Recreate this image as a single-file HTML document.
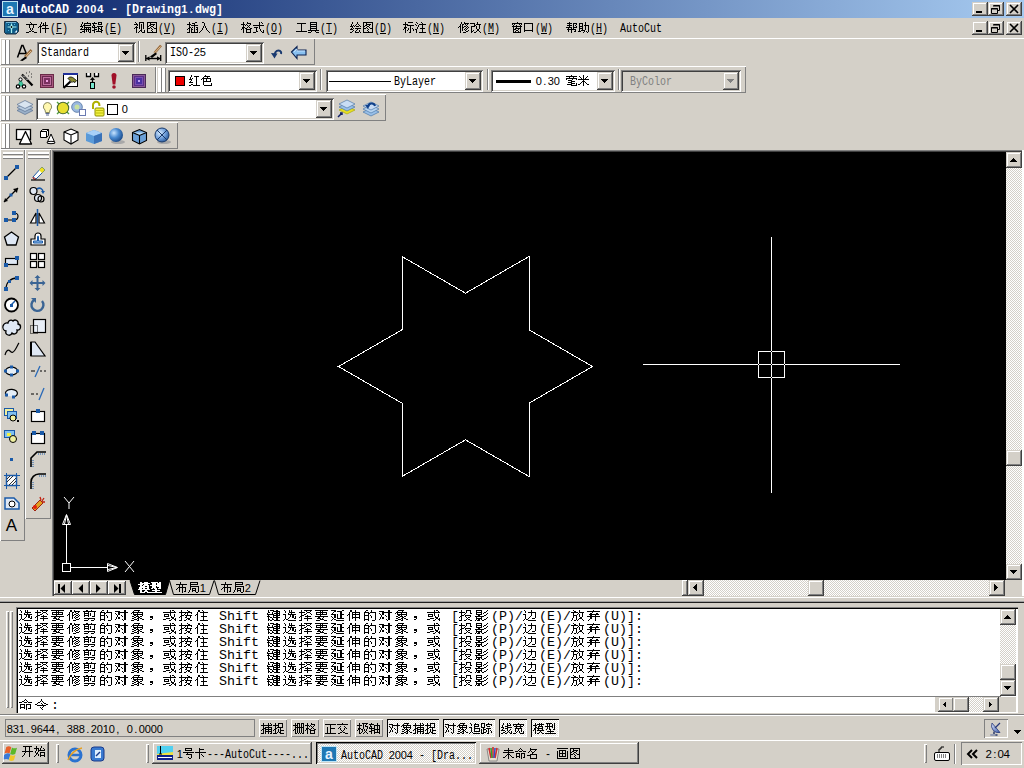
<!DOCTYPE html><html><head><meta charset="utf-8"><style>
*{margin:0;padding:0;box-sizing:border-box}
html,body{width:1024px;height:768px;overflow:hidden;background:#d4d0c8;font-family:"Liberation Sans",sans-serif}
body{position:relative}
div{position:absolute}
svg{position:absolute;overflow:visible}
svg.t{position:absolute;overflow:visible}
text{white-space:pre}
</style></head><body>
<div style="left:0px;top:0px;width:1024px;height:18px;background:linear-gradient(to right,#0a246a,#a6caf0);"></div>
<svg style="left:2px;top:1px" width="16" height="16" viewBox="0 0 16 16"><rect x="0.5" y="0.5" width="15" height="15" fill="#1e78b4" stroke="#bfe4f5"/><text x="8" y="13" text-anchor="middle" font-family="Liberation Sans" font-weight="bold" font-size="14" fill="#e8f4ff">a</text></svg>
<svg class="t" style="left:20px;top:1px;" width="207" height="18"><text x="0" y="12" font-family="Liberation Mono" font-size="12.00" font-weight="bold" fill="#fff" textLength="56" lengthAdjust="spacingAndGlyphs">AutoCAD&#160;</text><text x="56.16 63.16 70.16 77.16" y="12" font-family="Liberation Sans" font-size="11.04" font-weight="bold" fill="#fff">2004</text><text x="84" y="12" font-family="Liberation Mono" font-size="12.00" font-weight="bold" fill="#fff" textLength="77" lengthAdjust="spacingAndGlyphs">&#160;-&#160;[Drawing</text><text x="161.16 169.83" y="12" font-family="Liberation Sans" font-size="11.04" font-weight="bold" fill="#fff">1.</text><text x="175" y="12" font-family="Liberation Mono" font-size="12.00" font-weight="bold" fill="#fff" textLength="28" lengthAdjust="spacingAndGlyphs">dwg]</text></svg>
<div style="left:972px;top:2px;width:16px;height:14px;box-shadow:inset -1px -1px #404040,inset 1px 1px #d4d0c8,inset -2px -2px #808080,inset 2px 2px #fff;background:#d4d0c8;"><svg width="16" height="14" style="position:absolute;left:0;top:0"><rect x="4" y="9" width="6" height="2" fill="#000"/></svg></div>
<div style="left:988px;top:2px;width:16px;height:14px;box-shadow:inset -1px -1px #404040,inset 1px 1px #d4d0c8,inset -2px -2px #808080,inset 2px 2px #fff;background:#d4d0c8;"><svg width="16" height="14" style="position:absolute;left:0;top:0"><path d="M5.5 3.5h6v5h-2M3.5 6.5h6v5h-6z" fill="none" stroke="#000"/><path d="M5 4h7M3 7h7" stroke="#000"/></svg></div>
<div style="left:1006px;top:2px;width:16px;height:14px;box-shadow:inset -1px -1px #404040,inset 1px 1px #d4d0c8,inset -2px -2px #808080,inset 2px 2px #fff;background:#d4d0c8;"><svg width="16" height="14" style="position:absolute;left:0;top:0"><path d="M4 3l8 8M12 3l-8 8" stroke="#000" stroke-width="1.6"/></svg></div>
<svg style="left:3px;top:20px" width="17" height="15" viewBox="0 0 17 15"><path d="M1.5 1.5h12l2 2v8l-2.5 2.5H3L1.5 12.5z" fill="#0e5a86" stroke="#203040"/><path d="M3 2.5h10" stroke="#7ab8d8"/><path d="M3 3v9" stroke="#2a7aa8"/><path d="M8.5 3.5v9.5M4.5 7h9" stroke="#a8f0f0" stroke-width="1.2"/><circle cx="8.5" cy="7" r="1.8" fill="#a8f0f0"/><circle cx="8.5" cy="7" r=".9" fill="#000"/><path d="M5 4.5h1M11 4.5h1M5 10.5h1" stroke="#50b8e0"/><path d="M11.5 12.5l2.5-2.5v2.5z" fill="#e8f4ff"/></svg>
<svg class="t" style="left:26px;top:21px;" width="46" height="16"><path fill="#000" d="M4 1h1v1h-1zM5 2h1v1h-1zM0 3h11v1h-11zM3 4h1v1h-1zM7 4h1v1h-1zM3 5h1v1h-1zM7 5h1v1h-1zM3 6h1v1h-1zM7 6h1v1h-1zM4 7h1v1h-1zM6 7h1v1h-1zM4 8h1v1h-1zM6 8h1v1h-1zM5 9h1v1h-1zM3 10h2v1h-2zM6 10h2v1h-2zM0 11h3v1h-3zM8 11h3v1h-3zM15 1h1v1h-1zM19 1h1v1h-1zM15 2h1v1h-1zM17 2h1v1h-1zM19 2h1v1h-1zM14 3h1v1h-1zM17 3h1v1h-1zM19 3h1v1h-1zM14 4h1v1h-1zM16 4h6v1h-6zM13 5h3v1h-3zM19 5h1v1h-1zM12 6h1v1h-1zM14 6h1v1h-1zM19 6h1v1h-1zM14 7h1v1h-1zM16 7h7v1h-7zM14 8h1v1h-1zM19 8h1v1h-1zM14 9h1v1h-1zM19 9h1v1h-1zM14 10h1v1h-1zM19 10h1v1h-1zM14 11h1v1h-1zM19 11h1v1h-1z"/><text x="24" y="11" font-family="Liberation Mono" font-size="12.00" font-weight="normal" fill="#000" textLength="18" lengthAdjust="spacingAndGlyphs">(F)</text></svg>
<div style="left:56px;top:33px;width:6px;height:1px;background:#000;"></div>
<svg class="t" style="left:80px;top:21px;" width="46" height="16"><path fill="#000" d="M2 1h1v1h-1zM7 1h1v1h-1zM2 2h1v1h-1zM4 2h7v1h-7zM1 3h1v1h-1zM4 3h1v1h-1zM10 3h1v1h-1zM1 4h1v1h-1zM3 4h8v1h-8zM0 5h3v1h-3zM4 5h1v1h-1zM2 6h1v1h-1zM4 6h7v1h-7zM1 7h1v1h-1zM4 7h1v1h-1zM6 7h1v1h-1zM8 7h1v1h-1zM10 7h1v1h-1zM0 8h11v1h-11zM4 9h1v1h-1zM6 9h1v1h-1zM8 9h1v1h-1zM10 9h1v1h-1zM2 10h3v1h-3zM6 10h1v1h-1zM8 10h1v1h-1zM10 10h1v1h-1zM0 11h2v1h-2zM4 11h1v1h-1zM9 11h2v1h-2zM14 1h1v1h-1zM18 1h4v1h-4zM12 2h5v1h-5zM18 2h1v1h-1zM21 2h1v1h-1zM13 3h1v1h-1zM18 3h4v1h-4zM13 4h2v1h-2zM12 5h1v1h-1zM14 5h1v1h-1zM17 5h6v1h-6zM12 6h5v1h-5zM18 6h1v1h-1zM21 6h1v1h-1zM14 7h1v1h-1zM18 7h2v1h-2zM21 7h1v1h-1zM14 8h3v1h-3zM18 8h1v1h-1zM20 8h2v1h-2zM12 9h3v1h-3zM18 9h1v1h-1zM21 9h2v1h-2zM14 10h1v1h-1zM16 10h6v1h-6zM14 11h1v1h-1zM21 11h1v1h-1z"/><text x="24" y="11" font-family="Liberation Mono" font-size="12.00" font-weight="normal" fill="#000" textLength="18" lengthAdjust="spacingAndGlyphs">(E)</text></svg>
<div style="left:110px;top:33px;width:6px;height:1px;background:#000;"></div>
<svg class="t" style="left:134px;top:21px;" width="46" height="16"><path fill="#000" d="M1 1h1v1h-1zM5 1h5v1h-5zM2 2h1v1h-1zM5 2h1v1h-1zM9 2h1v1h-1zM0 3h4v1h-4zM5 3h1v1h-1zM7 3h1v1h-1zM9 3h1v1h-1zM3 4h1v1h-1zM5 4h1v1h-1zM7 4h1v1h-1zM9 4h1v1h-1zM2 5h1v1h-1zM5 5h1v1h-1zM7 5h1v1h-1zM9 5h1v1h-1zM1 6h3v1h-3zM5 6h1v1h-1zM7 6h1v1h-1zM9 6h1v1h-1zM0 7h1v1h-1zM2 7h1v1h-1zM5 7h1v1h-1zM7 7h1v1h-1zM9 7h1v1h-1zM2 8h1v1h-1zM7 8h1v1h-1zM2 9h1v1h-1zM6 9h2v1h-2zM10 9h1v1h-1zM2 10h1v1h-1zM5 10h1v1h-1zM7 10h1v1h-1zM10 10h1v1h-1zM2 11h1v1h-1zM4 11h1v1h-1zM8 11h3v1h-3zM13 1h10v1h-10zM13 2h1v1h-1zM16 2h1v1h-1zM22 2h1v1h-1zM13 3h1v1h-1zM16 3h5v1h-5zM22 3h1v1h-1zM13 4h1v1h-1zM15 4h2v1h-2zM19 4h1v1h-1zM22 4h1v1h-1zM13 5h2v1h-2zM17 5h2v1h-2zM22 5h1v1h-1zM13 6h1v1h-1zM16 6h1v1h-1zM19 6h1v1h-1zM22 6h1v1h-1zM13 7h3v1h-3zM17 7h1v1h-1zM20 7h3v1h-3zM13 8h1v1h-1zM18 8h1v1h-1zM22 8h1v1h-1zM13 9h1v1h-1zM17 9h1v1h-1zM22 9h1v1h-1zM13 10h1v1h-1zM18 10h1v1h-1zM22 10h1v1h-1zM13 11h10v1h-10z"/><text x="24" y="11" font-family="Liberation Mono" font-size="12.00" font-weight="normal" fill="#000" textLength="18" lengthAdjust="spacingAndGlyphs">(V)</text></svg>
<div style="left:164px;top:33px;width:6px;height:1px;background:#000;"></div>
<svg class="t" style="left:187px;top:21px;" width="46" height="16"><path fill="#000" d="M2 1h1v1h-1zM8 1h2v1h-2zM2 2h1v1h-1zM5 2h3v1h-3zM0 3h4v1h-4zM7 3h1v1h-1zM2 4h1v1h-1zM4 4h7v1h-7zM2 5h1v1h-1zM7 5h1v1h-1zM2 6h2v1h-2zM5 6h1v1h-1zM7 6h1v1h-1zM9 6h2v1h-2zM1 7h2v1h-2zM4 7h1v1h-1zM7 7h1v1h-1zM10 7h1v1h-1zM0 8h1v1h-1zM2 8h1v1h-1zM4 8h2v1h-2zM7 8h1v1h-1zM9 8h2v1h-2zM2 9h1v1h-1zM4 9h1v1h-1zM7 9h1v1h-1zM10 9h1v1h-1zM2 10h1v1h-1zM4 10h1v1h-1zM7 10h1v1h-1zM10 10h1v1h-1zM0 11h3v1h-3zM4 11h7v1h-7zM15 1h2v1h-2zM17 2h1v1h-1zM17 3h1v1h-1zM17 4h1v1h-1zM16 5h1v1h-1zM18 5h1v1h-1zM16 6h1v1h-1zM18 6h1v1h-1zM15 7h1v1h-1zM19 7h1v1h-1zM15 8h1v1h-1zM19 8h1v1h-1zM14 9h1v1h-1zM20 9h1v1h-1zM13 10h1v1h-1zM21 10h1v1h-1zM12 11h1v1h-1zM22 11h1v1h-1z"/><text x="24" y="11" font-family="Liberation Mono" font-size="12.00" font-weight="normal" fill="#000" textLength="18" lengthAdjust="spacingAndGlyphs">(I)</text></svg>
<div style="left:217px;top:33px;width:6px;height:1px;background:#000;"></div>
<svg class="t" style="left:241px;top:21px;" width="46" height="16"><path fill="#000" d="M2 1h1v1h-1zM6 1h1v1h-1zM2 2h1v1h-1zM6 2h4v1h-4zM0 3h4v1h-4zM5 3h1v1h-1zM9 3h1v1h-1zM2 4h1v1h-1zM4 4h1v1h-1zM6 4h1v1h-1zM8 4h1v1h-1zM2 5h1v1h-1zM7 5h1v1h-1zM1 6h3v1h-3zM6 6h1v1h-1zM8 6h1v1h-1zM1 7h2v1h-2zM4 7h2v1h-2zM9 7h2v1h-2zM0 8h1v1h-1zM2 8h1v1h-1zM5 8h5v1h-5zM2 9h1v1h-1zM5 9h1v1h-1zM9 9h1v1h-1zM2 10h1v1h-1zM5 10h1v1h-1zM9 10h1v1h-1zM2 11h1v1h-1zM5 11h5v1h-5zM18 1h1v1h-1zM20 1h1v1h-1zM18 2h1v1h-1zM21 2h1v1h-1zM18 3h1v1h-1zM12 4h11v1h-11zM18 5h1v1h-1zM13 6h4v1h-4zM18 6h1v1h-1zM15 7h1v1h-1zM18 7h1v1h-1zM15 8h1v1h-1zM19 8h1v1h-1zM15 9h1v1h-1zM19 9h1v1h-1zM22 9h1v1h-1zM15 10h2v1h-2zM20 10h1v1h-1zM22 10h1v1h-1zM12 11h3v1h-3zM21 11h2v1h-2z"/><text x="24" y="11" font-family="Liberation Mono" font-size="12.00" font-weight="normal" fill="#000" textLength="18" lengthAdjust="spacingAndGlyphs">(O)</text></svg>
<div style="left:271px;top:33px;width:6px;height:1px;background:#000;"></div>
<svg class="t" style="left:296px;top:21px;" width="46" height="16"><path fill="#000" d="M1 2h9v1h-9zM5 3h1v1h-1zM5 4h1v1h-1zM5 5h1v1h-1zM5 6h1v1h-1zM5 7h1v1h-1zM5 8h1v1h-1zM5 9h1v1h-1zM0 10h11v1h-11zM14 1h7v1h-7zM14 2h1v1h-1zM20 2h1v1h-1zM14 3h7v1h-7zM14 4h1v1h-1zM20 4h1v1h-1zM14 5h7v1h-7zM14 6h1v1h-1zM20 6h1v1h-1zM14 7h7v1h-7zM14 8h1v1h-1zM20 8h1v1h-1zM12 9h11v1h-11zM15 10h1v1h-1zM19 10h1v1h-1zM12 11h3v1h-3zM20 11h3v1h-3z"/><text x="24" y="11" font-family="Liberation Mono" font-size="12.00" font-weight="normal" fill="#000" textLength="18" lengthAdjust="spacingAndGlyphs">(T)</text></svg>
<div style="left:326px;top:33px;width:6px;height:1px;background:#000;"></div>
<svg class="t" style="left:350px;top:21px;" width="46" height="16"><path fill="#000" d="M2 1h1v1h-1zM7 1h1v1h-1zM2 2h1v1h-1zM7 2h1v1h-1zM1 3h1v1h-1zM6 3h1v1h-1zM8 3h1v1h-1zM1 4h1v1h-1zM3 4h1v1h-1zM5 4h1v1h-1zM9 4h1v1h-1zM0 5h3v1h-3zM4 5h1v1h-1zM6 5h3v1h-3zM10 5h1v1h-1zM2 6h1v1h-1zM1 7h1v1h-1zM3 7h1v1h-1zM5 7h6v1h-6zM0 8h3v1h-3zM7 8h1v1h-1zM3 9h1v1h-1zM6 9h1v1h-1zM9 9h1v1h-1zM2 10h1v1h-1zM5 10h1v1h-1zM9 10h1v1h-1zM0 11h2v1h-2zM5 11h4v1h-4zM10 11h1v1h-1zM13 1h10v1h-10zM13 2h1v1h-1zM16 2h1v1h-1zM22 2h1v1h-1zM13 3h1v1h-1zM16 3h5v1h-5zM22 3h1v1h-1zM13 4h1v1h-1zM15 4h2v1h-2zM19 4h1v1h-1zM22 4h1v1h-1zM13 5h2v1h-2zM17 5h2v1h-2zM22 5h1v1h-1zM13 6h1v1h-1zM16 6h1v1h-1zM19 6h1v1h-1zM22 6h1v1h-1zM13 7h3v1h-3zM17 7h1v1h-1zM20 7h3v1h-3zM13 8h1v1h-1zM18 8h1v1h-1zM22 8h1v1h-1zM13 9h1v1h-1zM17 9h1v1h-1zM22 9h1v1h-1zM13 10h1v1h-1zM18 10h1v1h-1zM22 10h1v1h-1zM13 11h10v1h-10z"/><text x="24" y="11" font-family="Liberation Mono" font-size="12.00" font-weight="normal" fill="#000" textLength="18" lengthAdjust="spacingAndGlyphs">(D)</text></svg>
<div style="left:380px;top:33px;width:6px;height:1px;background:#000;"></div>
<svg class="t" style="left:403px;top:21px;" width="46" height="16"><path fill="#000" d="M2 1h1v1h-1zM5 1h5v1h-5zM2 2h1v1h-1zM0 3h5v1h-5zM2 4h1v1h-1zM4 4h7v1h-7zM2 5h1v1h-1zM7 5h1v1h-1zM1 6h3v1h-3zM7 6h1v1h-1zM1 7h2v1h-2zM5 7h1v1h-1zM7 7h1v1h-1zM9 7h1v1h-1zM0 8h1v1h-1zM2 8h1v1h-1zM5 8h1v1h-1zM7 8h1v1h-1zM10 8h1v1h-1zM2 9h1v1h-1zM4 9h1v1h-1zM7 9h1v1h-1zM10 9h1v1h-1zM2 10h1v1h-1zM7 10h1v1h-1zM2 11h1v1h-1zM6 11h2v1h-2zM13 1h1v1h-1zM18 1h1v1h-1zM14 2h1v1h-1zM19 2h1v1h-1zM12 3h1v1h-1zM16 3h7v1h-7zM13 4h1v1h-1zM15 4h1v1h-1zM19 4h1v1h-1zM15 5h1v1h-1zM19 5h1v1h-1zM14 6h1v1h-1zM19 6h1v1h-1zM14 7h1v1h-1zM17 7h5v1h-5zM12 8h2v1h-2zM19 8h1v1h-1zM13 9h1v1h-1zM19 9h1v1h-1zM13 10h1v1h-1zM19 10h1v1h-1zM13 11h1v1h-1zM16 11h7v1h-7z"/><text x="24" y="11" font-family="Liberation Mono" font-size="12.00" font-weight="normal" fill="#000" textLength="18" lengthAdjust="spacingAndGlyphs">(N)</text></svg>
<div style="left:433px;top:33px;width:6px;height:1px;background:#000;"></div>
<svg class="t" style="left:458px;top:21px;" width="46" height="16"><path fill="#000" d="M3 1h1v1h-1zM6 1h1v1h-1zM3 2h1v1h-1zM6 2h5v1h-5zM2 3h1v1h-1zM4 3h2v1h-2zM7 3h1v1h-1zM9 3h1v1h-1zM2 4h1v1h-1zM4 4h1v1h-1zM8 4h1v1h-1zM1 5h2v1h-2zM4 5h1v1h-1zM6 5h2v1h-2zM9 5h1v1h-1zM0 6h1v1h-1zM2 6h1v1h-1zM4 6h2v1h-2zM8 6h1v1h-1zM10 6h1v1h-1zM2 7h1v1h-1zM4 7h1v1h-1zM7 7h1v1h-1zM9 7h1v1h-1zM2 8h1v1h-1zM4 8h1v1h-1zM6 8h1v1h-1zM8 8h1v1h-1zM2 9h1v1h-1zM4 9h1v1h-1zM7 9h1v1h-1zM10 9h1v1h-1zM2 10h1v1h-1zM8 10h2v1h-2zM2 11h1v1h-1zM5 11h3v1h-3zM19 1h1v1h-1zM12 2h5v1h-5zM19 2h1v1h-1zM16 3h1v1h-1zM18 3h5v1h-5zM16 4h2v1h-2zM21 4h1v1h-1zM13 5h4v1h-4zM18 5h1v1h-1zM21 5h1v1h-1zM13 6h1v1h-1zM18 6h1v1h-1zM21 6h1v1h-1zM13 7h1v1h-1zM18 7h1v1h-1zM21 7h1v1h-1zM13 8h1v1h-1zM19 8h2v1h-2zM13 9h1v1h-1zM15 9h1v1h-1zM19 9h2v1h-2zM13 10h2v1h-2zM18 10h1v1h-1zM21 10h1v1h-1zM13 11h1v1h-1zM16 11h2v1h-2zM22 11h1v1h-1z"/><text x="24" y="11" font-family="Liberation Mono" font-size="12.00" font-weight="normal" fill="#000" textLength="18" lengthAdjust="spacingAndGlyphs">(M)</text></svg>
<div style="left:488px;top:33px;width:6px;height:1px;background:#000;"></div>
<svg class="t" style="left:511px;top:21px;" width="46" height="16"><path fill="#000" d="M6 1h1v1h-1zM1 2h10v1h-10zM1 3h1v1h-1zM3 3h1v1h-1zM8 3h1v1h-1zM10 3h1v1h-1zM2 4h1v1h-1zM5 4h1v1h-1zM9 4h1v1h-1zM1 5h10v1h-10zM2 6h1v1h-1zM5 6h1v1h-1zM9 6h1v1h-1zM2 7h1v1h-1zM4 7h6v1h-6zM2 8h3v1h-3zM7 8h1v1h-1zM9 8h1v1h-1zM2 9h1v1h-1zM5 9h2v1h-2zM9 9h1v1h-1zM2 10h1v1h-1zM4 10h1v1h-1zM7 10h1v1h-1zM9 10h1v1h-1zM2 11h8v1h-8zM13 2h9v1h-9zM13 3h1v1h-1zM21 3h1v1h-1zM13 4h1v1h-1zM21 4h1v1h-1zM13 5h1v1h-1zM21 5h1v1h-1zM13 6h1v1h-1zM21 6h1v1h-1zM13 7h1v1h-1zM21 7h1v1h-1zM13 8h1v1h-1zM21 8h1v1h-1zM13 9h9v1h-9zM13 10h1v1h-1zM21 10h1v1h-1z"/><text x="24" y="11" font-family="Liberation Mono" font-size="12.00" font-weight="normal" fill="#000" textLength="18" lengthAdjust="spacingAndGlyphs">(W)</text></svg>
<div style="left:541px;top:33px;width:6px;height:1px;background:#000;"></div>
<svg class="t" style="left:566px;top:21px;" width="46" height="16"><path fill="#000" d="M3 1h1v1h-1zM1 2h5v1h-5zM7 2h4v1h-4zM3 3h1v1h-1zM7 3h1v1h-1zM10 3h1v1h-1zM1 4h5v1h-5zM7 4h1v1h-1zM9 4h1v1h-1zM3 5h1v1h-1zM7 5h1v1h-1zM10 5h1v1h-1zM0 6h6v1h-6zM7 6h4v1h-4zM2 7h1v1h-1zM5 7h1v1h-1zM7 7h1v1h-1zM1 8h9v1h-9zM2 9h1v1h-1zM5 9h1v1h-1zM9 9h1v1h-1zM2 10h1v1h-1zM5 10h1v1h-1zM8 10h2v1h-2zM5 11h1v1h-1zM19 1h1v1h-1zM13 2h4v1h-4zM19 2h1v1h-1zM13 3h1v1h-1zM16 3h1v1h-1zM19 3h1v1h-1zM13 4h1v1h-1zM16 4h1v1h-1zM18 4h5v1h-5zM13 5h4v1h-4zM19 5h1v1h-1zM22 5h1v1h-1zM13 6h1v1h-1zM16 6h1v1h-1zM19 6h1v1h-1zM22 6h1v1h-1zM13 7h4v1h-4zM19 7h1v1h-1zM22 7h1v1h-1zM13 8h1v1h-1zM16 8h1v1h-1zM19 8h1v1h-1zM22 8h1v1h-1zM13 9h1v1h-1zM15 9h4v1h-4zM22 9h1v1h-1zM12 10h3v1h-3zM18 10h1v1h-1zM20 10h1v1h-1zM22 10h1v1h-1zM17 11h1v1h-1zM21 11h1v1h-1z"/><text x="24" y="11" font-family="Liberation Mono" font-size="12.00" font-weight="normal" fill="#000" textLength="18" lengthAdjust="spacingAndGlyphs">(H)</text></svg>
<div style="left:596px;top:33px;width:6px;height:1px;background:#000;"></div>
<svg class="t" style="left:620px;top:21px;" width="46" height="16"><text x="0" y="11" font-family="Liberation Mono" font-size="12.00" font-weight="normal" fill="#000" textLength="42" lengthAdjust="spacingAndGlyphs">AutoCut</text></svg>
<div style="left:972px;top:21px;width:16px;height:14px;box-shadow:inset -1px -1px #404040,inset 1px 1px #d4d0c8,inset -2px -2px #808080,inset 2px 2px #fff;background:#d4d0c8;"><svg width="16" height="14" style="position:absolute;left:0;top:0"><rect x="4" y="9" width="6" height="2" fill="#000"/></svg></div>
<div style="left:988px;top:21px;width:16px;height:14px;box-shadow:inset -1px -1px #404040,inset 1px 1px #d4d0c8,inset -2px -2px #808080,inset 2px 2px #fff;background:#d4d0c8;"><svg width="16" height="14" style="position:absolute;left:0;top:0"><path d="M5.5 3.5h6v5h-2M3.5 6.5h6v5h-6z" fill="none" stroke="#000"/><path d="M5 4h7M3 7h7" stroke="#000"/></svg></div>
<div style="left:1006px;top:21px;width:16px;height:14px;box-shadow:inset -1px -1px #404040,inset 1px 1px #d4d0c8,inset -2px -2px #808080,inset 2px 2px #fff;background:#d4d0c8;"><svg width="16" height="14" style="position:absolute;left:0;top:0"><path d="M4 3l8 8M12 3l-8 8" stroke="#000" stroke-width="1.6"/></svg></div>
<div style="left:0px;top:38px;width:1024px;height:1px;background:#fff;"></div>
<div style="left:0px;top:38px;width:315px;height:27px;box-shadow:inset 1px 1px #fff,inset -1px -1px #808080;background:#d4d0c8;"></div>
<div style="left:2px;top:40px;width:4px;height:24px;background:#fff;border-right:1px solid #808080;"></div>
<div style="left:6px;top:40px;width:4px;height:24px;background:#fff;border-right:1px solid #808080;"></div>
<svg style="left:16px;top:43px" width="18" height="18" viewBox="0 0 18 18"><path d="M1.5 14.5L5.8 2.5h1.2l3.5 8.5M3.3 10.5h6.5" fill="none" stroke="#000" stroke-width="1.5"/><path d="M15.5 7l-6.5 7" stroke="#9a6a3a" stroke-width="2.6"/><path d="M15 8l-6 6.3" stroke="#f0d8b0" stroke-width=".8"/><path d="M9.5 13.5l-5.5 4 2.5.5 4.5-3z" fill="#000"/></svg>
<div style="left:37px;top:42px;width:99px;height:22px;box-shadow:inset 1px 1px #808080,inset -1px -1px #fff,inset 2px 2px #404040,inset -2px -2px #d4d0c8;background:#fff;"></div>
<div style="left:118px;top:44px;width:16px;height:18px;box-shadow:inset -1px -1px #404040,inset 1px 1px #d4d0c8,inset -2px -2px #808080,inset 2px 2px #fff;background:#d4d0c8;"><svg width="16" height="18" style="position:absolute;left:0;top:0"><path fill="#000" d="M4 7h7v1h-7zM5 8h5v1h-5zM6 9h3v1h-3zM7 10h1v1h-1z"/></svg></div>
<div style="left:138px;top:41px;width:2px;height:21px;border-left:1px solid #808080;border-right:1px solid #fff;"></div>
<svg style="left:145px;top:43px" width="18" height="18" viewBox="0 0 18 18"><path d="M1 15.5h15" stroke="#000" stroke-width="1.4"/><path d="M0.8 12v6M15.7 12v6" stroke="#000" stroke-width="1.3"/><path d="M1 15.5l3.5-2.2v4.4zM15.5 15.5l-3.5-2.2v4.4z" fill="#000"/><path d="M16 2.5l-6.5 7.5" stroke="#9a6a3a" stroke-width="2.6"/><path d="M15.5 3.5l-6 6.5" stroke="#f0d8b0" stroke-width=".8"/><path d="M10.5 9.5l-5.5 4 2 1.5 5-4z" fill="#000"/></svg>
<div style="left:165px;top:42px;width:99px;height:22px;box-shadow:inset 1px 1px #808080,inset -1px -1px #fff,inset 2px 2px #404040,inset -2px -2px #d4d0c8;background:#fff;"></div>
<div style="left:246px;top:44px;width:16px;height:18px;box-shadow:inset -1px -1px #404040,inset 1px 1px #d4d0c8,inset -2px -2px #808080,inset 2px 2px #fff;background:#d4d0c8;"><svg width="16" height="18" style="position:absolute;left:0;top:0"><path fill="#000" d="M4 7h7v1h-7zM5 8h5v1h-5zM6 9h3v1h-3zM7 10h1v1h-1z"/></svg></div>
<svg style="left:270px;top:44px" width="16" height="16" viewBox="0 0 16 16"><path d="M4.5 12c0-3 1.5-5.5 4-5.5s3 2.2 2.5 3.5" fill="none" stroke="#1a3a70" stroke-width="2"/><path d="M1 9l3.5 5.5 3-5z" fill="#1a3a70"/></svg>
<svg style="left:290px;top:44px" width="18" height="16" viewBox="0 0 18 16"><path d="M1.5 8l5.5-5.5v3.5h9v5h-9v3.5z" fill="#88c0f0" stroke="#0a2050" stroke-width="1.1" stroke-linejoin="miter"/><path d="M4 8l3-3v2h8" fill="none" stroke="#d0e8ff" stroke-width=".8"/></svg>
<svg class="t" style="left:41px;top:45px;" width="52" height="16"><text x="0" y="11" font-family="Liberation Mono" font-size="12.00" font-weight="normal" fill="#000" textLength="48" lengthAdjust="spacingAndGlyphs">Standard</text></svg>
<svg class="t" style="left:170px;top:45px;" width="40" height="16"><text x="0" y="11" font-family="Liberation Mono" font-size="12.00" font-weight="normal" fill="#000" textLength="24" lengthAdjust="spacingAndGlyphs">ISO-</text><text x="23.66 29.66" y="11" font-family="Liberation Sans" font-size="11.04" font-weight="normal" fill="#000">25</text></svg>
<div style="left:0px;top:66px;width:156px;height:27px;box-shadow:inset 1px 1px #fff,inset -1px -1px #808080;background:#d4d0c8;"></div>
<div style="left:2px;top:68px;width:4px;height:24px;background:#fff;border-right:1px solid #808080;"></div>
<div style="left:6px;top:68px;width:4px;height:24px;background:#fff;border-right:1px solid #808080;"></div>
<svg style="left:16px;top:71px" width="18" height="18" viewBox="0 0 18 18"><path d="M6 3.5l10.5 11" stroke="#000" stroke-width="2.2"/><path d="M7 4.5l2 2M10 7.5l1.5 1.5" stroke="#fff" stroke-width="1"/><path d="M10 2h1M13 1h1M15 3h1M12 5h1M15 6h1" stroke="#333"/><path d="M4.5 8.5l-2.5 6.5h6z" fill="#40c8a0" stroke="#108060" stroke-width=".6"/><circle cx="4.5" cy="8.5" r="1.6" fill="#fff" stroke="#000" stroke-width="1"/><circle cx="2" cy="15.5" r="1.7" fill="#fff" stroke="#000" stroke-width="1.2"/><circle cx="8" cy="15.5" r="1.7" fill="#fff" stroke="#000" stroke-width="1.2"/></svg>
<svg style="left:39px;top:71px" width="16" height="16" viewBox="0 0 16 16"><rect x="1" y="3" width="14" height="14" fill="#6a2a48"/><rect x="2" y="4" width="12" height="12" fill="#a85a80"/><rect x="3" y="5" width="10" height="10" fill="#6a2a50"/><rect x="4" y="6" width="8" height="8" fill="#c070a0"/><rect x="5" y="7" width="6" height="6" fill="#7a3060"/><rect x="7" y="9" width="2" height="2" fill="#f0a0e0"/></svg>
<svg style="left:62px;top:71px" width="18" height="18" viewBox="0 0 18 18"><rect x="1.5" y="2.5" width="14" height="13" fill="#fff" stroke="#000"/><rect x="1" y="2" width="15" height="2" fill="#20309a"/><path d="M6 7.5c1-2 4-2 6 0l2.5 2-1.5 2-2-1-1 1-2-2z" fill="#8a8a30" stroke="#000" stroke-width=".8"/><path d="M8.5 10.5l-7 6.5" stroke="#000" stroke-width="2.2"/></svg>
<svg style="left:85px;top:71px" width="16" height="18" viewBox="0 0 16 18"><path d="M1.5 2v3.5h4V2M9.5 2v3.5h4V2" fill="#fff" stroke="#000" stroke-width="1.3"/><path d="M7.5 7v5" stroke="#000" stroke-width="1.3"/><path d="M5 9l2.5-3 2.5 3z" fill="#000"/><rect x="5.5" y="11.5" width="4" height="6" fill="#7ae8d0" stroke="#000"/></svg>
<svg style="left:109px;top:71px" width="10" height="18" viewBox="0 0 10 18"><path d="M2.5 4.5a2.5 2.5 0 0 1 5 0l-1.2 9h-2.6z" fill="#a01028"/><circle cx="5" cy="16" r="1.8" fill="#a01028"/></svg>
<svg style="left:131px;top:71px" width="16" height="16" viewBox="0 0 16 16"><rect x="1" y="3" width="14" height="14" fill="#4a2a58"/><rect x="2" y="4" width="12" height="12" fill="#8a5a98"/><rect x="3" y="5" width="10" height="10" fill="#5a3088"/><rect x="4" y="6" width="8" height="8" fill="#7a50b0"/><rect x="5" y="7" width="6" height="6" fill="#4a30a0"/><rect x="7" y="9" width="2" height="2" fill="#c0a0f0"/></svg>
<div style="left:156px;top:66px;width:590px;height:27px;box-shadow:inset 1px 1px #fff,inset -1px -1px #808080;background:#d4d0c8;"></div>
<div style="left:158px;top:68px;width:4px;height:24px;background:#fff;border-right:1px solid #808080;"></div>
<div style="left:162px;top:68px;width:4px;height:24px;background:#fff;border-right:1px solid #808080;"></div>
<div style="left:168px;top:70px;width:149px;height:22px;box-shadow:inset 1px 1px #808080,inset -1px -1px #fff,inset 2px 2px #404040,inset -2px -2px #d4d0c8;background:#fff;"></div>
<div style="left:299px;top:72px;width:16px;height:18px;box-shadow:inset -1px -1px #404040,inset 1px 1px #d4d0c8,inset -2px -2px #808080,inset 2px 2px #fff;background:#d4d0c8;"><svg width="16" height="18" style="position:absolute;left:0;top:0"><path fill="#000" d="M4 7h7v1h-7zM5 8h5v1h-5zM6 9h3v1h-3zM7 10h1v1h-1z"/></svg></div>
<div style="left:175px;top:76px;width:10px;height:10px;background:#e00;border:1px solid #000"></div>
<svg class="t" style="left:189px;top:74px;" width="28" height="16"><path fill="#000" d="M2 1h1v1h-1zM2 2h1v1h-1zM5 2h5v1h-5zM1 3h1v1h-1zM7 3h1v1h-1zM1 4h1v1h-1zM3 4h1v1h-1zM7 4h1v1h-1zM0 5h3v1h-3zM7 5h1v1h-1zM2 6h1v1h-1zM7 6h1v1h-1zM1 7h1v1h-1zM7 7h1v1h-1zM0 8h4v1h-4zM7 8h1v1h-1zM7 9h1v1h-1zM2 10h2v1h-2zM7 10h1v1h-1zM0 11h2v1h-2zM4 11h7v1h-7zM16 1h1v1h-1zM15 2h6v1h-6zM14 3h1v1h-1zM18 3h1v1h-1zM13 4h9v1h-9zM12 5h1v1h-1zM14 5h1v1h-1zM17 5h1v1h-1zM21 5h1v1h-1zM14 6h1v1h-1zM17 6h1v1h-1zM21 6h1v1h-1zM14 7h8v1h-8zM14 8h1v1h-1zM14 9h1v1h-1zM22 9h1v1h-1zM14 10h1v1h-1zM22 10h1v1h-1zM15 11h8v1h-8z"/></svg>
<div style="left:320px;top:69px;width:2px;height:21px;border-left:1px solid #808080;border-right:1px solid #fff;"></div>
<div style="left:326px;top:70px;width:157px;height:22px;box-shadow:inset 1px 1px #808080,inset -1px -1px #fff,inset 2px 2px #404040,inset -2px -2px #d4d0c8;background:#fff;"></div>
<div style="left:465px;top:72px;width:16px;height:18px;box-shadow:inset -1px -1px #404040,inset 1px 1px #d4d0c8,inset -2px -2px #808080,inset 2px 2px #fff;background:#d4d0c8;"><svg width="16" height="18" style="position:absolute;left:0;top:0"><path fill="#000" d="M4 7h7v1h-7zM5 8h5v1h-5zM6 9h3v1h-3zM7 10h1v1h-1z"/></svg></div>
<div style="left:329px;top:81px;width:62px;height:1px;background:#000;"></div>
<svg class="t" style="left:394px;top:74px;" width="46" height="16"><text x="0" y="11" font-family="Liberation Mono" font-size="12.00" font-weight="normal" fill="#000" textLength="42" lengthAdjust="spacingAndGlyphs">ByLayer</text></svg>
<div style="left:487px;top:69px;width:2px;height:21px;border-left:1px solid #808080;border-right:1px solid #fff;"></div>
<div style="left:491px;top:70px;width:124px;height:22px;box-shadow:inset 1px 1px #808080,inset -1px -1px #fff,inset 2px 2px #404040,inset -2px -2px #d4d0c8;background:#fff;"></div>
<div style="left:597px;top:72px;width:16px;height:18px;box-shadow:inset -1px -1px #404040,inset 1px 1px #d4d0c8,inset -2px -2px #808080,inset 2px 2px #fff;background:#d4d0c8;"><svg width="16" height="18" style="position:absolute;left:0;top:0"><path fill="#000" d="M4 7h7v1h-7zM5 8h5v1h-5zM6 9h3v1h-3zM7 10h1v1h-1z"/></svg></div>
<div style="left:496px;top:80px;width:35px;height:3px;background:#000;"></div>
<svg class="t" style="left:536px;top:74px;" width="58" height="16"><path fill="#000" d="M35 1h1v1h-1zM30 2h11v1h-11zM33 3h1v1h-1zM37 3h1v1h-1zM30 4h11v1h-11zM30 5h1v1h-1zM36 5h1v1h-1zM40 5h1v1h-1zM32 6h4v1h-4zM35 7h4v1h-4zM32 8h4v1h-4zM35 9h4v1h-4zM40 9h1v1h-1zM31 10h5v1h-5zM40 10h1v1h-1zM35 11h6v1h-6zM47 1h1v1h-1zM43 2h1v1h-1zM47 2h1v1h-1zM51 2h1v1h-1zM44 3h1v1h-1zM47 3h1v1h-1zM50 3h1v1h-1zM45 4h1v1h-1zM47 4h1v1h-1zM49 4h1v1h-1zM42 5h11v1h-11zM47 6h1v1h-1zM46 7h3v1h-3zM45 8h1v1h-1zM47 8h1v1h-1zM49 8h1v1h-1zM44 9h1v1h-1zM47 9h1v1h-1zM50 9h1v1h-1zM42 10h2v1h-2zM47 10h1v1h-1zM51 10h2v1h-2zM47 11h1v1h-1z"/><text x="-0.34 7.33 11.66 17.66" y="11" font-family="Liberation Sans" font-size="11.04" font-weight="normal" fill="#000">0.30</text></svg>
<div style="left:618px;top:69px;width:2px;height:21px;border-left:1px solid #808080;border-right:1px solid #fff;"></div>
<div style="left:621px;top:70px;width:120px;height:22px;box-shadow:inset 1px 1px #808080,inset -1px -1px #fff,inset 2px 2px #404040,inset -2px -2px #d4d0c8;background:#d4d0c8;"></div>
<div style="left:723px;top:72px;width:16px;height:18px;box-shadow:inset -1px -1px #404040,inset 1px 1px #d4d0c8,inset -2px -2px #808080,inset 2px 2px #fff;background:#d4d0c8;"><svg width="16" height="18" style="position:absolute;left:0;top:0"><path fill="#808080" d="M4 7h7v1h-7zM5 8h5v1h-5zM6 9h3v1h-3zM7 10h1v1h-1z"/></svg></div>
<svg class="t" style="left:630px;top:74px;" width="46" height="16"><text x="0" y="11" font-family="Liberation Mono" font-size="12.00" font-weight="normal" fill="#808080" textLength="42" lengthAdjust="spacingAndGlyphs">ByColor</text></svg>
<div style="left:0px;top:94px;width:386px;height:27px;box-shadow:inset 1px 1px #fff,inset -1px -1px #808080;background:#d4d0c8;"></div>
<div style="left:2px;top:96px;width:4px;height:24px;background:#fff;border-right:1px solid #808080;"></div>
<div style="left:6px;top:96px;width:4px;height:24px;background:#fff;border-right:1px solid #808080;"></div>
<svg style="left:16px;top:100px" width="18" height="16" viewBox="0 0 18 16"><path d="M1 10.5l8 4 8-4-8-4z" fill="#9ab0c8" stroke="#5a7090" stroke-width=".7"/><path d="M1 7.5l8 4 8-4-8-4z" fill="#b8cce0" stroke="#5a7090" stroke-width=".7"/><path d="M1 4.5l8 4 8-4-8-4z" fill="#d8e4f0" stroke="#5a7090" stroke-width=".7"/></svg>
<div style="left:36px;top:98px;width:298px;height:22px;box-shadow:inset 1px 1px #808080,inset -1px -1px #fff,inset 2px 2px #404040,inset -2px -2px #d4d0c8;background:#fff;"></div>
<div style="left:316px;top:100px;width:16px;height:18px;box-shadow:inset -1px -1px #404040,inset 1px 1px #d4d0c8,inset -2px -2px #808080,inset 2px 2px #fff;background:#d4d0c8;"><svg width="16" height="18" style="position:absolute;left:0;top:0"><path fill="#000" d="M4 7h7v1h-7zM5 8h5v1h-5zM6 9h3v1h-3zM7 10h1v1h-1z"/></svg></div>
<svg style="left:40px;top:101px" width="80" height="16" viewBox="0 0 80 16"><path d="M7.5 1.5a4.2 4.2 0 0 1 2.5 7.5l-.5 2.5h-4L5 9a4.2 4.2 0 0 1 2.5-7.5z" fill="#fff8b0" stroke="#7a7a50" stroke-width=".9"/><path d="M5.5 12.5h4M6 14h3" stroke="#5a6a90" stroke-width="1.2"/><path d="M17 1l12 12M29 1L17 13" stroke="#50a040" stroke-width="1.4"/><circle cx="23" cy="7" r="5.7" fill="#e8e030" stroke="#4a6a30" stroke-width="1.1"/><circle cx="37" cy="6" r="5.3" fill="#9ab8e0" stroke="#6a88b0"/><circle cx="37" cy="6" r="2.5" fill="#c8e0a0"/><rect x="39.5" y="8.5" width="6" height="6" fill="#fff" stroke="#6a7ab0"/><path d="M53 8V4a3.2 3.2 0 0 1 6.4 0v1" fill="none" stroke="#b0b000" stroke-width="2"/><rect x="55" y="7" width="9" height="8" rx="1" fill="#f0f040" stroke="#909000"/><path d="M56 9.5h7M56 12h7" stroke="#b0b000" stroke-width=".8"/><rect x="67.5" y="3.5" width="10" height="10" fill="#fff" stroke="#000"/></svg>
<svg class="t" style="left:122px;top:102px;" width="10" height="16"><text x="-0.34" y="11" font-family="Liberation Sans" font-size="11.04" font-weight="normal" fill="#000">0</text></svg>
<svg style="left:337px;top:100px" width="20" height="18" viewBox="0 0 20 18"><path d="M2 10l8 4 8-4-8-4z" fill="#e8e020" stroke="#a0a000" stroke-width=".6"/><path d="M2 7l8 4 8-4-8-4z" fill="#9ac0e8" stroke="#3a6aa0" stroke-width=".6"/><path d="M2 4l8 4 8-4-8-4z" fill="#c8dcf4" stroke="#3a6aa0" stroke-width=".6"/><path d="M1 17l4-4M3 13h2v2" stroke="#10206a" stroke-width="1.5" fill="none"/></svg>
<svg style="left:361px;top:100px" width="20" height="18" viewBox="0 0 20 18"><path d="M2 12l8 4 8-4-8-4z" fill="#9ac0e8" stroke="#3a6aa0" stroke-width=".6"/><path d="M2 9l8 4 8-4-8-4z" fill="#b8d4f0" stroke="#3a6aa0" stroke-width=".6"/><path d="M2 6l8 4 8-4-8-4z" fill="#c8dcf4" stroke="#3a6aa0" stroke-width=".6"/><path d="M7 7c0-4 6-5 7-1" fill="none" stroke="#10408a" stroke-width="2"/><path d="M4 5l3 4 2-4z" fill="#10408a"/></svg>
<div style="left:0px;top:122px;width:178px;height:27px;box-shadow:inset 1px 1px #fff,inset -1px -1px #808080;background:#d4d0c8;"></div>
<div style="left:2px;top:124px;width:4px;height:24px;background:#fff;border-right:1px solid #808080;"></div>
<div style="left:6px;top:124px;width:4px;height:24px;background:#fff;border-right:1px solid #808080;"></div>
<svg style="left:16px;top:127px" width="18" height="18" viewBox="0 0 18 18"><rect x="0.5" y="2.5" width="14" height="10" fill="#fff" stroke="#000" stroke-width="1.3"/><path d="M9.5 4.5l-6 12.5h12z" fill="#fff" stroke="#000" stroke-width="1.3" stroke-linejoin="round"/></svg>
<svg style="left:39px;top:127px" width="18" height="18" viewBox="0 0 18 18"><path d="M1.5 4.5h6v6h-6zM3.5 2.5h6v6M1.5 4.5l2-2M7.5 4.5l2-2M7.5 10.5l2-2" fill="#fff" stroke="#000"/><path d="M12 7l-4 9h8z" fill="#fff" stroke="#000"/><ellipse cx="12" cy="15.5" rx="4" ry="1.2" fill="#fff" stroke="#000"/></svg>
<svg style="left:62px;top:127px" width="18" height="18" viewBox="0 0 18 18"><path d="M2 5l7-3 7 3v8l-7 4-7-4z" fill="#fff" stroke="#000" stroke-width="1.1"/><path d="M2 5l7 3 7-3M9 8v9" fill="none" stroke="#000" stroke-width="1.1"/></svg>
<svg style="left:85px;top:127px" width="18" height="18" viewBox="0 0 18 18"><path d="M1 6l8-3 8 3v8l-8 3-8-3z" fill="#5a9ad8"/><path d="M1 6l8-3 8 3-8 3z" fill="#a8d0f8"/><path d="M9 9l8-3v8l-8 3z" fill="#3a72b8"/></svg>
<svg style="left:108px;top:127px" width="18" height="18" viewBox="0 0 18 18"><defs><radialGradient id="sg" cx=".35" cy=".35" r=".7"><stop offset="0" stop-color="#c8e4ff"/><stop offset=".5" stop-color="#4a8ad0"/><stop offset="1" stop-color="#1a4a8a"/></radialGradient></defs><ellipse cx="10" cy="15" rx="7" ry="2" fill="#a8a8a8"/><circle cx="8" cy="8" r="7" fill="url(#sg)"/></svg>
<svg style="left:131px;top:127px" width="18" height="18" viewBox="0 0 18 18"><path d="M1.5 5.5l7-3 7 3v8l-7 3.5-7-3.5z" fill="#6aa0d8" stroke="#000" stroke-width="1.1"/><path d="M1.5 5.5l7 3 7-3" fill="#b8dcf8" stroke="#000" stroke-width="1.1"/><path d="M8.5 8.5v8.5" stroke="#000" stroke-width="1.1"/></svg>
<svg style="left:154px;top:127px" width="18" height="18" viewBox="0 0 18 18"><defs><radialGradient id="sg2" cx=".35" cy=".35" r=".7"><stop offset="0" stop-color="#d8ecff"/><stop offset=".6" stop-color="#6a9ad8"/><stop offset="1" stop-color="#2a5a9a"/></radialGradient></defs><ellipse cx="10" cy="15" rx="7" ry="2" fill="#a8a8a8"/><circle cx="8" cy="8" r="7" fill="url(#sg2)" stroke="#1a3a6a"/><path d="M3 3l10 10M13 3L3 13" stroke="#1a3a6a"/></svg>
<div style="left:0px;top:149px;width:25px;height:392px;box-shadow:inset 1px 1px #fff,inset -1px -1px #808080;background:#d4d0c8;"></div>
<div style="left:3px;top:152px;width:20px;height:3px;background:#fff;border-bottom:1px solid #808080;"></div>
<div style="left:3px;top:156px;width:20px;height:3px;background:#fff;border-bottom:1px solid #808080;"></div>
<div style="left:25px;top:149px;width:26px;height:370px;box-shadow:inset 1px 1px #fff,inset -1px -1px #808080;background:#d4d0c8;"></div>
<div style="left:28px;top:152px;width:21px;height:3px;background:#fff;border-bottom:1px solid #808080;"></div>
<div style="left:28px;top:156px;width:21px;height:3px;background:#fff;border-bottom:1px solid #808080;"></div>
<svg style="left:3px;top:164px" width="18" height="18" viewBox="0 0 18 18"><path d="M3 14L14 3" stroke="#000" stroke-width="1.3"/><rect x="1" y="12" width="4" height="4" fill="#1a5aa8"/><rect x="12" y="1" width="4" height="4" fill="#1a5aa8"/></svg>
<svg style="left:3px;top:186px" width="18" height="18" viewBox="0 0 18 18"><path d="M1 16L15 2" stroke="#000" stroke-width="1.3"/><path d="M15 2l-5 1 4 4z" fill="#000"/><path d="M1 16l1-4 3 3z" fill="#000"/><rect x="6.5" y="7.5" width="3" height="3" fill="#1a5aa8"/></svg>
<svg style="left:3px;top:208px" width="18" height="18" viewBox="0 0 18 18"><path d="M3 12h8c3 0 4-2 4-4s-2-3-4-3" fill="none" stroke="#000" stroke-width="1.2"/><rect x="1" y="10" width="4" height="4" fill="#1a5aa8"/><rect x="9" y="10" width="4" height="4" fill="#1a5aa8"/><rect x="9" y="3" width="4" height="4" fill="#1a5aa8"/></svg>
<svg style="left:3px;top:230px" width="18" height="18" viewBox="0 0 18 18"><path d="M8.5 2l7 5-2.5 8h-9L1.5 7z" fill="#dfe8f4" stroke="#000" stroke-width="1.3"/></svg>
<svg style="left:3px;top:252px" width="18" height="18" viewBox="0 0 18 18"><rect x="2.5" y="6.5" width="12" height="6" fill="#dfe8f4" stroke="#000" stroke-width="1.2"/><rect x="1" y="11" width="4" height="4" fill="#1a5aa8"/><rect x="12" y="4" width="4" height="4" fill="#1a5aa8"/></svg>
<svg style="left:3px;top:274px" width="18" height="18" viewBox="0 0 18 18"><path d="M3 15C3 8 8 4 14 4" fill="none" stroke="#000" stroke-width="1.3"/><rect x="1" y="13" width="4" height="4" fill="#1a5aa8"/><rect x="12" y="2" width="4" height="4" fill="#1a5aa8"/><rect x="5" y="6" width="3" height="3" fill="#1a5aa8"/></svg>
<svg style="left:3px;top:296px" width="18" height="18" viewBox="0 0 18 18"><circle cx="8.5" cy="9" r="6.5" fill="#fff" stroke="#000" stroke-width="1.8"/><path d="M8 9l4-4" stroke="#1a5aa8" stroke-width="1.5"/><rect x="7" y="8" width="3" height="3" fill="#1a5aa8"/></svg>
<svg style="left:3px;top:318px" width="18" height="18" viewBox="0 0 18 18"><path d="M5 5a3 3 0 0 1 5-2 3 3 0 0 1 5 3 3 3 0 0 1-1 6 3 3 0 0 1-5 3 3 3 0 0 1-6-2 3 3 0 0 1 2-8z" fill="#dfe8f4" stroke="#000" stroke-width="1.3"/></svg>
<svg style="left:3px;top:340px" width="18" height="18" viewBox="0 0 18 18"><path d="M2 15c1-4 3-6 5-4s3 2 5-1 3-6 4-7" fill="none" stroke="#000" stroke-width="1.2"/></svg>
<svg style="left:3px;top:362px" width="18" height="18" viewBox="0 0 18 18"><ellipse cx="8.5" cy="9" rx="6" ry="3.8" fill="#e4eef8" stroke="#000" stroke-width="1.2"/><rect x="1" y="7.5" width="3" height="3" fill="#1a5aa8"/><rect x="13" y="7.5" width="3" height="3" fill="#1a5aa8"/><rect x="7" y="3.5" width="3" height="3" fill="#1a5aa8"/><rect x="7" y="11.5" width="3" height="3" fill="#1a5aa8"/></svg>
<svg style="left:3px;top:384px" width="18" height="18" viewBox="0 0 18 18"><path d="M4 12A6 4 0 1 1 12 12.5" fill="#e4eef8" stroke="#000" stroke-width="1.2"/><rect x="2" y="9.5" width="3" height="3" fill="#1a5aa8"/><rect x="9" y="11.5" width="3" height="3" fill="#1a5aa8"/></svg>
<svg style="left:3px;top:406px" width="18" height="18" viewBox="0 0 18 18"><rect x="1.5" y="2.5" width="9" height="7" fill="#f0f0a0" stroke="#1a5aa8"/><rect x="4.5" y="5.5" width="9" height="7" fill="#80c0f0" stroke="#1a5aa8"/><circle cx="10" cy="12" r="3" fill="#f0f0a0" stroke="#000"/><path d="M14 14h2v2h-2z" fill="#000"/></svg>
<svg style="left:3px;top:428px" width="18" height="18" viewBox="0 0 18 18"><rect x="1.5" y="2.5" width="10" height="7" fill="#80c0f0" stroke="#1a5aa8"/><circle cx="10" cy="11" r="3.5" fill="#f0f0a0" stroke="#000"/><rect x="4" y="5" width="4" height="3" fill="#f0f040"/></svg>
<svg style="left:3px;top:450px" width="18" height="18" viewBox="0 0 18 18"><rect x="7" y="8" width="3" height="3" fill="#1a5aa8"/></svg>
<svg style="left:3px;top:472px" width="18" height="18" viewBox="0 0 18 18"><rect x="3.5" y="3.5" width="10" height="10" fill="#fff" stroke="#1a5aa8" stroke-width="1.5"/><path d="M4 10l6-6M6 13l7-7M4 7l3-3M9 13l4-4" stroke="#000" stroke-width=".8"/><path d="M1 3.5h16M1 13.5h16M3.5 1v16M13.5 1v16" stroke="#1a5aa8"/></svg>
<svg style="left:3px;top:494px" width="18" height="18" viewBox="0 0 18 18"><path d="M2 4h9l5 5v6H2z" fill="#dfe8f4" stroke="#1a5aa8" stroke-width="1.5"/><circle cx="9" cy="10" r="3" fill="#fff" stroke="#000"/></svg>
<svg style="left:3px;top:516px" width="18" height="18" viewBox="0 0 18 18"><text x="8.5" y="15" text-anchor="middle" font-family="Liberation Sans" font-size="17" fill="#000">A</text></svg>
<svg style="left:29px;top:164px" width="18" height="18" viewBox="0 0 18 18"><path d="M4 13l9-10 3 3-9 9z" fill="#fff" stroke="#1a5aa8"/><path d="M10 6l3-3 3 3-3 3z" fill="#f0e020"/><path d="M4 13a2 2 0 0 0 3 2" fill="#e08080" stroke="#a02020"/><path d="M2 16h14" stroke="#000" stroke-width="1.2"/></svg>
<svg style="left:29px;top:186px" width="18" height="18" viewBox="0 0 18 18"><circle cx="4.5" cy="5" r="3.5" fill="#dfe8f4" stroke="#000" stroke-width="1.2"/><circle cx="9" cy="12" r="3.5" fill="#dfe8f4" stroke="#000" stroke-width="1.2"/><circle cx="12" cy="13" r="3" fill="none" stroke="#000" stroke-width="1.2"/><path d="M8 3c3-2 6 0 6 3" fill="none" stroke="#1a5aa8" stroke-width="1.6"/><path d="M12 5h4l-2 3z" fill="#1a5aa8"/></svg>
<svg style="left:29px;top:208px" width="18" height="18" viewBox="0 0 18 18"><path d="M1.5 15l5.5-10v10z" fill="#fff" stroke="#000" stroke-width="1.2"/><path d="M15.5 15l-5.5-10v10z" fill="#fff" stroke="#000" stroke-width="1.2"/><path d="M8.5 1v17" stroke="#1a5aa8" stroke-width="1.5"/></svg>
<svg style="left:29px;top:230px" width="18" height="18" viewBox="0 0 18 18"><path d="M2 15V9h4V6a3 3 0 0 1 6 0v3h4v6z" fill="#fff" stroke="#000" stroke-width="1.2"/><path d="M4.5 13v-2h4V6.5a.5.5 0 0 1 1 0V11h4v2z" fill="#8ab8e8" stroke="#1a5aa8"/></svg>
<svg style="left:29px;top:252px" width="18" height="18" viewBox="0 0 18 18"><rect x="1.5" y="1.5" width="6" height="6" fill="#fff" stroke="#000" stroke-width="1.2"/><rect x="9.5" y="1.5" width="6" height="6" fill="#fff" stroke="#000" stroke-width="1.2"/><rect x="1.5" y="9.5" width="6" height="6" fill="#fff" stroke="#000" stroke-width="1.2"/><rect x="9.5" y="9.5" width="6" height="6" fill="#fff" stroke="#000" stroke-width="1.2"/></svg>
<svg style="left:29px;top:274px" width="18" height="18" viewBox="0 0 18 18"><path d="M8.5 1l3 3h-2v4h4V6l3 3-3 3v-2h-4v4h2l-3 3-3-3h2v-4h-4v2l-3-3 3-3v2h4V4h-2z" fill="#3a6494"/></svg>
<svg style="left:29px;top:296px" width="18" height="18" viewBox="0 0 18 18"><path d="M13 5A6 6 0 1 1 5 4" fill="none" stroke="#3a6494" stroke-width="2.4"/><path d="M2 2h5v5z" fill="#3a6494"/></svg>
<svg style="left:29px;top:318px" width="18" height="18" viewBox="0 0 18 18"><rect x="4.5" y="1.5" width="12" height="13" fill="#e8eef6" stroke="#000" stroke-width="1.2"/><path d="M1.5 7.5h7v8h-7z" fill="none" stroke="#000" stroke-dasharray="1 1"/></svg>
<svg style="left:29px;top:340px" width="18" height="18" viewBox="0 0 18 18"><path d="M2 2h4l10 14H2z" fill="#dfe8f4" stroke="#000" stroke-width="1.2"/><path d="M2 2v14" stroke="#000" stroke-width="2"/></svg>
<svg style="left:29px;top:362px" width="18" height="18" viewBox="0 0 18 18"><path d="M2 9h4M11 9h2M15 9h2" stroke="#000" stroke-width="1.2"/><path d="M6 15l5-11" stroke="#2a6ab8" stroke-width="1.3"/></svg>
<svg style="left:29px;top:384px" width="18" height="18" viewBox="0 0 18 18"><path d="M2 10h3M7 10h2" stroke="#000" stroke-width="1.2"/><path d="M10 16l5-12" stroke="#2a6ab8" stroke-width="1.3"/></svg>
<svg style="left:29px;top:406px" width="18" height="18" viewBox="0 0 18 18"><rect x="2.5" y="5.5" width="13" height="10" fill="#fff" stroke="#000" stroke-width="1.2"/><rect x="7" y="3" width="4" height="4" fill="#1a5aa8"/></svg>
<svg style="left:29px;top:428px" width="18" height="18" viewBox="0 0 18 18"><rect x="2.5" y="5.5" width="13" height="10" fill="#fff" stroke="#000" stroke-width="1.2"/><rect x="3" y="3" width="4" height="4" fill="#1a5aa8"/><rect x="11" y="3" width="4" height="4" fill="#1a5aa8"/></svg>
<svg style="left:29px;top:450px" width="18" height="18" viewBox="0 0 18 18"><path d="M2 17V8l6-6h9" fill="none" stroke="#000" stroke-width="1.6"/><path d="M4 17V9M9 4h8" stroke="#1a5aa8" stroke-dasharray="1 1"/></svg>
<svg style="left:29px;top:472px" width="18" height="18" viewBox="0 0 18 18"><path d="M2 17V10a8 8 0 0 1 8-8h7" fill="none" stroke="#000" stroke-width="1.6"/><path d="M4 17v-7M10 4h7" stroke="#1a5aa8" stroke-dasharray="1 1"/></svg>
<svg style="left:29px;top:494px" width="18" height="18" viewBox="0 0 18 18"><path d="M3 14l8-8 3 3-8 8z" fill="#e0a020" stroke="#a02010"/><path d="M11 3l1 3M15 4l-2 3M16 8l-3 0" stroke="#c02010" stroke-width="1.3"/><circle cx="6" cy="13" r="2" fill="#e02010"/></svg>
<div style="left:52px;top:150px;width:970px;height:430px;background:#000;box-shadow:inset 1px 1px #808080,inset 2px 2px #404040;"></div>
<div style="left:52px;top:580px;width:2px;height:16px;border-left:1px solid #808080;border-right:1px solid #404040;"></div>
<div style="left:1022px;top:150px;width:2px;height:446px;background:#fff;"></div>
<svg style="left:0;top:0" width="1024" height="768" shape-rendering="crispEdges"><polygon fill="none" stroke="#fff" stroke-width="1" points="592.5,366.5 529.0,329.8 529.0,256.5 465.5,293.2 402.0,256.5 402.0,329.8 338.5,366.5 402.0,403.2 402.0,476.5 465.5,439.8 529.0,476.5 529.0,403.2"/><path d="M643 364.5h257M771.5 237v256" stroke="#fff"/><rect x="758.5" y="351.5" width="26" height="26" fill="none" stroke="#fff"/><path d="M771 351h1v1h-1zM771 377h1v1h-1zM758 364h1v1h-1zM784 364h1v1h-1zM771 364h1v1h-1z" fill="#000"/><rect x="62.5" y="563.5" width="8" height="8" fill="none" stroke="#fff"/><path d="M66.5 563V525M71 567.5h37" stroke="#fff"/><path d="M62.5 524.5h8l-4-10z M64.5 524l2-9 2 9" fill="none" stroke="#fff" shape-rendering="auto"/><path d="M107.5 563.5v8l10-4z M108 565.5l9 2-9 2" fill="none" stroke="#fff" shape-rendering="auto"/><path d="M64 497l5 6 5-6M69 503v6" fill="none" stroke="#fff" shape-rendering="auto"/><path d="M125 561l9 11M134 561l-9 11" fill="none" stroke="#fff" shape-rendering="auto"/></svg>
<div style="left:1006px;top:152px;width:16px;height:428px;background:repeating-conic-gradient(#fff 0 25%,#d4d0c8 0 50%) 0 0/2px 2px;"></div>
<div style="left:1006px;top:152px;width:16px;height:16px;box-shadow:inset -1px -1px #404040,inset 1px 1px #d4d0c8,inset -2px -2px #808080,inset 2px 2px #fff;background:#d4d0c8;"><svg width="16" height="16" style="position:absolute;left:0;top:0"><path fill="#000" d="M4 9h7v1h-7zM5 8h5v1h-5zM6 7h3v1h-3zM7 6h1v1h-1z"/></svg></div>
<div style="left:1006px;top:564px;width:16px;height:16px;box-shadow:inset -1px -1px #404040,inset 1px 1px #d4d0c8,inset -2px -2px #808080,inset 2px 2px #fff;background:#d4d0c8;"><svg width="16" height="16" style="position:absolute;left:0;top:0"><path fill="#000" d="M4 6h7v1h-7zM5 7h5v1h-5zM6 8h3v1h-3zM7 9h1v1h-1z"/></svg></div>
<div style="left:1006px;top:450px;width:16px;height:16px;box-shadow:inset -1px -1px #404040,inset 1px 1px #d4d0c8,inset -2px -2px #808080,inset 2px 2px #fff;background:#d4d0c8;"></div>
<div style="left:54px;top:580px;width:952px;height:16px;background:#d4d0c8;"></div>
<div style="left:54px;top:581px;width:18px;height:14px;box-shadow:inset -1px -1px #404040,inset 1px 1px #fff,inset -2px -2px #808080;background:#d4d0c8;"><svg width="18" height="14" style="left:0;top:0"><rect x="4" y="3" width="2" height="9" fill="#000"/><polygon points="11,3 11,12 6.5,7.5" fill="#000"/></svg></div>
<div style="left:72px;top:581px;width:18px;height:14px;box-shadow:inset -1px -1px #404040,inset 1px 1px #fff,inset -2px -2px #808080;background:#d4d0c8;"><svg width="18" height="14" style="left:0;top:0"><polygon points="11,3 11,12 6.5,7.5" fill="#000"/></svg></div>
<div style="left:90px;top:581px;width:18px;height:14px;box-shadow:inset -1px -1px #404040,inset 1px 1px #fff,inset -2px -2px #808080;background:#d4d0c8;"><svg width="18" height="14" style="left:0;top:0"><polygon points="6,3 6,12 10.5,7.5" fill="#000"/></svg></div>
<div style="left:108px;top:581px;width:18px;height:14px;box-shadow:inset -1px -1px #404040,inset 1px 1px #fff,inset -2px -2px #808080;background:#d4d0c8;"><svg width="18" height="14" style="left:0;top:0"><polygon points="6,3 6,12 10.5,7.5" fill="#000"/><rect x="11" y="3" width="2" height="9" fill="#000"/></svg></div>
<svg style="left:0;top:0" width="1024" height="768"><path d="M214.5 580.5l4 14h37l4.5-14" fill="#d4d0c8" stroke="#000"/><path d="M169.5 580.5l4 14h36l4.5-14" fill="#d4d0c8" stroke="#000"/><path d="M130 580.5l4.5 14h31l4-14z" fill="#000" stroke="#000"/></svg><svg class="t" style="left:138px;top:581px;" width="28" height="16"><path fill="#fff" d="M2 1h2v1h-2zM6 1h4v1h-4zM2 2h10v1h-10zM0 3h5v1h-5zM6 3h4v1h-4zM2 4h2v1h-2zM5 4h6v1h-6zM2 5h5v1h-5zM9 5h2v1h-2zM1 6h10v1h-10zM1 7h3v1h-3zM5 7h2v1h-2zM9 7h2v1h-2zM0 8h12v1h-12zM2 9h2v1h-2zM7 9h2v1h-2zM2 10h2v1h-2zM6 10h4v1h-4zM2 11h5v1h-5zM9 11h3v1h-3zM13 1h7v1h-7zM21 1h2v1h-2zM14 2h4v1h-4zM19 2h4v1h-4zM14 3h4v1h-4zM19 3h4v1h-4zM12 4h11v1h-11zM14 5h4v1h-4zM19 5h4v1h-4zM14 6h4v1h-4zM21 6h2v1h-2zM13 7h2v1h-2zM16 7h3v1h-3zM20 7h3v1h-3zM17 8h2v1h-2zM14 9h8v1h-8zM17 10h2v1h-2zM12 11h12v1h-12z"/></svg><svg class="t" style="left:176px;top:581px;" width="34" height="16"><path fill="#000" d="M4 1h1v1h-1zM4 2h1v1h-1zM0 3h11v1h-11zM3 4h1v1h-1zM6 4h1v1h-1zM3 5h1v1h-1zM6 5h1v1h-1zM2 6h8v1h-8zM1 7h1v1h-1zM3 7h1v1h-1zM6 7h1v1h-1zM9 7h1v1h-1zM0 8h1v1h-1zM3 8h1v1h-1zM6 8h1v1h-1zM9 8h1v1h-1zM3 9h1v1h-1zM6 9h1v1h-1zM9 9h1v1h-1zM3 10h1v1h-1zM6 10h1v1h-1zM8 10h2v1h-2zM6 11h1v1h-1zM14 1h8v1h-8zM14 2h1v1h-1zM21 2h1v1h-1zM14 3h8v1h-8zM14 4h1v1h-1zM14 5h9v1h-9zM14 6h1v1h-1zM22 6h1v1h-1zM14 7h1v1h-1zM16 7h4v1h-4zM22 7h1v1h-1zM14 8h1v1h-1zM16 8h1v1h-1zM19 8h1v1h-1zM22 8h1v1h-1zM13 9h1v1h-1zM16 9h4v1h-4zM22 9h1v1h-1zM13 10h1v1h-1zM16 10h1v1h-1zM19 10h1v1h-1zM22 10h1v1h-1zM12 11h1v1h-1zM20 11h2v1h-2z"/><text x="23.66" y="11" font-family="Liberation Sans" font-size="11.04" font-weight="normal" fill="#000">1</text></svg><svg class="t" style="left:221px;top:581px;" width="34" height="16"><path fill="#000" d="M4 1h1v1h-1zM4 2h1v1h-1zM0 3h11v1h-11zM3 4h1v1h-1zM6 4h1v1h-1zM3 5h1v1h-1zM6 5h1v1h-1zM2 6h8v1h-8zM1 7h1v1h-1zM3 7h1v1h-1zM6 7h1v1h-1zM9 7h1v1h-1zM0 8h1v1h-1zM3 8h1v1h-1zM6 8h1v1h-1zM9 8h1v1h-1zM3 9h1v1h-1zM6 9h1v1h-1zM9 9h1v1h-1zM3 10h1v1h-1zM6 10h1v1h-1zM8 10h2v1h-2zM6 11h1v1h-1zM14 1h8v1h-8zM14 2h1v1h-1zM21 2h1v1h-1zM14 3h8v1h-8zM14 4h1v1h-1zM14 5h9v1h-9zM14 6h1v1h-1zM22 6h1v1h-1zM14 7h1v1h-1zM16 7h4v1h-4zM22 7h1v1h-1zM14 8h1v1h-1zM16 8h1v1h-1zM19 8h1v1h-1zM22 8h1v1h-1zM13 9h1v1h-1zM16 9h4v1h-4zM22 9h1v1h-1zM13 10h1v1h-1zM16 10h1v1h-1zM19 10h1v1h-1zM22 10h1v1h-1zM12 11h1v1h-1zM20 11h2v1h-2z"/><text x="23.66" y="11" font-family="Liberation Sans" font-size="11.04" font-weight="normal" fill="#000">2</text></svg>
<div style="left:682px;top:580px;width:6px;height:16px;box-shadow:inset -1px -1px #404040,inset 1px 1px #fff,inset -2px -2px #808080;background:#d4d0c8;"></div>
<div style="left:688px;top:580px;width:317px;height:16px;background:repeating-conic-gradient(#fff 0 25%,#d4d0c8 0 50%) 0 0/2px 2px;"></div>
<div style="left:688px;top:580px;width:16px;height:16px;box-shadow:inset -1px -1px #404040,inset 1px 1px #d4d0c8,inset -2px -2px #808080,inset 2px 2px #fff;background:#d4d0c8;"><svg width="16" height="16" style="position:absolute;left:0;top:0"><path fill="#000" d="M8 4v7h1v-7zM7 5v5h1v-5zM6 6v3h1v-3zM5 7v1h1v-1z"/></svg></div>
<div style="left:989px;top:580px;width:16px;height:16px;box-shadow:inset -1px -1px #404040,inset 1px 1px #d4d0c8,inset -2px -2px #808080,inset 2px 2px #fff;background:#d4d0c8;"><svg width="16" height="16" style="position:absolute;left:0;top:0"><path fill="#000" d="M5 4v7h1v-7zM6 5v5h1v-5zM7 6v3h1v-3zM8 7v1h1v-1z"/></svg></div>
<div style="left:808px;top:580px;width:16px;height:16px;box-shadow:inset -1px -1px #404040,inset 1px 1px #d4d0c8,inset -2px -2px #808080,inset 2px 2px #fff;background:#d4d0c8;"></div>
<div style="left:0px;top:597px;width:1024px;height:1px;background:#fff;"></div>
<div style="left:0px;top:601px;width:1024px;height:1px;background:#a0a0a0;"></div>
<div style="left:0px;top:602px;width:1024px;height:1px;background:#202020;"></div>
<div style="left:0px;top:603px;width:1024px;height:112px;background:#d4d0c8;"></div>
<div style="left:6px;top:611px;width:3px;height:97px;box-shadow:inset 1px 1px #fff,inset -1px -1px #808080;"></div>
<div style="left:10px;top:611px;width:3px;height:97px;box-shadow:inset 1px 1px #fff,inset -1px -1px #808080;"></div>
<div style="left:16px;top:607px;width:1002px;height:106px;background:#fff;box-shadow:inset 1px 1px #808080,inset 2px 2px #000, inset -1px -1px #fff;"></div>
<svg class="t" style="left:19px;top:609px;" width="628" height="16"><path fill="#000" d="M1 1h1v1h-1zM6 1h1v1h-1zM8 1h1v1h-1zM2 2h1v1h-1zM6 2h1v1h-1zM8 2h1v1h-1zM2 3h1v1h-1zM6 3h6v1h-6zM5 4h1v1h-1zM8 4h1v1h-1zM0 5h3v1h-3zM5 5h8v1h-8zM2 6h1v1h-1zM7 6h1v1h-1zM9 6h2v1h-2zM2 7h1v1h-1zM7 7h1v1h-1zM9 7h2v1h-2zM12 7h1v1h-1zM2 8h1v1h-1zM6 8h1v1h-1zM9 8h2v1h-2zM12 8h1v1h-1zM2 9h1v1h-1zM5 9h1v1h-1zM11 9h2v1h-2zM1 10h1v1h-1zM3 10h2v1h-2zM0 11h1v1h-1zM5 11h8v1h-8zM18 1h1v1h-1zM21 1h8v1h-8zM18 2h1v1h-1zM23 2h1v1h-1zM27 2h1v1h-1zM16 3h6v1h-6zM24 3h3v1h-3zM18 4h1v1h-1zM23 4h1v1h-1zM27 4h1v1h-1zM18 5h1v1h-1zM21 5h2v1h-2zM28 5h1v1h-1zM18 6h3v1h-3zM24 6h1v1h-1zM17 7h2v1h-2zM22 7h6v1h-6zM16 8h1v1h-1zM18 8h1v1h-1zM24 8h1v1h-1zM18 9h1v1h-1zM21 9h8v1h-8zM18 10h1v1h-1zM24 10h1v1h-1zM16 11h3v1h-3zM24 11h1v1h-1zM32 1h13v1h-13zM37 2h1v1h-1zM39 2h1v1h-1zM33 3h11v1h-11zM33 4h1v1h-1zM37 4h1v1h-1zM39 4h1v1h-1zM43 4h1v1h-1zM33 5h11v1h-11zM37 6h1v1h-1zM32 7h13v1h-13zM35 8h2v1h-2zM40 8h1v1h-1zM34 9h4v1h-4zM39 9h1v1h-1zM37 10h4v1h-4zM33 11h4v1h-4zM41 11h3v1h-3zM51 1h2v1h-2zM55 1h1v1h-1zM51 2h2v1h-2zM55 2h6v1h-6zM50 3h1v1h-1zM53 3h2v1h-2zM56 3h1v1h-1zM59 3h1v1h-1zM50 4h1v1h-1zM53 4h1v1h-1zM57 4h2v1h-2zM49 5h2v1h-2zM53 5h1v1h-1zM55 5h2v1h-2zM59 5h1v1h-1zM48 6h1v1h-1zM50 6h1v1h-1zM53 6h2v1h-2zM57 6h2v1h-2zM60 6h1v1h-1zM50 7h1v1h-1zM53 7h1v1h-1zM56 7h1v1h-1zM59 7h1v1h-1zM50 8h1v1h-1zM53 8h1v1h-1zM55 8h1v1h-1zM57 8h2v1h-2zM50 9h1v1h-1zM53 9h1v1h-1zM56 9h1v1h-1zM60 9h1v1h-1zM50 10h1v1h-1zM57 10h3v1h-3zM50 11h1v1h-1zM54 11h3v1h-3zM67 1h2v1h-2zM72 1h1v1h-1zM64 2h13v1h-13zM65 3h1v1h-1zM69 3h1v1h-1zM75 3h1v1h-1zM65 4h5v1h-5zM71 4h1v1h-1zM75 4h1v1h-1zM65 5h1v1h-1zM69 5h1v1h-1zM71 5h1v1h-1zM75 5h1v1h-1zM65 6h5v1h-5zM71 6h1v1h-1zM75 6h1v1h-1zM65 7h1v1h-1zM69 7h1v1h-1zM73 7h3v1h-3zM65 9h11v1h-11zM69 10h1v1h-1zM75 10h1v1h-1zM65 11h4v1h-4zM72 11h3v1h-3zM83 1h2v1h-2zM88 1h1v1h-1zM82 2h1v1h-1zM88 2h1v1h-1zM81 3h5v1h-5zM87 3h6v1h-6zM81 4h1v1h-1zM85 4h2v1h-2zM92 4h1v1h-1zM81 5h1v1h-1zM85 5h1v1h-1zM92 5h1v1h-1zM81 6h5v1h-5zM87 6h1v1h-1zM92 6h1v1h-1zM81 7h1v1h-1zM85 7h1v1h-1zM88 7h1v1h-1zM92 7h1v1h-1zM81 8h1v1h-1zM85 8h1v1h-1zM88 8h1v1h-1zM92 8h1v1h-1zM81 9h1v1h-1zM85 9h1v1h-1zM92 9h1v1h-1zM81 10h5v1h-5zM92 10h1v1h-1zM81 11h1v1h-1zM85 11h1v1h-1zM89 11h3v1h-3zM105 1h2v1h-2zM96 2h5v1h-5zM105 2h2v1h-2zM99 3h10v1h-10zM96 4h1v1h-1zM99 4h2v1h-2zM105 4h2v1h-2zM97 5h1v1h-1zM99 5h2v1h-2zM105 5h2v1h-2zM98 6h1v1h-1zM102 6h1v1h-1zM105 6h2v1h-2zM98 7h1v1h-1zM103 7h1v1h-1zM105 7h2v1h-2zM97 8h1v1h-1zM99 8h2v1h-2zM105 8h2v1h-2zM97 9h1v1h-1zM99 9h2v1h-2zM105 9h2v1h-2zM96 10h1v1h-1zM103 10h1v1h-1zM105 10h2v1h-2zM104 11h1v1h-1zM115 1h6v1h-6zM114 2h1v1h-1zM119 2h1v1h-1zM113 3h11v1h-11zM112 4h1v1h-1zM114 4h1v1h-1zM118 4h1v1h-1zM123 4h1v1h-1zM114 5h10v1h-10zM115 6h2v1h-2zM118 6h1v1h-1zM123 6h1v1h-1zM113 7h2v1h-2zM117 7h3v1h-3zM121 7h2v1h-2zM115 8h2v1h-2zM119 8h2v1h-2zM113 9h2v1h-2zM118 9h2v1h-2zM121 9h2v1h-2zM115 10h3v1h-3zM119 10h1v1h-1zM123 10h2v1h-2zM112 11h3v1h-3zM118 11h2v1h-2zM131 7h3v1h-3zM131 8h3v1h-3zM133 9h1v1h-1zM131 10h2v1h-2zM151 1h1v1h-1zM153 1h2v1h-2zM151 2h1v1h-1zM155 2h1v1h-1zM144 3h13v1h-13zM151 4h1v1h-1zM145 5h5v1h-5zM151 5h1v1h-1zM155 5h1v1h-1zM145 6h1v1h-1zM149 6h1v1h-1zM151 6h1v1h-1zM155 6h1v1h-1zM145 7h5v1h-5zM152 7h1v1h-1zM155 7h1v1h-1zM152 8h3v1h-3zM147 9h4v1h-4zM153 9h2v1h-2zM156 9h1v1h-1zM144 10h3v1h-3zM152 10h1v1h-1zM155 10h2v1h-2zM150 11h2v1h-2zM156 11h1v1h-1zM162 1h1v1h-1zM168 1h1v1h-1zM162 2h1v1h-1zM169 2h2v1h-2zM160 3h13v1h-13zM162 4h1v1h-1zM166 4h1v1h-1zM168 4h1v1h-1zM172 4h1v1h-1zM162 5h1v1h-1zM165 5h1v1h-1zM168 5h1v1h-1zM162 6h3v1h-3zM166 6h7v1h-7zM161 7h2v1h-2zM167 7h1v1h-1zM171 7h1v1h-1zM160 8h1v1h-1zM162 8h1v1h-1zM166 8h2v1h-2zM171 8h1v1h-1zM162 9h1v1h-1zM168 9h3v1h-3zM162 10h1v1h-1zM167 10h1v1h-1zM169 10h2v1h-2zM160 11h3v1h-3zM165 11h2v1h-2zM171 11h2v1h-2zM179 1h2v1h-2zM183 1h1v1h-1zM179 2h2v1h-2zM184 2h1v1h-1zM178 3h1v1h-1zM181 3h8v1h-8zM178 4h1v1h-1zM184 4h1v1h-1zM177 5h2v1h-2zM184 5h1v1h-1zM176 6h1v1h-1zM178 6h1v1h-1zM184 6h1v1h-1zM178 7h1v1h-1zM182 7h6v1h-6zM178 8h1v1h-1zM184 8h1v1h-1zM178 9h1v1h-1zM184 9h1v1h-1zM178 10h1v1h-1zM184 10h1v1h-1zM178 11h1v1h-1zM181 11h8v1h-8zM249 1h1v1h-1zM251 1h4v1h-4zM257 1h2v1h-2zM249 2h1v1h-1zM254 2h7v1h-7zM249 3h2v1h-2zM253 3h1v1h-1zM257 3h2v1h-2zM260 3h1v1h-1zM248 4h1v1h-1zM253 4h1v1h-1zM255 4h6v1h-6zM248 5h7v1h-7zM257 5h2v1h-2zM260 5h1v1h-1zM249 6h1v1h-1zM254 6h7v1h-7zM248 7h3v1h-3zM254 7h1v1h-1zM257 7h2v1h-2zM249 8h1v1h-1zM251 8h2v1h-2zM254 8h7v1h-7zM249 9h1v1h-1zM253 9h1v1h-1zM257 9h2v1h-2zM249 10h2v1h-2zM253 10h2v1h-2zM257 10h2v1h-2zM249 11h1v1h-1zM251 11h2v1h-2zM255 11h6v1h-6zM265 1h1v1h-1zM270 1h1v1h-1zM272 1h1v1h-1zM266 2h1v1h-1zM270 2h1v1h-1zM272 2h1v1h-1zM266 3h1v1h-1zM270 3h6v1h-6zM269 4h1v1h-1zM272 4h1v1h-1zM264 5h3v1h-3zM269 5h8v1h-8zM266 6h1v1h-1zM271 6h1v1h-1zM273 6h2v1h-2zM266 7h1v1h-1zM271 7h1v1h-1zM273 7h2v1h-2zM276 7h1v1h-1zM266 8h1v1h-1zM270 8h1v1h-1zM273 8h2v1h-2zM276 8h1v1h-1zM266 9h1v1h-1zM269 9h1v1h-1zM275 9h2v1h-2zM265 10h1v1h-1zM267 10h2v1h-2zM264 11h1v1h-1zM269 11h8v1h-8zM282 1h1v1h-1zM285 1h8v1h-8zM282 2h1v1h-1zM287 2h1v1h-1zM291 2h1v1h-1zM280 3h6v1h-6zM288 3h3v1h-3zM282 4h1v1h-1zM287 4h1v1h-1zM291 4h1v1h-1zM282 5h1v1h-1zM285 5h2v1h-2zM292 5h1v1h-1zM282 6h3v1h-3zM288 6h1v1h-1zM281 7h2v1h-2zM286 7h6v1h-6zM280 8h1v1h-1zM282 8h1v1h-1zM288 8h1v1h-1zM282 9h1v1h-1zM285 9h8v1h-8zM282 10h1v1h-1zM288 10h1v1h-1zM280 11h3v1h-3zM288 11h1v1h-1zM296 1h13v1h-13zM301 2h1v1h-1zM303 2h1v1h-1zM297 3h11v1h-11zM297 4h1v1h-1zM301 4h1v1h-1zM303 4h1v1h-1zM307 4h1v1h-1zM297 5h11v1h-11zM301 6h1v1h-1zM296 7h13v1h-13zM299 8h2v1h-2zM304 8h1v1h-1zM298 9h4v1h-4zM303 9h1v1h-1zM301 10h4v1h-4zM297 11h4v1h-4zM305 11h3v1h-3zM312 1h5v1h-5zM323 1h2v1h-2zM315 2h2v1h-2zM318 2h5v1h-5zM314 3h1v1h-1zM321 3h2v1h-2zM313 4h1v1h-1zM321 4h2v1h-2zM312 5h5v1h-5zM318 5h1v1h-1zM321 5h4v1h-4zM315 6h2v1h-2zM318 6h1v1h-1zM321 6h2v1h-2zM312 7h1v1h-1zM315 7h2v1h-2zM318 7h1v1h-1zM321 7h2v1h-2zM313 8h1v1h-1zM315 8h2v1h-2zM318 8h1v1h-1zM321 8h2v1h-2zM314 9h1v1h-1zM318 9h7v1h-7zM313 10h1v1h-1zM315 10h2v1h-2zM312 11h1v1h-1zM317 11h8v1h-8zM331 1h2v1h-2zM336 1h1v1h-1zM331 2h2v1h-2zM336 2h1v1h-1zM330 3h1v1h-1zM333 3h8v1h-8zM330 4h1v1h-1zM333 4h1v1h-1zM336 4h1v1h-1zM340 4h1v1h-1zM329 5h2v1h-2zM333 5h8v1h-8zM328 6h1v1h-1zM330 6h1v1h-1zM333 6h1v1h-1zM336 6h1v1h-1zM340 6h1v1h-1zM330 7h1v1h-1zM333 7h1v1h-1zM336 7h1v1h-1zM340 7h1v1h-1zM330 8h1v1h-1zM333 8h8v1h-8zM330 9h1v1h-1zM333 9h1v1h-1zM336 9h1v1h-1zM340 9h1v1h-1zM330 10h1v1h-1zM336 10h1v1h-1zM330 11h1v1h-1zM336 11h1v1h-1zM347 1h2v1h-2zM352 1h1v1h-1zM346 2h1v1h-1zM352 2h1v1h-1zM345 3h5v1h-5zM351 3h6v1h-6zM345 4h1v1h-1zM349 4h2v1h-2zM356 4h1v1h-1zM345 5h1v1h-1zM349 5h1v1h-1zM356 5h1v1h-1zM345 6h5v1h-5zM351 6h1v1h-1zM356 6h1v1h-1zM345 7h1v1h-1zM349 7h1v1h-1zM352 7h1v1h-1zM356 7h1v1h-1zM345 8h1v1h-1zM349 8h1v1h-1zM352 8h1v1h-1zM356 8h1v1h-1zM345 9h1v1h-1zM349 9h1v1h-1zM356 9h1v1h-1zM345 10h5v1h-5zM356 10h1v1h-1zM345 11h1v1h-1zM349 11h1v1h-1zM353 11h3v1h-3zM369 1h2v1h-2zM360 2h5v1h-5zM369 2h2v1h-2zM363 3h10v1h-10zM360 4h1v1h-1zM363 4h2v1h-2zM369 4h2v1h-2zM361 5h1v1h-1zM363 5h2v1h-2zM369 5h2v1h-2zM362 6h1v1h-1zM366 6h1v1h-1zM369 6h2v1h-2zM362 7h1v1h-1zM367 7h1v1h-1zM369 7h2v1h-2zM361 8h1v1h-1zM363 8h2v1h-2zM369 8h2v1h-2zM361 9h1v1h-1zM363 9h2v1h-2zM369 9h2v1h-2zM360 10h1v1h-1zM367 10h1v1h-1zM369 10h2v1h-2zM368 11h1v1h-1zM379 1h6v1h-6zM378 2h1v1h-1zM383 2h1v1h-1zM377 3h11v1h-11zM376 4h1v1h-1zM378 4h1v1h-1zM382 4h1v1h-1zM387 4h1v1h-1zM378 5h10v1h-10zM379 6h2v1h-2zM382 6h1v1h-1zM387 6h1v1h-1zM377 7h2v1h-2zM381 7h3v1h-3zM385 7h2v1h-2zM379 8h2v1h-2zM383 8h2v1h-2zM377 9h2v1h-2zM382 9h2v1h-2zM385 9h2v1h-2zM379 10h3v1h-3zM383 10h1v1h-1zM387 10h2v1h-2zM376 11h3v1h-3zM382 11h2v1h-2zM395 7h3v1h-3zM395 8h3v1h-3zM397 9h1v1h-1zM395 10h2v1h-2zM415 1h1v1h-1zM417 1h2v1h-2zM415 2h1v1h-1zM419 2h1v1h-1zM408 3h13v1h-13zM415 4h1v1h-1zM409 5h5v1h-5zM415 5h1v1h-1zM419 5h1v1h-1zM409 6h1v1h-1zM413 6h1v1h-1zM415 6h1v1h-1zM419 6h1v1h-1zM409 7h5v1h-5zM416 7h1v1h-1zM419 7h1v1h-1zM416 8h3v1h-3zM411 9h4v1h-4zM417 9h2v1h-2zM420 9h1v1h-1zM408 10h3v1h-3zM416 10h1v1h-1zM419 10h2v1h-2zM414 11h2v1h-2zM420 11h1v1h-1zM442 1h1v1h-1zM447 1h5v1h-5zM442 2h1v1h-1zM447 2h1v1h-1zM451 2h1v1h-1zM440 3h6v1h-6zM447 3h1v1h-1zM451 3h1v1h-1zM442 4h1v1h-1zM446 4h1v1h-1zM451 4h2v1h-2zM442 5h1v1h-1zM445 5h1v1h-1zM442 6h3v1h-3zM446 6h6v1h-6zM441 7h2v1h-2zM446 7h1v1h-1zM451 7h1v1h-1zM440 8h1v1h-1zM442 8h1v1h-1zM447 8h1v1h-1zM449 8h2v1h-2zM442 9h1v1h-1zM448 9h1v1h-1zM442 10h1v1h-1zM447 10h1v1h-1zM449 10h2v1h-2zM440 11h3v1h-3zM445 11h2v1h-2zM451 11h2v1h-2zM457 1h6v1h-6zM468 1h1v1h-1zM457 2h1v1h-1zM462 2h1v1h-1zM467 2h1v1h-1zM457 3h6v1h-6zM465 3h2v1h-2zM457 4h1v1h-1zM462 4h1v1h-1zM464 4h1v1h-1zM468 4h1v1h-1zM457 5h6v1h-6zM467 5h1v1h-1zM459 6h2v1h-2zM465 6h2v1h-2zM456 7h9v1h-9zM457 8h1v1h-1zM462 8h1v1h-1zM468 8h1v1h-1zM457 9h6v1h-6zM467 9h1v1h-1zM457 10h1v1h-1zM459 10h2v1h-2zM462 10h1v1h-1zM465 10h2v1h-2zM456 11h1v1h-1zM458 11h3v1h-3zM463 11h2v1h-2zM505 1h1v1h-1zM512 1h1v1h-1zM506 2h1v1h-1zM512 2h1v1h-1zM506 3h1v1h-1zM509 3h8v1h-8zM512 4h1v1h-1zM516 4h1v1h-1zM504 5h3v1h-3zM512 5h1v1h-1zM516 5h1v1h-1zM506 6h1v1h-1zM512 6h1v1h-1zM516 6h1v1h-1zM506 7h1v1h-1zM511 7h1v1h-1zM516 7h1v1h-1zM506 8h1v1h-1zM510 8h1v1h-1zM516 8h1v1h-1zM506 9h1v1h-1zM509 9h1v1h-1zM513 9h3v1h-3zM505 10h1v1h-1zM507 10h2v1h-2zM504 11h1v1h-1zM509 11h8v1h-8zM554 1h1v1h-1zM560 1h1v1h-1zM555 2h2v1h-2zM560 2h1v1h-1zM552 3h7v1h-7zM560 3h5v1h-5zM554 4h1v1h-1zM559 4h1v1h-1zM563 4h1v1h-1zM554 5h1v1h-1zM558 5h1v1h-1zM560 5h1v1h-1zM563 5h1v1h-1zM554 6h4v1h-4zM560 6h1v1h-1zM563 6h1v1h-1zM554 7h1v1h-1zM557 7h1v1h-1zM560 7h1v1h-1zM563 7h1v1h-1zM554 8h1v1h-1zM557 8h1v1h-1zM561 8h2v1h-2zM553 9h1v1h-1zM557 9h1v1h-1zM560 9h3v1h-3zM553 10h1v1h-1zM557 10h1v1h-1zM559 10h1v1h-1zM563 10h1v1h-1zM552 11h1v1h-1zM555 11h2v1h-2zM558 11h1v1h-1zM564 11h1v1h-1zM574 1h1v1h-1zM568 2h13v1h-13zM573 3h1v1h-1zM571 4h2v1h-2zM577 4h2v1h-2zM570 5h10v1h-10zM571 6h2v1h-2zM576 6h1v1h-1zM568 7h13v1h-13zM571 8h2v1h-2zM576 8h1v1h-1zM571 9h2v1h-2zM576 9h1v1h-1zM570 10h1v1h-1zM576 10h1v1h-1zM569 11h1v1h-1zM576 11h1v1h-1z"/><text x="192" y="11" font-family="Liberation Mono" font-size="12.00" font-weight="normal" fill="#000" textLength="56" lengthAdjust="spacingAndGlyphs">&#160;Shift&#160;</text><text x="424" y="11" font-family="Liberation Mono" font-size="12.00" font-weight="normal" fill="#000" textLength="16" lengthAdjust="spacingAndGlyphs">&#160;[</text><text x="472" y="11" font-family="Liberation Mono" font-size="12.00" font-weight="normal" fill="#000" textLength="32" lengthAdjust="spacingAndGlyphs">(P)/</text><text x="520" y="11" font-family="Liberation Mono" font-size="12.00" font-weight="normal" fill="#000" textLength="32" lengthAdjust="spacingAndGlyphs">(E)/</text><text x="584" y="11" font-family="Liberation Mono" font-size="12.00" font-weight="normal" fill="#000" textLength="40" lengthAdjust="spacingAndGlyphs">(U)]:</text></svg><svg class="t" style="left:19px;top:622px;" width="628" height="16"><path fill="#000" d="M1 1h1v1h-1zM6 1h1v1h-1zM8 1h1v1h-1zM2 2h1v1h-1zM6 2h1v1h-1zM8 2h1v1h-1zM2 3h1v1h-1zM6 3h6v1h-6zM5 4h1v1h-1zM8 4h1v1h-1zM0 5h3v1h-3zM5 5h8v1h-8zM2 6h1v1h-1zM7 6h1v1h-1zM9 6h2v1h-2zM2 7h1v1h-1zM7 7h1v1h-1zM9 7h2v1h-2zM12 7h1v1h-1zM2 8h1v1h-1zM6 8h1v1h-1zM9 8h2v1h-2zM12 8h1v1h-1zM2 9h1v1h-1zM5 9h1v1h-1zM11 9h2v1h-2zM1 10h1v1h-1zM3 10h2v1h-2zM0 11h1v1h-1zM5 11h8v1h-8zM18 1h1v1h-1zM21 1h8v1h-8zM18 2h1v1h-1zM23 2h1v1h-1zM27 2h1v1h-1zM16 3h6v1h-6zM24 3h3v1h-3zM18 4h1v1h-1zM23 4h1v1h-1zM27 4h1v1h-1zM18 5h1v1h-1zM21 5h2v1h-2zM28 5h1v1h-1zM18 6h3v1h-3zM24 6h1v1h-1zM17 7h2v1h-2zM22 7h6v1h-6zM16 8h1v1h-1zM18 8h1v1h-1zM24 8h1v1h-1zM18 9h1v1h-1zM21 9h8v1h-8zM18 10h1v1h-1zM24 10h1v1h-1zM16 11h3v1h-3zM24 11h1v1h-1zM32 1h13v1h-13zM37 2h1v1h-1zM39 2h1v1h-1zM33 3h11v1h-11zM33 4h1v1h-1zM37 4h1v1h-1zM39 4h1v1h-1zM43 4h1v1h-1zM33 5h11v1h-11zM37 6h1v1h-1zM32 7h13v1h-13zM35 8h2v1h-2zM40 8h1v1h-1zM34 9h4v1h-4zM39 9h1v1h-1zM37 10h4v1h-4zM33 11h4v1h-4zM41 11h3v1h-3zM51 1h2v1h-2zM55 1h1v1h-1zM51 2h2v1h-2zM55 2h6v1h-6zM50 3h1v1h-1zM53 3h2v1h-2zM56 3h1v1h-1zM59 3h1v1h-1zM50 4h1v1h-1zM53 4h1v1h-1zM57 4h2v1h-2zM49 5h2v1h-2zM53 5h1v1h-1zM55 5h2v1h-2zM59 5h1v1h-1zM48 6h1v1h-1zM50 6h1v1h-1zM53 6h2v1h-2zM57 6h2v1h-2zM60 6h1v1h-1zM50 7h1v1h-1zM53 7h1v1h-1zM56 7h1v1h-1zM59 7h1v1h-1zM50 8h1v1h-1zM53 8h1v1h-1zM55 8h1v1h-1zM57 8h2v1h-2zM50 9h1v1h-1zM53 9h1v1h-1zM56 9h1v1h-1zM60 9h1v1h-1zM50 10h1v1h-1zM57 10h3v1h-3zM50 11h1v1h-1zM54 11h3v1h-3zM67 1h2v1h-2zM72 1h1v1h-1zM64 2h13v1h-13zM65 3h1v1h-1zM69 3h1v1h-1zM75 3h1v1h-1zM65 4h5v1h-5zM71 4h1v1h-1zM75 4h1v1h-1zM65 5h1v1h-1zM69 5h1v1h-1zM71 5h1v1h-1zM75 5h1v1h-1zM65 6h5v1h-5zM71 6h1v1h-1zM75 6h1v1h-1zM65 7h1v1h-1zM69 7h1v1h-1zM73 7h3v1h-3zM65 9h11v1h-11zM69 10h1v1h-1zM75 10h1v1h-1zM65 11h4v1h-4zM72 11h3v1h-3zM83 1h2v1h-2zM88 1h1v1h-1zM82 2h1v1h-1zM88 2h1v1h-1zM81 3h5v1h-5zM87 3h6v1h-6zM81 4h1v1h-1zM85 4h2v1h-2zM92 4h1v1h-1zM81 5h1v1h-1zM85 5h1v1h-1zM92 5h1v1h-1zM81 6h5v1h-5zM87 6h1v1h-1zM92 6h1v1h-1zM81 7h1v1h-1zM85 7h1v1h-1zM88 7h1v1h-1zM92 7h1v1h-1zM81 8h1v1h-1zM85 8h1v1h-1zM88 8h1v1h-1zM92 8h1v1h-1zM81 9h1v1h-1zM85 9h1v1h-1zM92 9h1v1h-1zM81 10h5v1h-5zM92 10h1v1h-1zM81 11h1v1h-1zM85 11h1v1h-1zM89 11h3v1h-3zM105 1h2v1h-2zM96 2h5v1h-5zM105 2h2v1h-2zM99 3h10v1h-10zM96 4h1v1h-1zM99 4h2v1h-2zM105 4h2v1h-2zM97 5h1v1h-1zM99 5h2v1h-2zM105 5h2v1h-2zM98 6h1v1h-1zM102 6h1v1h-1zM105 6h2v1h-2zM98 7h1v1h-1zM103 7h1v1h-1zM105 7h2v1h-2zM97 8h1v1h-1zM99 8h2v1h-2zM105 8h2v1h-2zM97 9h1v1h-1zM99 9h2v1h-2zM105 9h2v1h-2zM96 10h1v1h-1zM103 10h1v1h-1zM105 10h2v1h-2zM104 11h1v1h-1zM115 1h6v1h-6zM114 2h1v1h-1zM119 2h1v1h-1zM113 3h11v1h-11zM112 4h1v1h-1zM114 4h1v1h-1zM118 4h1v1h-1zM123 4h1v1h-1zM114 5h10v1h-10zM115 6h2v1h-2zM118 6h1v1h-1zM123 6h1v1h-1zM113 7h2v1h-2zM117 7h3v1h-3zM121 7h2v1h-2zM115 8h2v1h-2zM119 8h2v1h-2zM113 9h2v1h-2zM118 9h2v1h-2zM121 9h2v1h-2zM115 10h3v1h-3zM119 10h1v1h-1zM123 10h2v1h-2zM112 11h3v1h-3zM118 11h2v1h-2zM131 7h3v1h-3zM131 8h3v1h-3zM133 9h1v1h-1zM131 10h2v1h-2zM151 1h1v1h-1zM153 1h2v1h-2zM151 2h1v1h-1zM155 2h1v1h-1zM144 3h13v1h-13zM151 4h1v1h-1zM145 5h5v1h-5zM151 5h1v1h-1zM155 5h1v1h-1zM145 6h1v1h-1zM149 6h1v1h-1zM151 6h1v1h-1zM155 6h1v1h-1zM145 7h5v1h-5zM152 7h1v1h-1zM155 7h1v1h-1zM152 8h3v1h-3zM147 9h4v1h-4zM153 9h2v1h-2zM156 9h1v1h-1zM144 10h3v1h-3zM152 10h1v1h-1zM155 10h2v1h-2zM150 11h2v1h-2zM156 11h1v1h-1zM162 1h1v1h-1zM168 1h1v1h-1zM162 2h1v1h-1zM169 2h2v1h-2zM160 3h13v1h-13zM162 4h1v1h-1zM166 4h1v1h-1zM168 4h1v1h-1zM172 4h1v1h-1zM162 5h1v1h-1zM165 5h1v1h-1zM168 5h1v1h-1zM162 6h3v1h-3zM166 6h7v1h-7zM161 7h2v1h-2zM167 7h1v1h-1zM171 7h1v1h-1zM160 8h1v1h-1zM162 8h1v1h-1zM166 8h2v1h-2zM171 8h1v1h-1zM162 9h1v1h-1zM168 9h3v1h-3zM162 10h1v1h-1zM167 10h1v1h-1zM169 10h2v1h-2zM160 11h3v1h-3zM165 11h2v1h-2zM171 11h2v1h-2zM179 1h2v1h-2zM183 1h1v1h-1zM179 2h2v1h-2zM184 2h1v1h-1zM178 3h1v1h-1zM181 3h8v1h-8zM178 4h1v1h-1zM184 4h1v1h-1zM177 5h2v1h-2zM184 5h1v1h-1zM176 6h1v1h-1zM178 6h1v1h-1zM184 6h1v1h-1zM178 7h1v1h-1zM182 7h6v1h-6zM178 8h1v1h-1zM184 8h1v1h-1zM178 9h1v1h-1zM184 9h1v1h-1zM178 10h1v1h-1zM184 10h1v1h-1zM178 11h1v1h-1zM181 11h8v1h-8zM249 1h1v1h-1zM251 1h4v1h-4zM257 1h2v1h-2zM249 2h1v1h-1zM254 2h7v1h-7zM249 3h2v1h-2zM253 3h1v1h-1zM257 3h2v1h-2zM260 3h1v1h-1zM248 4h1v1h-1zM253 4h1v1h-1zM255 4h6v1h-6zM248 5h7v1h-7zM257 5h2v1h-2zM260 5h1v1h-1zM249 6h1v1h-1zM254 6h7v1h-7zM248 7h3v1h-3zM254 7h1v1h-1zM257 7h2v1h-2zM249 8h1v1h-1zM251 8h2v1h-2zM254 8h7v1h-7zM249 9h1v1h-1zM253 9h1v1h-1zM257 9h2v1h-2zM249 10h2v1h-2zM253 10h2v1h-2zM257 10h2v1h-2zM249 11h1v1h-1zM251 11h2v1h-2zM255 11h6v1h-6zM265 1h1v1h-1zM270 1h1v1h-1zM272 1h1v1h-1zM266 2h1v1h-1zM270 2h1v1h-1zM272 2h1v1h-1zM266 3h1v1h-1zM270 3h6v1h-6zM269 4h1v1h-1zM272 4h1v1h-1zM264 5h3v1h-3zM269 5h8v1h-8zM266 6h1v1h-1zM271 6h1v1h-1zM273 6h2v1h-2zM266 7h1v1h-1zM271 7h1v1h-1zM273 7h2v1h-2zM276 7h1v1h-1zM266 8h1v1h-1zM270 8h1v1h-1zM273 8h2v1h-2zM276 8h1v1h-1zM266 9h1v1h-1zM269 9h1v1h-1zM275 9h2v1h-2zM265 10h1v1h-1zM267 10h2v1h-2zM264 11h1v1h-1zM269 11h8v1h-8zM282 1h1v1h-1zM285 1h8v1h-8zM282 2h1v1h-1zM287 2h1v1h-1zM291 2h1v1h-1zM280 3h6v1h-6zM288 3h3v1h-3zM282 4h1v1h-1zM287 4h1v1h-1zM291 4h1v1h-1zM282 5h1v1h-1zM285 5h2v1h-2zM292 5h1v1h-1zM282 6h3v1h-3zM288 6h1v1h-1zM281 7h2v1h-2zM286 7h6v1h-6zM280 8h1v1h-1zM282 8h1v1h-1zM288 8h1v1h-1zM282 9h1v1h-1zM285 9h8v1h-8zM282 10h1v1h-1zM288 10h1v1h-1zM280 11h3v1h-3zM288 11h1v1h-1zM296 1h13v1h-13zM301 2h1v1h-1zM303 2h1v1h-1zM297 3h11v1h-11zM297 4h1v1h-1zM301 4h1v1h-1zM303 4h1v1h-1zM307 4h1v1h-1zM297 5h11v1h-11zM301 6h1v1h-1zM296 7h13v1h-13zM299 8h2v1h-2zM304 8h1v1h-1zM298 9h4v1h-4zM303 9h1v1h-1zM301 10h4v1h-4zM297 11h4v1h-4zM305 11h3v1h-3zM312 1h5v1h-5zM323 1h2v1h-2zM315 2h2v1h-2zM318 2h5v1h-5zM314 3h1v1h-1zM321 3h2v1h-2zM313 4h1v1h-1zM321 4h2v1h-2zM312 5h5v1h-5zM318 5h1v1h-1zM321 5h4v1h-4zM315 6h2v1h-2zM318 6h1v1h-1zM321 6h2v1h-2zM312 7h1v1h-1zM315 7h2v1h-2zM318 7h1v1h-1zM321 7h2v1h-2zM313 8h1v1h-1zM315 8h2v1h-2zM318 8h1v1h-1zM321 8h2v1h-2zM314 9h1v1h-1zM318 9h7v1h-7zM313 10h1v1h-1zM315 10h2v1h-2zM312 11h1v1h-1zM317 11h8v1h-8zM331 1h2v1h-2zM336 1h1v1h-1zM331 2h2v1h-2zM336 2h1v1h-1zM330 3h1v1h-1zM333 3h8v1h-8zM330 4h1v1h-1zM333 4h1v1h-1zM336 4h1v1h-1zM340 4h1v1h-1zM329 5h2v1h-2zM333 5h8v1h-8zM328 6h1v1h-1zM330 6h1v1h-1zM333 6h1v1h-1zM336 6h1v1h-1zM340 6h1v1h-1zM330 7h1v1h-1zM333 7h1v1h-1zM336 7h1v1h-1zM340 7h1v1h-1zM330 8h1v1h-1zM333 8h8v1h-8zM330 9h1v1h-1zM333 9h1v1h-1zM336 9h1v1h-1zM340 9h1v1h-1zM330 10h1v1h-1zM336 10h1v1h-1zM330 11h1v1h-1zM336 11h1v1h-1zM347 1h2v1h-2zM352 1h1v1h-1zM346 2h1v1h-1zM352 2h1v1h-1zM345 3h5v1h-5zM351 3h6v1h-6zM345 4h1v1h-1zM349 4h2v1h-2zM356 4h1v1h-1zM345 5h1v1h-1zM349 5h1v1h-1zM356 5h1v1h-1zM345 6h5v1h-5zM351 6h1v1h-1zM356 6h1v1h-1zM345 7h1v1h-1zM349 7h1v1h-1zM352 7h1v1h-1zM356 7h1v1h-1zM345 8h1v1h-1zM349 8h1v1h-1zM352 8h1v1h-1zM356 8h1v1h-1zM345 9h1v1h-1zM349 9h1v1h-1zM356 9h1v1h-1zM345 10h5v1h-5zM356 10h1v1h-1zM345 11h1v1h-1zM349 11h1v1h-1zM353 11h3v1h-3zM369 1h2v1h-2zM360 2h5v1h-5zM369 2h2v1h-2zM363 3h10v1h-10zM360 4h1v1h-1zM363 4h2v1h-2zM369 4h2v1h-2zM361 5h1v1h-1zM363 5h2v1h-2zM369 5h2v1h-2zM362 6h1v1h-1zM366 6h1v1h-1zM369 6h2v1h-2zM362 7h1v1h-1zM367 7h1v1h-1zM369 7h2v1h-2zM361 8h1v1h-1zM363 8h2v1h-2zM369 8h2v1h-2zM361 9h1v1h-1zM363 9h2v1h-2zM369 9h2v1h-2zM360 10h1v1h-1zM367 10h1v1h-1zM369 10h2v1h-2zM368 11h1v1h-1zM379 1h6v1h-6zM378 2h1v1h-1zM383 2h1v1h-1zM377 3h11v1h-11zM376 4h1v1h-1zM378 4h1v1h-1zM382 4h1v1h-1zM387 4h1v1h-1zM378 5h10v1h-10zM379 6h2v1h-2zM382 6h1v1h-1zM387 6h1v1h-1zM377 7h2v1h-2zM381 7h3v1h-3zM385 7h2v1h-2zM379 8h2v1h-2zM383 8h2v1h-2zM377 9h2v1h-2zM382 9h2v1h-2zM385 9h2v1h-2zM379 10h3v1h-3zM383 10h1v1h-1zM387 10h2v1h-2zM376 11h3v1h-3zM382 11h2v1h-2zM395 7h3v1h-3zM395 8h3v1h-3zM397 9h1v1h-1zM395 10h2v1h-2zM415 1h1v1h-1zM417 1h2v1h-2zM415 2h1v1h-1zM419 2h1v1h-1zM408 3h13v1h-13zM415 4h1v1h-1zM409 5h5v1h-5zM415 5h1v1h-1zM419 5h1v1h-1zM409 6h1v1h-1zM413 6h1v1h-1zM415 6h1v1h-1zM419 6h1v1h-1zM409 7h5v1h-5zM416 7h1v1h-1zM419 7h1v1h-1zM416 8h3v1h-3zM411 9h4v1h-4zM417 9h2v1h-2zM420 9h1v1h-1zM408 10h3v1h-3zM416 10h1v1h-1zM419 10h2v1h-2zM414 11h2v1h-2zM420 11h1v1h-1zM442 1h1v1h-1zM447 1h5v1h-5zM442 2h1v1h-1zM447 2h1v1h-1zM451 2h1v1h-1zM440 3h6v1h-6zM447 3h1v1h-1zM451 3h1v1h-1zM442 4h1v1h-1zM446 4h1v1h-1zM451 4h2v1h-2zM442 5h1v1h-1zM445 5h1v1h-1zM442 6h3v1h-3zM446 6h6v1h-6zM441 7h2v1h-2zM446 7h1v1h-1zM451 7h1v1h-1zM440 8h1v1h-1zM442 8h1v1h-1zM447 8h1v1h-1zM449 8h2v1h-2zM442 9h1v1h-1zM448 9h1v1h-1zM442 10h1v1h-1zM447 10h1v1h-1zM449 10h2v1h-2zM440 11h3v1h-3zM445 11h2v1h-2zM451 11h2v1h-2zM457 1h6v1h-6zM468 1h1v1h-1zM457 2h1v1h-1zM462 2h1v1h-1zM467 2h1v1h-1zM457 3h6v1h-6zM465 3h2v1h-2zM457 4h1v1h-1zM462 4h1v1h-1zM464 4h1v1h-1zM468 4h1v1h-1zM457 5h6v1h-6zM467 5h1v1h-1zM459 6h2v1h-2zM465 6h2v1h-2zM456 7h9v1h-9zM457 8h1v1h-1zM462 8h1v1h-1zM468 8h1v1h-1zM457 9h6v1h-6zM467 9h1v1h-1zM457 10h1v1h-1zM459 10h2v1h-2zM462 10h1v1h-1zM465 10h2v1h-2zM456 11h1v1h-1zM458 11h3v1h-3zM463 11h2v1h-2zM505 1h1v1h-1zM512 1h1v1h-1zM506 2h1v1h-1zM512 2h1v1h-1zM506 3h1v1h-1zM509 3h8v1h-8zM512 4h1v1h-1zM516 4h1v1h-1zM504 5h3v1h-3zM512 5h1v1h-1zM516 5h1v1h-1zM506 6h1v1h-1zM512 6h1v1h-1zM516 6h1v1h-1zM506 7h1v1h-1zM511 7h1v1h-1zM516 7h1v1h-1zM506 8h1v1h-1zM510 8h1v1h-1zM516 8h1v1h-1zM506 9h1v1h-1zM509 9h1v1h-1zM513 9h3v1h-3zM505 10h1v1h-1zM507 10h2v1h-2zM504 11h1v1h-1zM509 11h8v1h-8zM554 1h1v1h-1zM560 1h1v1h-1zM555 2h2v1h-2zM560 2h1v1h-1zM552 3h7v1h-7zM560 3h5v1h-5zM554 4h1v1h-1zM559 4h1v1h-1zM563 4h1v1h-1zM554 5h1v1h-1zM558 5h1v1h-1zM560 5h1v1h-1zM563 5h1v1h-1zM554 6h4v1h-4zM560 6h1v1h-1zM563 6h1v1h-1zM554 7h1v1h-1zM557 7h1v1h-1zM560 7h1v1h-1zM563 7h1v1h-1zM554 8h1v1h-1zM557 8h1v1h-1zM561 8h2v1h-2zM553 9h1v1h-1zM557 9h1v1h-1zM560 9h3v1h-3zM553 10h1v1h-1zM557 10h1v1h-1zM559 10h1v1h-1zM563 10h1v1h-1zM552 11h1v1h-1zM555 11h2v1h-2zM558 11h1v1h-1zM564 11h1v1h-1zM574 1h1v1h-1zM568 2h13v1h-13zM573 3h1v1h-1zM571 4h2v1h-2zM577 4h2v1h-2zM570 5h10v1h-10zM571 6h2v1h-2zM576 6h1v1h-1zM568 7h13v1h-13zM571 8h2v1h-2zM576 8h1v1h-1zM571 9h2v1h-2zM576 9h1v1h-1zM570 10h1v1h-1zM576 10h1v1h-1zM569 11h1v1h-1zM576 11h1v1h-1z"/><text x="192" y="11" font-family="Liberation Mono" font-size="12.00" font-weight="normal" fill="#000" textLength="56" lengthAdjust="spacingAndGlyphs">&#160;Shift&#160;</text><text x="424" y="11" font-family="Liberation Mono" font-size="12.00" font-weight="normal" fill="#000" textLength="16" lengthAdjust="spacingAndGlyphs">&#160;[</text><text x="472" y="11" font-family="Liberation Mono" font-size="12.00" font-weight="normal" fill="#000" textLength="32" lengthAdjust="spacingAndGlyphs">(P)/</text><text x="520" y="11" font-family="Liberation Mono" font-size="12.00" font-weight="normal" fill="#000" textLength="32" lengthAdjust="spacingAndGlyphs">(E)/</text><text x="584" y="11" font-family="Liberation Mono" font-size="12.00" font-weight="normal" fill="#000" textLength="40" lengthAdjust="spacingAndGlyphs">(U)]:</text></svg><svg class="t" style="left:19px;top:635px;" width="628" height="16"><path fill="#000" d="M1 1h1v1h-1zM6 1h1v1h-1zM8 1h1v1h-1zM2 2h1v1h-1zM6 2h1v1h-1zM8 2h1v1h-1zM2 3h1v1h-1zM6 3h6v1h-6zM5 4h1v1h-1zM8 4h1v1h-1zM0 5h3v1h-3zM5 5h8v1h-8zM2 6h1v1h-1zM7 6h1v1h-1zM9 6h2v1h-2zM2 7h1v1h-1zM7 7h1v1h-1zM9 7h2v1h-2zM12 7h1v1h-1zM2 8h1v1h-1zM6 8h1v1h-1zM9 8h2v1h-2zM12 8h1v1h-1zM2 9h1v1h-1zM5 9h1v1h-1zM11 9h2v1h-2zM1 10h1v1h-1zM3 10h2v1h-2zM0 11h1v1h-1zM5 11h8v1h-8zM18 1h1v1h-1zM21 1h8v1h-8zM18 2h1v1h-1zM23 2h1v1h-1zM27 2h1v1h-1zM16 3h6v1h-6zM24 3h3v1h-3zM18 4h1v1h-1zM23 4h1v1h-1zM27 4h1v1h-1zM18 5h1v1h-1zM21 5h2v1h-2zM28 5h1v1h-1zM18 6h3v1h-3zM24 6h1v1h-1zM17 7h2v1h-2zM22 7h6v1h-6zM16 8h1v1h-1zM18 8h1v1h-1zM24 8h1v1h-1zM18 9h1v1h-1zM21 9h8v1h-8zM18 10h1v1h-1zM24 10h1v1h-1zM16 11h3v1h-3zM24 11h1v1h-1zM32 1h13v1h-13zM37 2h1v1h-1zM39 2h1v1h-1zM33 3h11v1h-11zM33 4h1v1h-1zM37 4h1v1h-1zM39 4h1v1h-1zM43 4h1v1h-1zM33 5h11v1h-11zM37 6h1v1h-1zM32 7h13v1h-13zM35 8h2v1h-2zM40 8h1v1h-1zM34 9h4v1h-4zM39 9h1v1h-1zM37 10h4v1h-4zM33 11h4v1h-4zM41 11h3v1h-3zM51 1h2v1h-2zM55 1h1v1h-1zM51 2h2v1h-2zM55 2h6v1h-6zM50 3h1v1h-1zM53 3h2v1h-2zM56 3h1v1h-1zM59 3h1v1h-1zM50 4h1v1h-1zM53 4h1v1h-1zM57 4h2v1h-2zM49 5h2v1h-2zM53 5h1v1h-1zM55 5h2v1h-2zM59 5h1v1h-1zM48 6h1v1h-1zM50 6h1v1h-1zM53 6h2v1h-2zM57 6h2v1h-2zM60 6h1v1h-1zM50 7h1v1h-1zM53 7h1v1h-1zM56 7h1v1h-1zM59 7h1v1h-1zM50 8h1v1h-1zM53 8h1v1h-1zM55 8h1v1h-1zM57 8h2v1h-2zM50 9h1v1h-1zM53 9h1v1h-1zM56 9h1v1h-1zM60 9h1v1h-1zM50 10h1v1h-1zM57 10h3v1h-3zM50 11h1v1h-1zM54 11h3v1h-3zM67 1h2v1h-2zM72 1h1v1h-1zM64 2h13v1h-13zM65 3h1v1h-1zM69 3h1v1h-1zM75 3h1v1h-1zM65 4h5v1h-5zM71 4h1v1h-1zM75 4h1v1h-1zM65 5h1v1h-1zM69 5h1v1h-1zM71 5h1v1h-1zM75 5h1v1h-1zM65 6h5v1h-5zM71 6h1v1h-1zM75 6h1v1h-1zM65 7h1v1h-1zM69 7h1v1h-1zM73 7h3v1h-3zM65 9h11v1h-11zM69 10h1v1h-1zM75 10h1v1h-1zM65 11h4v1h-4zM72 11h3v1h-3zM83 1h2v1h-2zM88 1h1v1h-1zM82 2h1v1h-1zM88 2h1v1h-1zM81 3h5v1h-5zM87 3h6v1h-6zM81 4h1v1h-1zM85 4h2v1h-2zM92 4h1v1h-1zM81 5h1v1h-1zM85 5h1v1h-1zM92 5h1v1h-1zM81 6h5v1h-5zM87 6h1v1h-1zM92 6h1v1h-1zM81 7h1v1h-1zM85 7h1v1h-1zM88 7h1v1h-1zM92 7h1v1h-1zM81 8h1v1h-1zM85 8h1v1h-1zM88 8h1v1h-1zM92 8h1v1h-1zM81 9h1v1h-1zM85 9h1v1h-1zM92 9h1v1h-1zM81 10h5v1h-5zM92 10h1v1h-1zM81 11h1v1h-1zM85 11h1v1h-1zM89 11h3v1h-3zM105 1h2v1h-2zM96 2h5v1h-5zM105 2h2v1h-2zM99 3h10v1h-10zM96 4h1v1h-1zM99 4h2v1h-2zM105 4h2v1h-2zM97 5h1v1h-1zM99 5h2v1h-2zM105 5h2v1h-2zM98 6h1v1h-1zM102 6h1v1h-1zM105 6h2v1h-2zM98 7h1v1h-1zM103 7h1v1h-1zM105 7h2v1h-2zM97 8h1v1h-1zM99 8h2v1h-2zM105 8h2v1h-2zM97 9h1v1h-1zM99 9h2v1h-2zM105 9h2v1h-2zM96 10h1v1h-1zM103 10h1v1h-1zM105 10h2v1h-2zM104 11h1v1h-1zM115 1h6v1h-6zM114 2h1v1h-1zM119 2h1v1h-1zM113 3h11v1h-11zM112 4h1v1h-1zM114 4h1v1h-1zM118 4h1v1h-1zM123 4h1v1h-1zM114 5h10v1h-10zM115 6h2v1h-2zM118 6h1v1h-1zM123 6h1v1h-1zM113 7h2v1h-2zM117 7h3v1h-3zM121 7h2v1h-2zM115 8h2v1h-2zM119 8h2v1h-2zM113 9h2v1h-2zM118 9h2v1h-2zM121 9h2v1h-2zM115 10h3v1h-3zM119 10h1v1h-1zM123 10h2v1h-2zM112 11h3v1h-3zM118 11h2v1h-2zM131 7h3v1h-3zM131 8h3v1h-3zM133 9h1v1h-1zM131 10h2v1h-2zM151 1h1v1h-1zM153 1h2v1h-2zM151 2h1v1h-1zM155 2h1v1h-1zM144 3h13v1h-13zM151 4h1v1h-1zM145 5h5v1h-5zM151 5h1v1h-1zM155 5h1v1h-1zM145 6h1v1h-1zM149 6h1v1h-1zM151 6h1v1h-1zM155 6h1v1h-1zM145 7h5v1h-5zM152 7h1v1h-1zM155 7h1v1h-1zM152 8h3v1h-3zM147 9h4v1h-4zM153 9h2v1h-2zM156 9h1v1h-1zM144 10h3v1h-3zM152 10h1v1h-1zM155 10h2v1h-2zM150 11h2v1h-2zM156 11h1v1h-1zM162 1h1v1h-1zM168 1h1v1h-1zM162 2h1v1h-1zM169 2h2v1h-2zM160 3h13v1h-13zM162 4h1v1h-1zM166 4h1v1h-1zM168 4h1v1h-1zM172 4h1v1h-1zM162 5h1v1h-1zM165 5h1v1h-1zM168 5h1v1h-1zM162 6h3v1h-3zM166 6h7v1h-7zM161 7h2v1h-2zM167 7h1v1h-1zM171 7h1v1h-1zM160 8h1v1h-1zM162 8h1v1h-1zM166 8h2v1h-2zM171 8h1v1h-1zM162 9h1v1h-1zM168 9h3v1h-3zM162 10h1v1h-1zM167 10h1v1h-1zM169 10h2v1h-2zM160 11h3v1h-3zM165 11h2v1h-2zM171 11h2v1h-2zM179 1h2v1h-2zM183 1h1v1h-1zM179 2h2v1h-2zM184 2h1v1h-1zM178 3h1v1h-1zM181 3h8v1h-8zM178 4h1v1h-1zM184 4h1v1h-1zM177 5h2v1h-2zM184 5h1v1h-1zM176 6h1v1h-1zM178 6h1v1h-1zM184 6h1v1h-1zM178 7h1v1h-1zM182 7h6v1h-6zM178 8h1v1h-1zM184 8h1v1h-1zM178 9h1v1h-1zM184 9h1v1h-1zM178 10h1v1h-1zM184 10h1v1h-1zM178 11h1v1h-1zM181 11h8v1h-8zM249 1h1v1h-1zM251 1h4v1h-4zM257 1h2v1h-2zM249 2h1v1h-1zM254 2h7v1h-7zM249 3h2v1h-2zM253 3h1v1h-1zM257 3h2v1h-2zM260 3h1v1h-1zM248 4h1v1h-1zM253 4h1v1h-1zM255 4h6v1h-6zM248 5h7v1h-7zM257 5h2v1h-2zM260 5h1v1h-1zM249 6h1v1h-1zM254 6h7v1h-7zM248 7h3v1h-3zM254 7h1v1h-1zM257 7h2v1h-2zM249 8h1v1h-1zM251 8h2v1h-2zM254 8h7v1h-7zM249 9h1v1h-1zM253 9h1v1h-1zM257 9h2v1h-2zM249 10h2v1h-2zM253 10h2v1h-2zM257 10h2v1h-2zM249 11h1v1h-1zM251 11h2v1h-2zM255 11h6v1h-6zM265 1h1v1h-1zM270 1h1v1h-1zM272 1h1v1h-1zM266 2h1v1h-1zM270 2h1v1h-1zM272 2h1v1h-1zM266 3h1v1h-1zM270 3h6v1h-6zM269 4h1v1h-1zM272 4h1v1h-1zM264 5h3v1h-3zM269 5h8v1h-8zM266 6h1v1h-1zM271 6h1v1h-1zM273 6h2v1h-2zM266 7h1v1h-1zM271 7h1v1h-1zM273 7h2v1h-2zM276 7h1v1h-1zM266 8h1v1h-1zM270 8h1v1h-1zM273 8h2v1h-2zM276 8h1v1h-1zM266 9h1v1h-1zM269 9h1v1h-1zM275 9h2v1h-2zM265 10h1v1h-1zM267 10h2v1h-2zM264 11h1v1h-1zM269 11h8v1h-8zM282 1h1v1h-1zM285 1h8v1h-8zM282 2h1v1h-1zM287 2h1v1h-1zM291 2h1v1h-1zM280 3h6v1h-6zM288 3h3v1h-3zM282 4h1v1h-1zM287 4h1v1h-1zM291 4h1v1h-1zM282 5h1v1h-1zM285 5h2v1h-2zM292 5h1v1h-1zM282 6h3v1h-3zM288 6h1v1h-1zM281 7h2v1h-2zM286 7h6v1h-6zM280 8h1v1h-1zM282 8h1v1h-1zM288 8h1v1h-1zM282 9h1v1h-1zM285 9h8v1h-8zM282 10h1v1h-1zM288 10h1v1h-1zM280 11h3v1h-3zM288 11h1v1h-1zM296 1h13v1h-13zM301 2h1v1h-1zM303 2h1v1h-1zM297 3h11v1h-11zM297 4h1v1h-1zM301 4h1v1h-1zM303 4h1v1h-1zM307 4h1v1h-1zM297 5h11v1h-11zM301 6h1v1h-1zM296 7h13v1h-13zM299 8h2v1h-2zM304 8h1v1h-1zM298 9h4v1h-4zM303 9h1v1h-1zM301 10h4v1h-4zM297 11h4v1h-4zM305 11h3v1h-3zM312 1h5v1h-5zM323 1h2v1h-2zM315 2h2v1h-2zM318 2h5v1h-5zM314 3h1v1h-1zM321 3h2v1h-2zM313 4h1v1h-1zM321 4h2v1h-2zM312 5h5v1h-5zM318 5h1v1h-1zM321 5h4v1h-4zM315 6h2v1h-2zM318 6h1v1h-1zM321 6h2v1h-2zM312 7h1v1h-1zM315 7h2v1h-2zM318 7h1v1h-1zM321 7h2v1h-2zM313 8h1v1h-1zM315 8h2v1h-2zM318 8h1v1h-1zM321 8h2v1h-2zM314 9h1v1h-1zM318 9h7v1h-7zM313 10h1v1h-1zM315 10h2v1h-2zM312 11h1v1h-1zM317 11h8v1h-8zM331 1h2v1h-2zM336 1h1v1h-1zM331 2h2v1h-2zM336 2h1v1h-1zM330 3h1v1h-1zM333 3h8v1h-8zM330 4h1v1h-1zM333 4h1v1h-1zM336 4h1v1h-1zM340 4h1v1h-1zM329 5h2v1h-2zM333 5h8v1h-8zM328 6h1v1h-1zM330 6h1v1h-1zM333 6h1v1h-1zM336 6h1v1h-1zM340 6h1v1h-1zM330 7h1v1h-1zM333 7h1v1h-1zM336 7h1v1h-1zM340 7h1v1h-1zM330 8h1v1h-1zM333 8h8v1h-8zM330 9h1v1h-1zM333 9h1v1h-1zM336 9h1v1h-1zM340 9h1v1h-1zM330 10h1v1h-1zM336 10h1v1h-1zM330 11h1v1h-1zM336 11h1v1h-1zM347 1h2v1h-2zM352 1h1v1h-1zM346 2h1v1h-1zM352 2h1v1h-1zM345 3h5v1h-5zM351 3h6v1h-6zM345 4h1v1h-1zM349 4h2v1h-2zM356 4h1v1h-1zM345 5h1v1h-1zM349 5h1v1h-1zM356 5h1v1h-1zM345 6h5v1h-5zM351 6h1v1h-1zM356 6h1v1h-1zM345 7h1v1h-1zM349 7h1v1h-1zM352 7h1v1h-1zM356 7h1v1h-1zM345 8h1v1h-1zM349 8h1v1h-1zM352 8h1v1h-1zM356 8h1v1h-1zM345 9h1v1h-1zM349 9h1v1h-1zM356 9h1v1h-1zM345 10h5v1h-5zM356 10h1v1h-1zM345 11h1v1h-1zM349 11h1v1h-1zM353 11h3v1h-3zM369 1h2v1h-2zM360 2h5v1h-5zM369 2h2v1h-2zM363 3h10v1h-10zM360 4h1v1h-1zM363 4h2v1h-2zM369 4h2v1h-2zM361 5h1v1h-1zM363 5h2v1h-2zM369 5h2v1h-2zM362 6h1v1h-1zM366 6h1v1h-1zM369 6h2v1h-2zM362 7h1v1h-1zM367 7h1v1h-1zM369 7h2v1h-2zM361 8h1v1h-1zM363 8h2v1h-2zM369 8h2v1h-2zM361 9h1v1h-1zM363 9h2v1h-2zM369 9h2v1h-2zM360 10h1v1h-1zM367 10h1v1h-1zM369 10h2v1h-2zM368 11h1v1h-1zM379 1h6v1h-6zM378 2h1v1h-1zM383 2h1v1h-1zM377 3h11v1h-11zM376 4h1v1h-1zM378 4h1v1h-1zM382 4h1v1h-1zM387 4h1v1h-1zM378 5h10v1h-10zM379 6h2v1h-2zM382 6h1v1h-1zM387 6h1v1h-1zM377 7h2v1h-2zM381 7h3v1h-3zM385 7h2v1h-2zM379 8h2v1h-2zM383 8h2v1h-2zM377 9h2v1h-2zM382 9h2v1h-2zM385 9h2v1h-2zM379 10h3v1h-3zM383 10h1v1h-1zM387 10h2v1h-2zM376 11h3v1h-3zM382 11h2v1h-2zM395 7h3v1h-3zM395 8h3v1h-3zM397 9h1v1h-1zM395 10h2v1h-2zM415 1h1v1h-1zM417 1h2v1h-2zM415 2h1v1h-1zM419 2h1v1h-1zM408 3h13v1h-13zM415 4h1v1h-1zM409 5h5v1h-5zM415 5h1v1h-1zM419 5h1v1h-1zM409 6h1v1h-1zM413 6h1v1h-1zM415 6h1v1h-1zM419 6h1v1h-1zM409 7h5v1h-5zM416 7h1v1h-1zM419 7h1v1h-1zM416 8h3v1h-3zM411 9h4v1h-4zM417 9h2v1h-2zM420 9h1v1h-1zM408 10h3v1h-3zM416 10h1v1h-1zM419 10h2v1h-2zM414 11h2v1h-2zM420 11h1v1h-1zM442 1h1v1h-1zM447 1h5v1h-5zM442 2h1v1h-1zM447 2h1v1h-1zM451 2h1v1h-1zM440 3h6v1h-6zM447 3h1v1h-1zM451 3h1v1h-1zM442 4h1v1h-1zM446 4h1v1h-1zM451 4h2v1h-2zM442 5h1v1h-1zM445 5h1v1h-1zM442 6h3v1h-3zM446 6h6v1h-6zM441 7h2v1h-2zM446 7h1v1h-1zM451 7h1v1h-1zM440 8h1v1h-1zM442 8h1v1h-1zM447 8h1v1h-1zM449 8h2v1h-2zM442 9h1v1h-1zM448 9h1v1h-1zM442 10h1v1h-1zM447 10h1v1h-1zM449 10h2v1h-2zM440 11h3v1h-3zM445 11h2v1h-2zM451 11h2v1h-2zM457 1h6v1h-6zM468 1h1v1h-1zM457 2h1v1h-1zM462 2h1v1h-1zM467 2h1v1h-1zM457 3h6v1h-6zM465 3h2v1h-2zM457 4h1v1h-1zM462 4h1v1h-1zM464 4h1v1h-1zM468 4h1v1h-1zM457 5h6v1h-6zM467 5h1v1h-1zM459 6h2v1h-2zM465 6h2v1h-2zM456 7h9v1h-9zM457 8h1v1h-1zM462 8h1v1h-1zM468 8h1v1h-1zM457 9h6v1h-6zM467 9h1v1h-1zM457 10h1v1h-1zM459 10h2v1h-2zM462 10h1v1h-1zM465 10h2v1h-2zM456 11h1v1h-1zM458 11h3v1h-3zM463 11h2v1h-2zM505 1h1v1h-1zM512 1h1v1h-1zM506 2h1v1h-1zM512 2h1v1h-1zM506 3h1v1h-1zM509 3h8v1h-8zM512 4h1v1h-1zM516 4h1v1h-1zM504 5h3v1h-3zM512 5h1v1h-1zM516 5h1v1h-1zM506 6h1v1h-1zM512 6h1v1h-1zM516 6h1v1h-1zM506 7h1v1h-1zM511 7h1v1h-1zM516 7h1v1h-1zM506 8h1v1h-1zM510 8h1v1h-1zM516 8h1v1h-1zM506 9h1v1h-1zM509 9h1v1h-1zM513 9h3v1h-3zM505 10h1v1h-1zM507 10h2v1h-2zM504 11h1v1h-1zM509 11h8v1h-8zM554 1h1v1h-1zM560 1h1v1h-1zM555 2h2v1h-2zM560 2h1v1h-1zM552 3h7v1h-7zM560 3h5v1h-5zM554 4h1v1h-1zM559 4h1v1h-1zM563 4h1v1h-1zM554 5h1v1h-1zM558 5h1v1h-1zM560 5h1v1h-1zM563 5h1v1h-1zM554 6h4v1h-4zM560 6h1v1h-1zM563 6h1v1h-1zM554 7h1v1h-1zM557 7h1v1h-1zM560 7h1v1h-1zM563 7h1v1h-1zM554 8h1v1h-1zM557 8h1v1h-1zM561 8h2v1h-2zM553 9h1v1h-1zM557 9h1v1h-1zM560 9h3v1h-3zM553 10h1v1h-1zM557 10h1v1h-1zM559 10h1v1h-1zM563 10h1v1h-1zM552 11h1v1h-1zM555 11h2v1h-2zM558 11h1v1h-1zM564 11h1v1h-1zM574 1h1v1h-1zM568 2h13v1h-13zM573 3h1v1h-1zM571 4h2v1h-2zM577 4h2v1h-2zM570 5h10v1h-10zM571 6h2v1h-2zM576 6h1v1h-1zM568 7h13v1h-13zM571 8h2v1h-2zM576 8h1v1h-1zM571 9h2v1h-2zM576 9h1v1h-1zM570 10h1v1h-1zM576 10h1v1h-1zM569 11h1v1h-1zM576 11h1v1h-1z"/><text x="192" y="11" font-family="Liberation Mono" font-size="12.00" font-weight="normal" fill="#000" textLength="56" lengthAdjust="spacingAndGlyphs">&#160;Shift&#160;</text><text x="424" y="11" font-family="Liberation Mono" font-size="12.00" font-weight="normal" fill="#000" textLength="16" lengthAdjust="spacingAndGlyphs">&#160;[</text><text x="472" y="11" font-family="Liberation Mono" font-size="12.00" font-weight="normal" fill="#000" textLength="32" lengthAdjust="spacingAndGlyphs">(P)/</text><text x="520" y="11" font-family="Liberation Mono" font-size="12.00" font-weight="normal" fill="#000" textLength="32" lengthAdjust="spacingAndGlyphs">(E)/</text><text x="584" y="11" font-family="Liberation Mono" font-size="12.00" font-weight="normal" fill="#000" textLength="40" lengthAdjust="spacingAndGlyphs">(U)]:</text></svg><svg class="t" style="left:19px;top:648px;" width="628" height="16"><path fill="#000" d="M1 1h1v1h-1zM6 1h1v1h-1zM8 1h1v1h-1zM2 2h1v1h-1zM6 2h1v1h-1zM8 2h1v1h-1zM2 3h1v1h-1zM6 3h6v1h-6zM5 4h1v1h-1zM8 4h1v1h-1zM0 5h3v1h-3zM5 5h8v1h-8zM2 6h1v1h-1zM7 6h1v1h-1zM9 6h2v1h-2zM2 7h1v1h-1zM7 7h1v1h-1zM9 7h2v1h-2zM12 7h1v1h-1zM2 8h1v1h-1zM6 8h1v1h-1zM9 8h2v1h-2zM12 8h1v1h-1zM2 9h1v1h-1zM5 9h1v1h-1zM11 9h2v1h-2zM1 10h1v1h-1zM3 10h2v1h-2zM0 11h1v1h-1zM5 11h8v1h-8zM18 1h1v1h-1zM21 1h8v1h-8zM18 2h1v1h-1zM23 2h1v1h-1zM27 2h1v1h-1zM16 3h6v1h-6zM24 3h3v1h-3zM18 4h1v1h-1zM23 4h1v1h-1zM27 4h1v1h-1zM18 5h1v1h-1zM21 5h2v1h-2zM28 5h1v1h-1zM18 6h3v1h-3zM24 6h1v1h-1zM17 7h2v1h-2zM22 7h6v1h-6zM16 8h1v1h-1zM18 8h1v1h-1zM24 8h1v1h-1zM18 9h1v1h-1zM21 9h8v1h-8zM18 10h1v1h-1zM24 10h1v1h-1zM16 11h3v1h-3zM24 11h1v1h-1zM32 1h13v1h-13zM37 2h1v1h-1zM39 2h1v1h-1zM33 3h11v1h-11zM33 4h1v1h-1zM37 4h1v1h-1zM39 4h1v1h-1zM43 4h1v1h-1zM33 5h11v1h-11zM37 6h1v1h-1zM32 7h13v1h-13zM35 8h2v1h-2zM40 8h1v1h-1zM34 9h4v1h-4zM39 9h1v1h-1zM37 10h4v1h-4zM33 11h4v1h-4zM41 11h3v1h-3zM51 1h2v1h-2zM55 1h1v1h-1zM51 2h2v1h-2zM55 2h6v1h-6zM50 3h1v1h-1zM53 3h2v1h-2zM56 3h1v1h-1zM59 3h1v1h-1zM50 4h1v1h-1zM53 4h1v1h-1zM57 4h2v1h-2zM49 5h2v1h-2zM53 5h1v1h-1zM55 5h2v1h-2zM59 5h1v1h-1zM48 6h1v1h-1zM50 6h1v1h-1zM53 6h2v1h-2zM57 6h2v1h-2zM60 6h1v1h-1zM50 7h1v1h-1zM53 7h1v1h-1zM56 7h1v1h-1zM59 7h1v1h-1zM50 8h1v1h-1zM53 8h1v1h-1zM55 8h1v1h-1zM57 8h2v1h-2zM50 9h1v1h-1zM53 9h1v1h-1zM56 9h1v1h-1zM60 9h1v1h-1zM50 10h1v1h-1zM57 10h3v1h-3zM50 11h1v1h-1zM54 11h3v1h-3zM67 1h2v1h-2zM72 1h1v1h-1zM64 2h13v1h-13zM65 3h1v1h-1zM69 3h1v1h-1zM75 3h1v1h-1zM65 4h5v1h-5zM71 4h1v1h-1zM75 4h1v1h-1zM65 5h1v1h-1zM69 5h1v1h-1zM71 5h1v1h-1zM75 5h1v1h-1zM65 6h5v1h-5zM71 6h1v1h-1zM75 6h1v1h-1zM65 7h1v1h-1zM69 7h1v1h-1zM73 7h3v1h-3zM65 9h11v1h-11zM69 10h1v1h-1zM75 10h1v1h-1zM65 11h4v1h-4zM72 11h3v1h-3zM83 1h2v1h-2zM88 1h1v1h-1zM82 2h1v1h-1zM88 2h1v1h-1zM81 3h5v1h-5zM87 3h6v1h-6zM81 4h1v1h-1zM85 4h2v1h-2zM92 4h1v1h-1zM81 5h1v1h-1zM85 5h1v1h-1zM92 5h1v1h-1zM81 6h5v1h-5zM87 6h1v1h-1zM92 6h1v1h-1zM81 7h1v1h-1zM85 7h1v1h-1zM88 7h1v1h-1zM92 7h1v1h-1zM81 8h1v1h-1zM85 8h1v1h-1zM88 8h1v1h-1zM92 8h1v1h-1zM81 9h1v1h-1zM85 9h1v1h-1zM92 9h1v1h-1zM81 10h5v1h-5zM92 10h1v1h-1zM81 11h1v1h-1zM85 11h1v1h-1zM89 11h3v1h-3zM105 1h2v1h-2zM96 2h5v1h-5zM105 2h2v1h-2zM99 3h10v1h-10zM96 4h1v1h-1zM99 4h2v1h-2zM105 4h2v1h-2zM97 5h1v1h-1zM99 5h2v1h-2zM105 5h2v1h-2zM98 6h1v1h-1zM102 6h1v1h-1zM105 6h2v1h-2zM98 7h1v1h-1zM103 7h1v1h-1zM105 7h2v1h-2zM97 8h1v1h-1zM99 8h2v1h-2zM105 8h2v1h-2zM97 9h1v1h-1zM99 9h2v1h-2zM105 9h2v1h-2zM96 10h1v1h-1zM103 10h1v1h-1zM105 10h2v1h-2zM104 11h1v1h-1zM115 1h6v1h-6zM114 2h1v1h-1zM119 2h1v1h-1zM113 3h11v1h-11zM112 4h1v1h-1zM114 4h1v1h-1zM118 4h1v1h-1zM123 4h1v1h-1zM114 5h10v1h-10zM115 6h2v1h-2zM118 6h1v1h-1zM123 6h1v1h-1zM113 7h2v1h-2zM117 7h3v1h-3zM121 7h2v1h-2zM115 8h2v1h-2zM119 8h2v1h-2zM113 9h2v1h-2zM118 9h2v1h-2zM121 9h2v1h-2zM115 10h3v1h-3zM119 10h1v1h-1zM123 10h2v1h-2zM112 11h3v1h-3zM118 11h2v1h-2zM131 7h3v1h-3zM131 8h3v1h-3zM133 9h1v1h-1zM131 10h2v1h-2zM151 1h1v1h-1zM153 1h2v1h-2zM151 2h1v1h-1zM155 2h1v1h-1zM144 3h13v1h-13zM151 4h1v1h-1zM145 5h5v1h-5zM151 5h1v1h-1zM155 5h1v1h-1zM145 6h1v1h-1zM149 6h1v1h-1zM151 6h1v1h-1zM155 6h1v1h-1zM145 7h5v1h-5zM152 7h1v1h-1zM155 7h1v1h-1zM152 8h3v1h-3zM147 9h4v1h-4zM153 9h2v1h-2zM156 9h1v1h-1zM144 10h3v1h-3zM152 10h1v1h-1zM155 10h2v1h-2zM150 11h2v1h-2zM156 11h1v1h-1zM162 1h1v1h-1zM168 1h1v1h-1zM162 2h1v1h-1zM169 2h2v1h-2zM160 3h13v1h-13zM162 4h1v1h-1zM166 4h1v1h-1zM168 4h1v1h-1zM172 4h1v1h-1zM162 5h1v1h-1zM165 5h1v1h-1zM168 5h1v1h-1zM162 6h3v1h-3zM166 6h7v1h-7zM161 7h2v1h-2zM167 7h1v1h-1zM171 7h1v1h-1zM160 8h1v1h-1zM162 8h1v1h-1zM166 8h2v1h-2zM171 8h1v1h-1zM162 9h1v1h-1zM168 9h3v1h-3zM162 10h1v1h-1zM167 10h1v1h-1zM169 10h2v1h-2zM160 11h3v1h-3zM165 11h2v1h-2zM171 11h2v1h-2zM179 1h2v1h-2zM183 1h1v1h-1zM179 2h2v1h-2zM184 2h1v1h-1zM178 3h1v1h-1zM181 3h8v1h-8zM178 4h1v1h-1zM184 4h1v1h-1zM177 5h2v1h-2zM184 5h1v1h-1zM176 6h1v1h-1zM178 6h1v1h-1zM184 6h1v1h-1zM178 7h1v1h-1zM182 7h6v1h-6zM178 8h1v1h-1zM184 8h1v1h-1zM178 9h1v1h-1zM184 9h1v1h-1zM178 10h1v1h-1zM184 10h1v1h-1zM178 11h1v1h-1zM181 11h8v1h-8zM249 1h1v1h-1zM251 1h4v1h-4zM257 1h2v1h-2zM249 2h1v1h-1zM254 2h7v1h-7zM249 3h2v1h-2zM253 3h1v1h-1zM257 3h2v1h-2zM260 3h1v1h-1zM248 4h1v1h-1zM253 4h1v1h-1zM255 4h6v1h-6zM248 5h7v1h-7zM257 5h2v1h-2zM260 5h1v1h-1zM249 6h1v1h-1zM254 6h7v1h-7zM248 7h3v1h-3zM254 7h1v1h-1zM257 7h2v1h-2zM249 8h1v1h-1zM251 8h2v1h-2zM254 8h7v1h-7zM249 9h1v1h-1zM253 9h1v1h-1zM257 9h2v1h-2zM249 10h2v1h-2zM253 10h2v1h-2zM257 10h2v1h-2zM249 11h1v1h-1zM251 11h2v1h-2zM255 11h6v1h-6zM265 1h1v1h-1zM270 1h1v1h-1zM272 1h1v1h-1zM266 2h1v1h-1zM270 2h1v1h-1zM272 2h1v1h-1zM266 3h1v1h-1zM270 3h6v1h-6zM269 4h1v1h-1zM272 4h1v1h-1zM264 5h3v1h-3zM269 5h8v1h-8zM266 6h1v1h-1zM271 6h1v1h-1zM273 6h2v1h-2zM266 7h1v1h-1zM271 7h1v1h-1zM273 7h2v1h-2zM276 7h1v1h-1zM266 8h1v1h-1zM270 8h1v1h-1zM273 8h2v1h-2zM276 8h1v1h-1zM266 9h1v1h-1zM269 9h1v1h-1zM275 9h2v1h-2zM265 10h1v1h-1zM267 10h2v1h-2zM264 11h1v1h-1zM269 11h8v1h-8zM282 1h1v1h-1zM285 1h8v1h-8zM282 2h1v1h-1zM287 2h1v1h-1zM291 2h1v1h-1zM280 3h6v1h-6zM288 3h3v1h-3zM282 4h1v1h-1zM287 4h1v1h-1zM291 4h1v1h-1zM282 5h1v1h-1zM285 5h2v1h-2zM292 5h1v1h-1zM282 6h3v1h-3zM288 6h1v1h-1zM281 7h2v1h-2zM286 7h6v1h-6zM280 8h1v1h-1zM282 8h1v1h-1zM288 8h1v1h-1zM282 9h1v1h-1zM285 9h8v1h-8zM282 10h1v1h-1zM288 10h1v1h-1zM280 11h3v1h-3zM288 11h1v1h-1zM296 1h13v1h-13zM301 2h1v1h-1zM303 2h1v1h-1zM297 3h11v1h-11zM297 4h1v1h-1zM301 4h1v1h-1zM303 4h1v1h-1zM307 4h1v1h-1zM297 5h11v1h-11zM301 6h1v1h-1zM296 7h13v1h-13zM299 8h2v1h-2zM304 8h1v1h-1zM298 9h4v1h-4zM303 9h1v1h-1zM301 10h4v1h-4zM297 11h4v1h-4zM305 11h3v1h-3zM312 1h5v1h-5zM323 1h2v1h-2zM315 2h2v1h-2zM318 2h5v1h-5zM314 3h1v1h-1zM321 3h2v1h-2zM313 4h1v1h-1zM321 4h2v1h-2zM312 5h5v1h-5zM318 5h1v1h-1zM321 5h4v1h-4zM315 6h2v1h-2zM318 6h1v1h-1zM321 6h2v1h-2zM312 7h1v1h-1zM315 7h2v1h-2zM318 7h1v1h-1zM321 7h2v1h-2zM313 8h1v1h-1zM315 8h2v1h-2zM318 8h1v1h-1zM321 8h2v1h-2zM314 9h1v1h-1zM318 9h7v1h-7zM313 10h1v1h-1zM315 10h2v1h-2zM312 11h1v1h-1zM317 11h8v1h-8zM331 1h2v1h-2zM336 1h1v1h-1zM331 2h2v1h-2zM336 2h1v1h-1zM330 3h1v1h-1zM333 3h8v1h-8zM330 4h1v1h-1zM333 4h1v1h-1zM336 4h1v1h-1zM340 4h1v1h-1zM329 5h2v1h-2zM333 5h8v1h-8zM328 6h1v1h-1zM330 6h1v1h-1zM333 6h1v1h-1zM336 6h1v1h-1zM340 6h1v1h-1zM330 7h1v1h-1zM333 7h1v1h-1zM336 7h1v1h-1zM340 7h1v1h-1zM330 8h1v1h-1zM333 8h8v1h-8zM330 9h1v1h-1zM333 9h1v1h-1zM336 9h1v1h-1zM340 9h1v1h-1zM330 10h1v1h-1zM336 10h1v1h-1zM330 11h1v1h-1zM336 11h1v1h-1zM347 1h2v1h-2zM352 1h1v1h-1zM346 2h1v1h-1zM352 2h1v1h-1zM345 3h5v1h-5zM351 3h6v1h-6zM345 4h1v1h-1zM349 4h2v1h-2zM356 4h1v1h-1zM345 5h1v1h-1zM349 5h1v1h-1zM356 5h1v1h-1zM345 6h5v1h-5zM351 6h1v1h-1zM356 6h1v1h-1zM345 7h1v1h-1zM349 7h1v1h-1zM352 7h1v1h-1zM356 7h1v1h-1zM345 8h1v1h-1zM349 8h1v1h-1zM352 8h1v1h-1zM356 8h1v1h-1zM345 9h1v1h-1zM349 9h1v1h-1zM356 9h1v1h-1zM345 10h5v1h-5zM356 10h1v1h-1zM345 11h1v1h-1zM349 11h1v1h-1zM353 11h3v1h-3zM369 1h2v1h-2zM360 2h5v1h-5zM369 2h2v1h-2zM363 3h10v1h-10zM360 4h1v1h-1zM363 4h2v1h-2zM369 4h2v1h-2zM361 5h1v1h-1zM363 5h2v1h-2zM369 5h2v1h-2zM362 6h1v1h-1zM366 6h1v1h-1zM369 6h2v1h-2zM362 7h1v1h-1zM367 7h1v1h-1zM369 7h2v1h-2zM361 8h1v1h-1zM363 8h2v1h-2zM369 8h2v1h-2zM361 9h1v1h-1zM363 9h2v1h-2zM369 9h2v1h-2zM360 10h1v1h-1zM367 10h1v1h-1zM369 10h2v1h-2zM368 11h1v1h-1zM379 1h6v1h-6zM378 2h1v1h-1zM383 2h1v1h-1zM377 3h11v1h-11zM376 4h1v1h-1zM378 4h1v1h-1zM382 4h1v1h-1zM387 4h1v1h-1zM378 5h10v1h-10zM379 6h2v1h-2zM382 6h1v1h-1zM387 6h1v1h-1zM377 7h2v1h-2zM381 7h3v1h-3zM385 7h2v1h-2zM379 8h2v1h-2zM383 8h2v1h-2zM377 9h2v1h-2zM382 9h2v1h-2zM385 9h2v1h-2zM379 10h3v1h-3zM383 10h1v1h-1zM387 10h2v1h-2zM376 11h3v1h-3zM382 11h2v1h-2zM395 7h3v1h-3zM395 8h3v1h-3zM397 9h1v1h-1zM395 10h2v1h-2zM415 1h1v1h-1zM417 1h2v1h-2zM415 2h1v1h-1zM419 2h1v1h-1zM408 3h13v1h-13zM415 4h1v1h-1zM409 5h5v1h-5zM415 5h1v1h-1zM419 5h1v1h-1zM409 6h1v1h-1zM413 6h1v1h-1zM415 6h1v1h-1zM419 6h1v1h-1zM409 7h5v1h-5zM416 7h1v1h-1zM419 7h1v1h-1zM416 8h3v1h-3zM411 9h4v1h-4zM417 9h2v1h-2zM420 9h1v1h-1zM408 10h3v1h-3zM416 10h1v1h-1zM419 10h2v1h-2zM414 11h2v1h-2zM420 11h1v1h-1zM442 1h1v1h-1zM447 1h5v1h-5zM442 2h1v1h-1zM447 2h1v1h-1zM451 2h1v1h-1zM440 3h6v1h-6zM447 3h1v1h-1zM451 3h1v1h-1zM442 4h1v1h-1zM446 4h1v1h-1zM451 4h2v1h-2zM442 5h1v1h-1zM445 5h1v1h-1zM442 6h3v1h-3zM446 6h6v1h-6zM441 7h2v1h-2zM446 7h1v1h-1zM451 7h1v1h-1zM440 8h1v1h-1zM442 8h1v1h-1zM447 8h1v1h-1zM449 8h2v1h-2zM442 9h1v1h-1zM448 9h1v1h-1zM442 10h1v1h-1zM447 10h1v1h-1zM449 10h2v1h-2zM440 11h3v1h-3zM445 11h2v1h-2zM451 11h2v1h-2zM457 1h6v1h-6zM468 1h1v1h-1zM457 2h1v1h-1zM462 2h1v1h-1zM467 2h1v1h-1zM457 3h6v1h-6zM465 3h2v1h-2zM457 4h1v1h-1zM462 4h1v1h-1zM464 4h1v1h-1zM468 4h1v1h-1zM457 5h6v1h-6zM467 5h1v1h-1zM459 6h2v1h-2zM465 6h2v1h-2zM456 7h9v1h-9zM457 8h1v1h-1zM462 8h1v1h-1zM468 8h1v1h-1zM457 9h6v1h-6zM467 9h1v1h-1zM457 10h1v1h-1zM459 10h2v1h-2zM462 10h1v1h-1zM465 10h2v1h-2zM456 11h1v1h-1zM458 11h3v1h-3zM463 11h2v1h-2zM505 1h1v1h-1zM512 1h1v1h-1zM506 2h1v1h-1zM512 2h1v1h-1zM506 3h1v1h-1zM509 3h8v1h-8zM512 4h1v1h-1zM516 4h1v1h-1zM504 5h3v1h-3zM512 5h1v1h-1zM516 5h1v1h-1zM506 6h1v1h-1zM512 6h1v1h-1zM516 6h1v1h-1zM506 7h1v1h-1zM511 7h1v1h-1zM516 7h1v1h-1zM506 8h1v1h-1zM510 8h1v1h-1zM516 8h1v1h-1zM506 9h1v1h-1zM509 9h1v1h-1zM513 9h3v1h-3zM505 10h1v1h-1zM507 10h2v1h-2zM504 11h1v1h-1zM509 11h8v1h-8zM554 1h1v1h-1zM560 1h1v1h-1zM555 2h2v1h-2zM560 2h1v1h-1zM552 3h7v1h-7zM560 3h5v1h-5zM554 4h1v1h-1zM559 4h1v1h-1zM563 4h1v1h-1zM554 5h1v1h-1zM558 5h1v1h-1zM560 5h1v1h-1zM563 5h1v1h-1zM554 6h4v1h-4zM560 6h1v1h-1zM563 6h1v1h-1zM554 7h1v1h-1zM557 7h1v1h-1zM560 7h1v1h-1zM563 7h1v1h-1zM554 8h1v1h-1zM557 8h1v1h-1zM561 8h2v1h-2zM553 9h1v1h-1zM557 9h1v1h-1zM560 9h3v1h-3zM553 10h1v1h-1zM557 10h1v1h-1zM559 10h1v1h-1zM563 10h1v1h-1zM552 11h1v1h-1zM555 11h2v1h-2zM558 11h1v1h-1zM564 11h1v1h-1zM574 1h1v1h-1zM568 2h13v1h-13zM573 3h1v1h-1zM571 4h2v1h-2zM577 4h2v1h-2zM570 5h10v1h-10zM571 6h2v1h-2zM576 6h1v1h-1zM568 7h13v1h-13zM571 8h2v1h-2zM576 8h1v1h-1zM571 9h2v1h-2zM576 9h1v1h-1zM570 10h1v1h-1zM576 10h1v1h-1zM569 11h1v1h-1zM576 11h1v1h-1z"/><text x="192" y="11" font-family="Liberation Mono" font-size="12.00" font-weight="normal" fill="#000" textLength="56" lengthAdjust="spacingAndGlyphs">&#160;Shift&#160;</text><text x="424" y="11" font-family="Liberation Mono" font-size="12.00" font-weight="normal" fill="#000" textLength="16" lengthAdjust="spacingAndGlyphs">&#160;[</text><text x="472" y="11" font-family="Liberation Mono" font-size="12.00" font-weight="normal" fill="#000" textLength="32" lengthAdjust="spacingAndGlyphs">(P)/</text><text x="520" y="11" font-family="Liberation Mono" font-size="12.00" font-weight="normal" fill="#000" textLength="32" lengthAdjust="spacingAndGlyphs">(E)/</text><text x="584" y="11" font-family="Liberation Mono" font-size="12.00" font-weight="normal" fill="#000" textLength="40" lengthAdjust="spacingAndGlyphs">(U)]:</text></svg><svg class="t" style="left:19px;top:661px;" width="628" height="16"><path fill="#000" d="M1 1h1v1h-1zM6 1h1v1h-1zM8 1h1v1h-1zM2 2h1v1h-1zM6 2h1v1h-1zM8 2h1v1h-1zM2 3h1v1h-1zM6 3h6v1h-6zM5 4h1v1h-1zM8 4h1v1h-1zM0 5h3v1h-3zM5 5h8v1h-8zM2 6h1v1h-1zM7 6h1v1h-1zM9 6h2v1h-2zM2 7h1v1h-1zM7 7h1v1h-1zM9 7h2v1h-2zM12 7h1v1h-1zM2 8h1v1h-1zM6 8h1v1h-1zM9 8h2v1h-2zM12 8h1v1h-1zM2 9h1v1h-1zM5 9h1v1h-1zM11 9h2v1h-2zM1 10h1v1h-1zM3 10h2v1h-2zM0 11h1v1h-1zM5 11h8v1h-8zM18 1h1v1h-1zM21 1h8v1h-8zM18 2h1v1h-1zM23 2h1v1h-1zM27 2h1v1h-1zM16 3h6v1h-6zM24 3h3v1h-3zM18 4h1v1h-1zM23 4h1v1h-1zM27 4h1v1h-1zM18 5h1v1h-1zM21 5h2v1h-2zM28 5h1v1h-1zM18 6h3v1h-3zM24 6h1v1h-1zM17 7h2v1h-2zM22 7h6v1h-6zM16 8h1v1h-1zM18 8h1v1h-1zM24 8h1v1h-1zM18 9h1v1h-1zM21 9h8v1h-8zM18 10h1v1h-1zM24 10h1v1h-1zM16 11h3v1h-3zM24 11h1v1h-1zM32 1h13v1h-13zM37 2h1v1h-1zM39 2h1v1h-1zM33 3h11v1h-11zM33 4h1v1h-1zM37 4h1v1h-1zM39 4h1v1h-1zM43 4h1v1h-1zM33 5h11v1h-11zM37 6h1v1h-1zM32 7h13v1h-13zM35 8h2v1h-2zM40 8h1v1h-1zM34 9h4v1h-4zM39 9h1v1h-1zM37 10h4v1h-4zM33 11h4v1h-4zM41 11h3v1h-3zM51 1h2v1h-2zM55 1h1v1h-1zM51 2h2v1h-2zM55 2h6v1h-6zM50 3h1v1h-1zM53 3h2v1h-2zM56 3h1v1h-1zM59 3h1v1h-1zM50 4h1v1h-1zM53 4h1v1h-1zM57 4h2v1h-2zM49 5h2v1h-2zM53 5h1v1h-1zM55 5h2v1h-2zM59 5h1v1h-1zM48 6h1v1h-1zM50 6h1v1h-1zM53 6h2v1h-2zM57 6h2v1h-2zM60 6h1v1h-1zM50 7h1v1h-1zM53 7h1v1h-1zM56 7h1v1h-1zM59 7h1v1h-1zM50 8h1v1h-1zM53 8h1v1h-1zM55 8h1v1h-1zM57 8h2v1h-2zM50 9h1v1h-1zM53 9h1v1h-1zM56 9h1v1h-1zM60 9h1v1h-1zM50 10h1v1h-1zM57 10h3v1h-3zM50 11h1v1h-1zM54 11h3v1h-3zM67 1h2v1h-2zM72 1h1v1h-1zM64 2h13v1h-13zM65 3h1v1h-1zM69 3h1v1h-1zM75 3h1v1h-1zM65 4h5v1h-5zM71 4h1v1h-1zM75 4h1v1h-1zM65 5h1v1h-1zM69 5h1v1h-1zM71 5h1v1h-1zM75 5h1v1h-1zM65 6h5v1h-5zM71 6h1v1h-1zM75 6h1v1h-1zM65 7h1v1h-1zM69 7h1v1h-1zM73 7h3v1h-3zM65 9h11v1h-11zM69 10h1v1h-1zM75 10h1v1h-1zM65 11h4v1h-4zM72 11h3v1h-3zM83 1h2v1h-2zM88 1h1v1h-1zM82 2h1v1h-1zM88 2h1v1h-1zM81 3h5v1h-5zM87 3h6v1h-6zM81 4h1v1h-1zM85 4h2v1h-2zM92 4h1v1h-1zM81 5h1v1h-1zM85 5h1v1h-1zM92 5h1v1h-1zM81 6h5v1h-5zM87 6h1v1h-1zM92 6h1v1h-1zM81 7h1v1h-1zM85 7h1v1h-1zM88 7h1v1h-1zM92 7h1v1h-1zM81 8h1v1h-1zM85 8h1v1h-1zM88 8h1v1h-1zM92 8h1v1h-1zM81 9h1v1h-1zM85 9h1v1h-1zM92 9h1v1h-1zM81 10h5v1h-5zM92 10h1v1h-1zM81 11h1v1h-1zM85 11h1v1h-1zM89 11h3v1h-3zM105 1h2v1h-2zM96 2h5v1h-5zM105 2h2v1h-2zM99 3h10v1h-10zM96 4h1v1h-1zM99 4h2v1h-2zM105 4h2v1h-2zM97 5h1v1h-1zM99 5h2v1h-2zM105 5h2v1h-2zM98 6h1v1h-1zM102 6h1v1h-1zM105 6h2v1h-2zM98 7h1v1h-1zM103 7h1v1h-1zM105 7h2v1h-2zM97 8h1v1h-1zM99 8h2v1h-2zM105 8h2v1h-2zM97 9h1v1h-1zM99 9h2v1h-2zM105 9h2v1h-2zM96 10h1v1h-1zM103 10h1v1h-1zM105 10h2v1h-2zM104 11h1v1h-1zM115 1h6v1h-6zM114 2h1v1h-1zM119 2h1v1h-1zM113 3h11v1h-11zM112 4h1v1h-1zM114 4h1v1h-1zM118 4h1v1h-1zM123 4h1v1h-1zM114 5h10v1h-10zM115 6h2v1h-2zM118 6h1v1h-1zM123 6h1v1h-1zM113 7h2v1h-2zM117 7h3v1h-3zM121 7h2v1h-2zM115 8h2v1h-2zM119 8h2v1h-2zM113 9h2v1h-2zM118 9h2v1h-2zM121 9h2v1h-2zM115 10h3v1h-3zM119 10h1v1h-1zM123 10h2v1h-2zM112 11h3v1h-3zM118 11h2v1h-2zM131 7h3v1h-3zM131 8h3v1h-3zM133 9h1v1h-1zM131 10h2v1h-2zM151 1h1v1h-1zM153 1h2v1h-2zM151 2h1v1h-1zM155 2h1v1h-1zM144 3h13v1h-13zM151 4h1v1h-1zM145 5h5v1h-5zM151 5h1v1h-1zM155 5h1v1h-1zM145 6h1v1h-1zM149 6h1v1h-1zM151 6h1v1h-1zM155 6h1v1h-1zM145 7h5v1h-5zM152 7h1v1h-1zM155 7h1v1h-1zM152 8h3v1h-3zM147 9h4v1h-4zM153 9h2v1h-2zM156 9h1v1h-1zM144 10h3v1h-3zM152 10h1v1h-1zM155 10h2v1h-2zM150 11h2v1h-2zM156 11h1v1h-1zM162 1h1v1h-1zM168 1h1v1h-1zM162 2h1v1h-1zM169 2h2v1h-2zM160 3h13v1h-13zM162 4h1v1h-1zM166 4h1v1h-1zM168 4h1v1h-1zM172 4h1v1h-1zM162 5h1v1h-1zM165 5h1v1h-1zM168 5h1v1h-1zM162 6h3v1h-3zM166 6h7v1h-7zM161 7h2v1h-2zM167 7h1v1h-1zM171 7h1v1h-1zM160 8h1v1h-1zM162 8h1v1h-1zM166 8h2v1h-2zM171 8h1v1h-1zM162 9h1v1h-1zM168 9h3v1h-3zM162 10h1v1h-1zM167 10h1v1h-1zM169 10h2v1h-2zM160 11h3v1h-3zM165 11h2v1h-2zM171 11h2v1h-2zM179 1h2v1h-2zM183 1h1v1h-1zM179 2h2v1h-2zM184 2h1v1h-1zM178 3h1v1h-1zM181 3h8v1h-8zM178 4h1v1h-1zM184 4h1v1h-1zM177 5h2v1h-2zM184 5h1v1h-1zM176 6h1v1h-1zM178 6h1v1h-1zM184 6h1v1h-1zM178 7h1v1h-1zM182 7h6v1h-6zM178 8h1v1h-1zM184 8h1v1h-1zM178 9h1v1h-1zM184 9h1v1h-1zM178 10h1v1h-1zM184 10h1v1h-1zM178 11h1v1h-1zM181 11h8v1h-8zM249 1h1v1h-1zM251 1h4v1h-4zM257 1h2v1h-2zM249 2h1v1h-1zM254 2h7v1h-7zM249 3h2v1h-2zM253 3h1v1h-1zM257 3h2v1h-2zM260 3h1v1h-1zM248 4h1v1h-1zM253 4h1v1h-1zM255 4h6v1h-6zM248 5h7v1h-7zM257 5h2v1h-2zM260 5h1v1h-1zM249 6h1v1h-1zM254 6h7v1h-7zM248 7h3v1h-3zM254 7h1v1h-1zM257 7h2v1h-2zM249 8h1v1h-1zM251 8h2v1h-2zM254 8h7v1h-7zM249 9h1v1h-1zM253 9h1v1h-1zM257 9h2v1h-2zM249 10h2v1h-2zM253 10h2v1h-2zM257 10h2v1h-2zM249 11h1v1h-1zM251 11h2v1h-2zM255 11h6v1h-6zM265 1h1v1h-1zM270 1h1v1h-1zM272 1h1v1h-1zM266 2h1v1h-1zM270 2h1v1h-1zM272 2h1v1h-1zM266 3h1v1h-1zM270 3h6v1h-6zM269 4h1v1h-1zM272 4h1v1h-1zM264 5h3v1h-3zM269 5h8v1h-8zM266 6h1v1h-1zM271 6h1v1h-1zM273 6h2v1h-2zM266 7h1v1h-1zM271 7h1v1h-1zM273 7h2v1h-2zM276 7h1v1h-1zM266 8h1v1h-1zM270 8h1v1h-1zM273 8h2v1h-2zM276 8h1v1h-1zM266 9h1v1h-1zM269 9h1v1h-1zM275 9h2v1h-2zM265 10h1v1h-1zM267 10h2v1h-2zM264 11h1v1h-1zM269 11h8v1h-8zM282 1h1v1h-1zM285 1h8v1h-8zM282 2h1v1h-1zM287 2h1v1h-1zM291 2h1v1h-1zM280 3h6v1h-6zM288 3h3v1h-3zM282 4h1v1h-1zM287 4h1v1h-1zM291 4h1v1h-1zM282 5h1v1h-1zM285 5h2v1h-2zM292 5h1v1h-1zM282 6h3v1h-3zM288 6h1v1h-1zM281 7h2v1h-2zM286 7h6v1h-6zM280 8h1v1h-1zM282 8h1v1h-1zM288 8h1v1h-1zM282 9h1v1h-1zM285 9h8v1h-8zM282 10h1v1h-1zM288 10h1v1h-1zM280 11h3v1h-3zM288 11h1v1h-1zM296 1h13v1h-13zM301 2h1v1h-1zM303 2h1v1h-1zM297 3h11v1h-11zM297 4h1v1h-1zM301 4h1v1h-1zM303 4h1v1h-1zM307 4h1v1h-1zM297 5h11v1h-11zM301 6h1v1h-1zM296 7h13v1h-13zM299 8h2v1h-2zM304 8h1v1h-1zM298 9h4v1h-4zM303 9h1v1h-1zM301 10h4v1h-4zM297 11h4v1h-4zM305 11h3v1h-3zM312 1h5v1h-5zM323 1h2v1h-2zM315 2h2v1h-2zM318 2h5v1h-5zM314 3h1v1h-1zM321 3h2v1h-2zM313 4h1v1h-1zM321 4h2v1h-2zM312 5h5v1h-5zM318 5h1v1h-1zM321 5h4v1h-4zM315 6h2v1h-2zM318 6h1v1h-1zM321 6h2v1h-2zM312 7h1v1h-1zM315 7h2v1h-2zM318 7h1v1h-1zM321 7h2v1h-2zM313 8h1v1h-1zM315 8h2v1h-2zM318 8h1v1h-1zM321 8h2v1h-2zM314 9h1v1h-1zM318 9h7v1h-7zM313 10h1v1h-1zM315 10h2v1h-2zM312 11h1v1h-1zM317 11h8v1h-8zM331 1h2v1h-2zM336 1h1v1h-1zM331 2h2v1h-2zM336 2h1v1h-1zM330 3h1v1h-1zM333 3h8v1h-8zM330 4h1v1h-1zM333 4h1v1h-1zM336 4h1v1h-1zM340 4h1v1h-1zM329 5h2v1h-2zM333 5h8v1h-8zM328 6h1v1h-1zM330 6h1v1h-1zM333 6h1v1h-1zM336 6h1v1h-1zM340 6h1v1h-1zM330 7h1v1h-1zM333 7h1v1h-1zM336 7h1v1h-1zM340 7h1v1h-1zM330 8h1v1h-1zM333 8h8v1h-8zM330 9h1v1h-1zM333 9h1v1h-1zM336 9h1v1h-1zM340 9h1v1h-1zM330 10h1v1h-1zM336 10h1v1h-1zM330 11h1v1h-1zM336 11h1v1h-1zM347 1h2v1h-2zM352 1h1v1h-1zM346 2h1v1h-1zM352 2h1v1h-1zM345 3h5v1h-5zM351 3h6v1h-6zM345 4h1v1h-1zM349 4h2v1h-2zM356 4h1v1h-1zM345 5h1v1h-1zM349 5h1v1h-1zM356 5h1v1h-1zM345 6h5v1h-5zM351 6h1v1h-1zM356 6h1v1h-1zM345 7h1v1h-1zM349 7h1v1h-1zM352 7h1v1h-1zM356 7h1v1h-1zM345 8h1v1h-1zM349 8h1v1h-1zM352 8h1v1h-1zM356 8h1v1h-1zM345 9h1v1h-1zM349 9h1v1h-1zM356 9h1v1h-1zM345 10h5v1h-5zM356 10h1v1h-1zM345 11h1v1h-1zM349 11h1v1h-1zM353 11h3v1h-3zM369 1h2v1h-2zM360 2h5v1h-5zM369 2h2v1h-2zM363 3h10v1h-10zM360 4h1v1h-1zM363 4h2v1h-2zM369 4h2v1h-2zM361 5h1v1h-1zM363 5h2v1h-2zM369 5h2v1h-2zM362 6h1v1h-1zM366 6h1v1h-1zM369 6h2v1h-2zM362 7h1v1h-1zM367 7h1v1h-1zM369 7h2v1h-2zM361 8h1v1h-1zM363 8h2v1h-2zM369 8h2v1h-2zM361 9h1v1h-1zM363 9h2v1h-2zM369 9h2v1h-2zM360 10h1v1h-1zM367 10h1v1h-1zM369 10h2v1h-2zM368 11h1v1h-1zM379 1h6v1h-6zM378 2h1v1h-1zM383 2h1v1h-1zM377 3h11v1h-11zM376 4h1v1h-1zM378 4h1v1h-1zM382 4h1v1h-1zM387 4h1v1h-1zM378 5h10v1h-10zM379 6h2v1h-2zM382 6h1v1h-1zM387 6h1v1h-1zM377 7h2v1h-2zM381 7h3v1h-3zM385 7h2v1h-2zM379 8h2v1h-2zM383 8h2v1h-2zM377 9h2v1h-2zM382 9h2v1h-2zM385 9h2v1h-2zM379 10h3v1h-3zM383 10h1v1h-1zM387 10h2v1h-2zM376 11h3v1h-3zM382 11h2v1h-2zM395 7h3v1h-3zM395 8h3v1h-3zM397 9h1v1h-1zM395 10h2v1h-2zM415 1h1v1h-1zM417 1h2v1h-2zM415 2h1v1h-1zM419 2h1v1h-1zM408 3h13v1h-13zM415 4h1v1h-1zM409 5h5v1h-5zM415 5h1v1h-1zM419 5h1v1h-1zM409 6h1v1h-1zM413 6h1v1h-1zM415 6h1v1h-1zM419 6h1v1h-1zM409 7h5v1h-5zM416 7h1v1h-1zM419 7h1v1h-1zM416 8h3v1h-3zM411 9h4v1h-4zM417 9h2v1h-2zM420 9h1v1h-1zM408 10h3v1h-3zM416 10h1v1h-1zM419 10h2v1h-2zM414 11h2v1h-2zM420 11h1v1h-1zM442 1h1v1h-1zM447 1h5v1h-5zM442 2h1v1h-1zM447 2h1v1h-1zM451 2h1v1h-1zM440 3h6v1h-6zM447 3h1v1h-1zM451 3h1v1h-1zM442 4h1v1h-1zM446 4h1v1h-1zM451 4h2v1h-2zM442 5h1v1h-1zM445 5h1v1h-1zM442 6h3v1h-3zM446 6h6v1h-6zM441 7h2v1h-2zM446 7h1v1h-1zM451 7h1v1h-1zM440 8h1v1h-1zM442 8h1v1h-1zM447 8h1v1h-1zM449 8h2v1h-2zM442 9h1v1h-1zM448 9h1v1h-1zM442 10h1v1h-1zM447 10h1v1h-1zM449 10h2v1h-2zM440 11h3v1h-3zM445 11h2v1h-2zM451 11h2v1h-2zM457 1h6v1h-6zM468 1h1v1h-1zM457 2h1v1h-1zM462 2h1v1h-1zM467 2h1v1h-1zM457 3h6v1h-6zM465 3h2v1h-2zM457 4h1v1h-1zM462 4h1v1h-1zM464 4h1v1h-1zM468 4h1v1h-1zM457 5h6v1h-6zM467 5h1v1h-1zM459 6h2v1h-2zM465 6h2v1h-2zM456 7h9v1h-9zM457 8h1v1h-1zM462 8h1v1h-1zM468 8h1v1h-1zM457 9h6v1h-6zM467 9h1v1h-1zM457 10h1v1h-1zM459 10h2v1h-2zM462 10h1v1h-1zM465 10h2v1h-2zM456 11h1v1h-1zM458 11h3v1h-3zM463 11h2v1h-2zM505 1h1v1h-1zM512 1h1v1h-1zM506 2h1v1h-1zM512 2h1v1h-1zM506 3h1v1h-1zM509 3h8v1h-8zM512 4h1v1h-1zM516 4h1v1h-1zM504 5h3v1h-3zM512 5h1v1h-1zM516 5h1v1h-1zM506 6h1v1h-1zM512 6h1v1h-1zM516 6h1v1h-1zM506 7h1v1h-1zM511 7h1v1h-1zM516 7h1v1h-1zM506 8h1v1h-1zM510 8h1v1h-1zM516 8h1v1h-1zM506 9h1v1h-1zM509 9h1v1h-1zM513 9h3v1h-3zM505 10h1v1h-1zM507 10h2v1h-2zM504 11h1v1h-1zM509 11h8v1h-8zM554 1h1v1h-1zM560 1h1v1h-1zM555 2h2v1h-2zM560 2h1v1h-1zM552 3h7v1h-7zM560 3h5v1h-5zM554 4h1v1h-1zM559 4h1v1h-1zM563 4h1v1h-1zM554 5h1v1h-1zM558 5h1v1h-1zM560 5h1v1h-1zM563 5h1v1h-1zM554 6h4v1h-4zM560 6h1v1h-1zM563 6h1v1h-1zM554 7h1v1h-1zM557 7h1v1h-1zM560 7h1v1h-1zM563 7h1v1h-1zM554 8h1v1h-1zM557 8h1v1h-1zM561 8h2v1h-2zM553 9h1v1h-1zM557 9h1v1h-1zM560 9h3v1h-3zM553 10h1v1h-1zM557 10h1v1h-1zM559 10h1v1h-1zM563 10h1v1h-1zM552 11h1v1h-1zM555 11h2v1h-2zM558 11h1v1h-1zM564 11h1v1h-1zM574 1h1v1h-1zM568 2h13v1h-13zM573 3h1v1h-1zM571 4h2v1h-2zM577 4h2v1h-2zM570 5h10v1h-10zM571 6h2v1h-2zM576 6h1v1h-1zM568 7h13v1h-13zM571 8h2v1h-2zM576 8h1v1h-1zM571 9h2v1h-2zM576 9h1v1h-1zM570 10h1v1h-1zM576 10h1v1h-1zM569 11h1v1h-1zM576 11h1v1h-1z"/><text x="192" y="11" font-family="Liberation Mono" font-size="12.00" font-weight="normal" fill="#000" textLength="56" lengthAdjust="spacingAndGlyphs">&#160;Shift&#160;</text><text x="424" y="11" font-family="Liberation Mono" font-size="12.00" font-weight="normal" fill="#000" textLength="16" lengthAdjust="spacingAndGlyphs">&#160;[</text><text x="472" y="11" font-family="Liberation Mono" font-size="12.00" font-weight="normal" fill="#000" textLength="32" lengthAdjust="spacingAndGlyphs">(P)/</text><text x="520" y="11" font-family="Liberation Mono" font-size="12.00" font-weight="normal" fill="#000" textLength="32" lengthAdjust="spacingAndGlyphs">(E)/</text><text x="584" y="11" font-family="Liberation Mono" font-size="12.00" font-weight="normal" fill="#000" textLength="40" lengthAdjust="spacingAndGlyphs">(U)]:</text></svg><svg class="t" style="left:19px;top:674px;" width="628" height="16"><path fill="#000" d="M1 1h1v1h-1zM6 1h1v1h-1zM8 1h1v1h-1zM2 2h1v1h-1zM6 2h1v1h-1zM8 2h1v1h-1zM2 3h1v1h-1zM6 3h6v1h-6zM5 4h1v1h-1zM8 4h1v1h-1zM0 5h3v1h-3zM5 5h8v1h-8zM2 6h1v1h-1zM7 6h1v1h-1zM9 6h2v1h-2zM2 7h1v1h-1zM7 7h1v1h-1zM9 7h2v1h-2zM12 7h1v1h-1zM2 8h1v1h-1zM6 8h1v1h-1zM9 8h2v1h-2zM12 8h1v1h-1zM2 9h1v1h-1zM5 9h1v1h-1zM11 9h2v1h-2zM1 10h1v1h-1zM3 10h2v1h-2zM0 11h1v1h-1zM5 11h8v1h-8zM18 1h1v1h-1zM21 1h8v1h-8zM18 2h1v1h-1zM23 2h1v1h-1zM27 2h1v1h-1zM16 3h6v1h-6zM24 3h3v1h-3zM18 4h1v1h-1zM23 4h1v1h-1zM27 4h1v1h-1zM18 5h1v1h-1zM21 5h2v1h-2zM28 5h1v1h-1zM18 6h3v1h-3zM24 6h1v1h-1zM17 7h2v1h-2zM22 7h6v1h-6zM16 8h1v1h-1zM18 8h1v1h-1zM24 8h1v1h-1zM18 9h1v1h-1zM21 9h8v1h-8zM18 10h1v1h-1zM24 10h1v1h-1zM16 11h3v1h-3zM24 11h1v1h-1zM32 1h13v1h-13zM37 2h1v1h-1zM39 2h1v1h-1zM33 3h11v1h-11zM33 4h1v1h-1zM37 4h1v1h-1zM39 4h1v1h-1zM43 4h1v1h-1zM33 5h11v1h-11zM37 6h1v1h-1zM32 7h13v1h-13zM35 8h2v1h-2zM40 8h1v1h-1zM34 9h4v1h-4zM39 9h1v1h-1zM37 10h4v1h-4zM33 11h4v1h-4zM41 11h3v1h-3zM51 1h2v1h-2zM55 1h1v1h-1zM51 2h2v1h-2zM55 2h6v1h-6zM50 3h1v1h-1zM53 3h2v1h-2zM56 3h1v1h-1zM59 3h1v1h-1zM50 4h1v1h-1zM53 4h1v1h-1zM57 4h2v1h-2zM49 5h2v1h-2zM53 5h1v1h-1zM55 5h2v1h-2zM59 5h1v1h-1zM48 6h1v1h-1zM50 6h1v1h-1zM53 6h2v1h-2zM57 6h2v1h-2zM60 6h1v1h-1zM50 7h1v1h-1zM53 7h1v1h-1zM56 7h1v1h-1zM59 7h1v1h-1zM50 8h1v1h-1zM53 8h1v1h-1zM55 8h1v1h-1zM57 8h2v1h-2zM50 9h1v1h-1zM53 9h1v1h-1zM56 9h1v1h-1zM60 9h1v1h-1zM50 10h1v1h-1zM57 10h3v1h-3zM50 11h1v1h-1zM54 11h3v1h-3zM67 1h2v1h-2zM72 1h1v1h-1zM64 2h13v1h-13zM65 3h1v1h-1zM69 3h1v1h-1zM75 3h1v1h-1zM65 4h5v1h-5zM71 4h1v1h-1zM75 4h1v1h-1zM65 5h1v1h-1zM69 5h1v1h-1zM71 5h1v1h-1zM75 5h1v1h-1zM65 6h5v1h-5zM71 6h1v1h-1zM75 6h1v1h-1zM65 7h1v1h-1zM69 7h1v1h-1zM73 7h3v1h-3zM65 9h11v1h-11zM69 10h1v1h-1zM75 10h1v1h-1zM65 11h4v1h-4zM72 11h3v1h-3zM83 1h2v1h-2zM88 1h1v1h-1zM82 2h1v1h-1zM88 2h1v1h-1zM81 3h5v1h-5zM87 3h6v1h-6zM81 4h1v1h-1zM85 4h2v1h-2zM92 4h1v1h-1zM81 5h1v1h-1zM85 5h1v1h-1zM92 5h1v1h-1zM81 6h5v1h-5zM87 6h1v1h-1zM92 6h1v1h-1zM81 7h1v1h-1zM85 7h1v1h-1zM88 7h1v1h-1zM92 7h1v1h-1zM81 8h1v1h-1zM85 8h1v1h-1zM88 8h1v1h-1zM92 8h1v1h-1zM81 9h1v1h-1zM85 9h1v1h-1zM92 9h1v1h-1zM81 10h5v1h-5zM92 10h1v1h-1zM81 11h1v1h-1zM85 11h1v1h-1zM89 11h3v1h-3zM105 1h2v1h-2zM96 2h5v1h-5zM105 2h2v1h-2zM99 3h10v1h-10zM96 4h1v1h-1zM99 4h2v1h-2zM105 4h2v1h-2zM97 5h1v1h-1zM99 5h2v1h-2zM105 5h2v1h-2zM98 6h1v1h-1zM102 6h1v1h-1zM105 6h2v1h-2zM98 7h1v1h-1zM103 7h1v1h-1zM105 7h2v1h-2zM97 8h1v1h-1zM99 8h2v1h-2zM105 8h2v1h-2zM97 9h1v1h-1zM99 9h2v1h-2zM105 9h2v1h-2zM96 10h1v1h-1zM103 10h1v1h-1zM105 10h2v1h-2zM104 11h1v1h-1zM115 1h6v1h-6zM114 2h1v1h-1zM119 2h1v1h-1zM113 3h11v1h-11zM112 4h1v1h-1zM114 4h1v1h-1zM118 4h1v1h-1zM123 4h1v1h-1zM114 5h10v1h-10zM115 6h2v1h-2zM118 6h1v1h-1zM123 6h1v1h-1zM113 7h2v1h-2zM117 7h3v1h-3zM121 7h2v1h-2zM115 8h2v1h-2zM119 8h2v1h-2zM113 9h2v1h-2zM118 9h2v1h-2zM121 9h2v1h-2zM115 10h3v1h-3zM119 10h1v1h-1zM123 10h2v1h-2zM112 11h3v1h-3zM118 11h2v1h-2zM131 7h3v1h-3zM131 8h3v1h-3zM133 9h1v1h-1zM131 10h2v1h-2zM151 1h1v1h-1zM153 1h2v1h-2zM151 2h1v1h-1zM155 2h1v1h-1zM144 3h13v1h-13zM151 4h1v1h-1zM145 5h5v1h-5zM151 5h1v1h-1zM155 5h1v1h-1zM145 6h1v1h-1zM149 6h1v1h-1zM151 6h1v1h-1zM155 6h1v1h-1zM145 7h5v1h-5zM152 7h1v1h-1zM155 7h1v1h-1zM152 8h3v1h-3zM147 9h4v1h-4zM153 9h2v1h-2zM156 9h1v1h-1zM144 10h3v1h-3zM152 10h1v1h-1zM155 10h2v1h-2zM150 11h2v1h-2zM156 11h1v1h-1zM162 1h1v1h-1zM168 1h1v1h-1zM162 2h1v1h-1zM169 2h2v1h-2zM160 3h13v1h-13zM162 4h1v1h-1zM166 4h1v1h-1zM168 4h1v1h-1zM172 4h1v1h-1zM162 5h1v1h-1zM165 5h1v1h-1zM168 5h1v1h-1zM162 6h3v1h-3zM166 6h7v1h-7zM161 7h2v1h-2zM167 7h1v1h-1zM171 7h1v1h-1zM160 8h1v1h-1zM162 8h1v1h-1zM166 8h2v1h-2zM171 8h1v1h-1zM162 9h1v1h-1zM168 9h3v1h-3zM162 10h1v1h-1zM167 10h1v1h-1zM169 10h2v1h-2zM160 11h3v1h-3zM165 11h2v1h-2zM171 11h2v1h-2zM179 1h2v1h-2zM183 1h1v1h-1zM179 2h2v1h-2zM184 2h1v1h-1zM178 3h1v1h-1zM181 3h8v1h-8zM178 4h1v1h-1zM184 4h1v1h-1zM177 5h2v1h-2zM184 5h1v1h-1zM176 6h1v1h-1zM178 6h1v1h-1zM184 6h1v1h-1zM178 7h1v1h-1zM182 7h6v1h-6zM178 8h1v1h-1zM184 8h1v1h-1zM178 9h1v1h-1zM184 9h1v1h-1zM178 10h1v1h-1zM184 10h1v1h-1zM178 11h1v1h-1zM181 11h8v1h-8zM249 1h1v1h-1zM251 1h4v1h-4zM257 1h2v1h-2zM249 2h1v1h-1zM254 2h7v1h-7zM249 3h2v1h-2zM253 3h1v1h-1zM257 3h2v1h-2zM260 3h1v1h-1zM248 4h1v1h-1zM253 4h1v1h-1zM255 4h6v1h-6zM248 5h7v1h-7zM257 5h2v1h-2zM260 5h1v1h-1zM249 6h1v1h-1zM254 6h7v1h-7zM248 7h3v1h-3zM254 7h1v1h-1zM257 7h2v1h-2zM249 8h1v1h-1zM251 8h2v1h-2zM254 8h7v1h-7zM249 9h1v1h-1zM253 9h1v1h-1zM257 9h2v1h-2zM249 10h2v1h-2zM253 10h2v1h-2zM257 10h2v1h-2zM249 11h1v1h-1zM251 11h2v1h-2zM255 11h6v1h-6zM265 1h1v1h-1zM270 1h1v1h-1zM272 1h1v1h-1zM266 2h1v1h-1zM270 2h1v1h-1zM272 2h1v1h-1zM266 3h1v1h-1zM270 3h6v1h-6zM269 4h1v1h-1zM272 4h1v1h-1zM264 5h3v1h-3zM269 5h8v1h-8zM266 6h1v1h-1zM271 6h1v1h-1zM273 6h2v1h-2zM266 7h1v1h-1zM271 7h1v1h-1zM273 7h2v1h-2zM276 7h1v1h-1zM266 8h1v1h-1zM270 8h1v1h-1zM273 8h2v1h-2zM276 8h1v1h-1zM266 9h1v1h-1zM269 9h1v1h-1zM275 9h2v1h-2zM265 10h1v1h-1zM267 10h2v1h-2zM264 11h1v1h-1zM269 11h8v1h-8zM282 1h1v1h-1zM285 1h8v1h-8zM282 2h1v1h-1zM287 2h1v1h-1zM291 2h1v1h-1zM280 3h6v1h-6zM288 3h3v1h-3zM282 4h1v1h-1zM287 4h1v1h-1zM291 4h1v1h-1zM282 5h1v1h-1zM285 5h2v1h-2zM292 5h1v1h-1zM282 6h3v1h-3zM288 6h1v1h-1zM281 7h2v1h-2zM286 7h6v1h-6zM280 8h1v1h-1zM282 8h1v1h-1zM288 8h1v1h-1zM282 9h1v1h-1zM285 9h8v1h-8zM282 10h1v1h-1zM288 10h1v1h-1zM280 11h3v1h-3zM288 11h1v1h-1zM296 1h13v1h-13zM301 2h1v1h-1zM303 2h1v1h-1zM297 3h11v1h-11zM297 4h1v1h-1zM301 4h1v1h-1zM303 4h1v1h-1zM307 4h1v1h-1zM297 5h11v1h-11zM301 6h1v1h-1zM296 7h13v1h-13zM299 8h2v1h-2zM304 8h1v1h-1zM298 9h4v1h-4zM303 9h1v1h-1zM301 10h4v1h-4zM297 11h4v1h-4zM305 11h3v1h-3zM312 1h5v1h-5zM323 1h2v1h-2zM315 2h2v1h-2zM318 2h5v1h-5zM314 3h1v1h-1zM321 3h2v1h-2zM313 4h1v1h-1zM321 4h2v1h-2zM312 5h5v1h-5zM318 5h1v1h-1zM321 5h4v1h-4zM315 6h2v1h-2zM318 6h1v1h-1zM321 6h2v1h-2zM312 7h1v1h-1zM315 7h2v1h-2zM318 7h1v1h-1zM321 7h2v1h-2zM313 8h1v1h-1zM315 8h2v1h-2zM318 8h1v1h-1zM321 8h2v1h-2zM314 9h1v1h-1zM318 9h7v1h-7zM313 10h1v1h-1zM315 10h2v1h-2zM312 11h1v1h-1zM317 11h8v1h-8zM331 1h2v1h-2zM336 1h1v1h-1zM331 2h2v1h-2zM336 2h1v1h-1zM330 3h1v1h-1zM333 3h8v1h-8zM330 4h1v1h-1zM333 4h1v1h-1zM336 4h1v1h-1zM340 4h1v1h-1zM329 5h2v1h-2zM333 5h8v1h-8zM328 6h1v1h-1zM330 6h1v1h-1zM333 6h1v1h-1zM336 6h1v1h-1zM340 6h1v1h-1zM330 7h1v1h-1zM333 7h1v1h-1zM336 7h1v1h-1zM340 7h1v1h-1zM330 8h1v1h-1zM333 8h8v1h-8zM330 9h1v1h-1zM333 9h1v1h-1zM336 9h1v1h-1zM340 9h1v1h-1zM330 10h1v1h-1zM336 10h1v1h-1zM330 11h1v1h-1zM336 11h1v1h-1zM347 1h2v1h-2zM352 1h1v1h-1zM346 2h1v1h-1zM352 2h1v1h-1zM345 3h5v1h-5zM351 3h6v1h-6zM345 4h1v1h-1zM349 4h2v1h-2zM356 4h1v1h-1zM345 5h1v1h-1zM349 5h1v1h-1zM356 5h1v1h-1zM345 6h5v1h-5zM351 6h1v1h-1zM356 6h1v1h-1zM345 7h1v1h-1zM349 7h1v1h-1zM352 7h1v1h-1zM356 7h1v1h-1zM345 8h1v1h-1zM349 8h1v1h-1zM352 8h1v1h-1zM356 8h1v1h-1zM345 9h1v1h-1zM349 9h1v1h-1zM356 9h1v1h-1zM345 10h5v1h-5zM356 10h1v1h-1zM345 11h1v1h-1zM349 11h1v1h-1zM353 11h3v1h-3zM369 1h2v1h-2zM360 2h5v1h-5zM369 2h2v1h-2zM363 3h10v1h-10zM360 4h1v1h-1zM363 4h2v1h-2zM369 4h2v1h-2zM361 5h1v1h-1zM363 5h2v1h-2zM369 5h2v1h-2zM362 6h1v1h-1zM366 6h1v1h-1zM369 6h2v1h-2zM362 7h1v1h-1zM367 7h1v1h-1zM369 7h2v1h-2zM361 8h1v1h-1zM363 8h2v1h-2zM369 8h2v1h-2zM361 9h1v1h-1zM363 9h2v1h-2zM369 9h2v1h-2zM360 10h1v1h-1zM367 10h1v1h-1zM369 10h2v1h-2zM368 11h1v1h-1zM379 1h6v1h-6zM378 2h1v1h-1zM383 2h1v1h-1zM377 3h11v1h-11zM376 4h1v1h-1zM378 4h1v1h-1zM382 4h1v1h-1zM387 4h1v1h-1zM378 5h10v1h-10zM379 6h2v1h-2zM382 6h1v1h-1zM387 6h1v1h-1zM377 7h2v1h-2zM381 7h3v1h-3zM385 7h2v1h-2zM379 8h2v1h-2zM383 8h2v1h-2zM377 9h2v1h-2zM382 9h2v1h-2zM385 9h2v1h-2zM379 10h3v1h-3zM383 10h1v1h-1zM387 10h2v1h-2zM376 11h3v1h-3zM382 11h2v1h-2zM395 7h3v1h-3zM395 8h3v1h-3zM397 9h1v1h-1zM395 10h2v1h-2zM415 1h1v1h-1zM417 1h2v1h-2zM415 2h1v1h-1zM419 2h1v1h-1zM408 3h13v1h-13zM415 4h1v1h-1zM409 5h5v1h-5zM415 5h1v1h-1zM419 5h1v1h-1zM409 6h1v1h-1zM413 6h1v1h-1zM415 6h1v1h-1zM419 6h1v1h-1zM409 7h5v1h-5zM416 7h1v1h-1zM419 7h1v1h-1zM416 8h3v1h-3zM411 9h4v1h-4zM417 9h2v1h-2zM420 9h1v1h-1zM408 10h3v1h-3zM416 10h1v1h-1zM419 10h2v1h-2zM414 11h2v1h-2zM420 11h1v1h-1zM442 1h1v1h-1zM447 1h5v1h-5zM442 2h1v1h-1zM447 2h1v1h-1zM451 2h1v1h-1zM440 3h6v1h-6zM447 3h1v1h-1zM451 3h1v1h-1zM442 4h1v1h-1zM446 4h1v1h-1zM451 4h2v1h-2zM442 5h1v1h-1zM445 5h1v1h-1zM442 6h3v1h-3zM446 6h6v1h-6zM441 7h2v1h-2zM446 7h1v1h-1zM451 7h1v1h-1zM440 8h1v1h-1zM442 8h1v1h-1zM447 8h1v1h-1zM449 8h2v1h-2zM442 9h1v1h-1zM448 9h1v1h-1zM442 10h1v1h-1zM447 10h1v1h-1zM449 10h2v1h-2zM440 11h3v1h-3zM445 11h2v1h-2zM451 11h2v1h-2zM457 1h6v1h-6zM468 1h1v1h-1zM457 2h1v1h-1zM462 2h1v1h-1zM467 2h1v1h-1zM457 3h6v1h-6zM465 3h2v1h-2zM457 4h1v1h-1zM462 4h1v1h-1zM464 4h1v1h-1zM468 4h1v1h-1zM457 5h6v1h-6zM467 5h1v1h-1zM459 6h2v1h-2zM465 6h2v1h-2zM456 7h9v1h-9zM457 8h1v1h-1zM462 8h1v1h-1zM468 8h1v1h-1zM457 9h6v1h-6zM467 9h1v1h-1zM457 10h1v1h-1zM459 10h2v1h-2zM462 10h1v1h-1zM465 10h2v1h-2zM456 11h1v1h-1zM458 11h3v1h-3zM463 11h2v1h-2zM505 1h1v1h-1zM512 1h1v1h-1zM506 2h1v1h-1zM512 2h1v1h-1zM506 3h1v1h-1zM509 3h8v1h-8zM512 4h1v1h-1zM516 4h1v1h-1zM504 5h3v1h-3zM512 5h1v1h-1zM516 5h1v1h-1zM506 6h1v1h-1zM512 6h1v1h-1zM516 6h1v1h-1zM506 7h1v1h-1zM511 7h1v1h-1zM516 7h1v1h-1zM506 8h1v1h-1zM510 8h1v1h-1zM516 8h1v1h-1zM506 9h1v1h-1zM509 9h1v1h-1zM513 9h3v1h-3zM505 10h1v1h-1zM507 10h2v1h-2zM504 11h1v1h-1zM509 11h8v1h-8zM554 1h1v1h-1zM560 1h1v1h-1zM555 2h2v1h-2zM560 2h1v1h-1zM552 3h7v1h-7zM560 3h5v1h-5zM554 4h1v1h-1zM559 4h1v1h-1zM563 4h1v1h-1zM554 5h1v1h-1zM558 5h1v1h-1zM560 5h1v1h-1zM563 5h1v1h-1zM554 6h4v1h-4zM560 6h1v1h-1zM563 6h1v1h-1zM554 7h1v1h-1zM557 7h1v1h-1zM560 7h1v1h-1zM563 7h1v1h-1zM554 8h1v1h-1zM557 8h1v1h-1zM561 8h2v1h-2zM553 9h1v1h-1zM557 9h1v1h-1zM560 9h3v1h-3zM553 10h1v1h-1zM557 10h1v1h-1zM559 10h1v1h-1zM563 10h1v1h-1zM552 11h1v1h-1zM555 11h2v1h-2zM558 11h1v1h-1zM564 11h1v1h-1zM574 1h1v1h-1zM568 2h13v1h-13zM573 3h1v1h-1zM571 4h2v1h-2zM577 4h2v1h-2zM570 5h10v1h-10zM571 6h2v1h-2zM576 6h1v1h-1zM568 7h13v1h-13zM571 8h2v1h-2zM576 8h1v1h-1zM571 9h2v1h-2zM576 9h1v1h-1zM570 10h1v1h-1zM576 10h1v1h-1zM569 11h1v1h-1zM576 11h1v1h-1z"/><text x="192" y="11" font-family="Liberation Mono" font-size="12.00" font-weight="normal" fill="#000" textLength="56" lengthAdjust="spacingAndGlyphs">&#160;Shift&#160;</text><text x="424" y="11" font-family="Liberation Mono" font-size="12.00" font-weight="normal" fill="#000" textLength="16" lengthAdjust="spacingAndGlyphs">&#160;[</text><text x="472" y="11" font-family="Liberation Mono" font-size="12.00" font-weight="normal" fill="#000" textLength="32" lengthAdjust="spacingAndGlyphs">(P)/</text><text x="520" y="11" font-family="Liberation Mono" font-size="12.00" font-weight="normal" fill="#000" textLength="32" lengthAdjust="spacingAndGlyphs">(E)/</text><text x="584" y="11" font-family="Liberation Mono" font-size="12.00" font-weight="normal" fill="#000" textLength="40" lengthAdjust="spacingAndGlyphs">(U)]:</text></svg><svg class="t" style="left:19px;top:698px;" width="44" height="16"><path fill="#000" d="M6 1h1v1h-1zM5 2h1v1h-1zM7 2h1v1h-1zM3 3h2v1h-2zM8 3h1v1h-1zM0 4h3v1h-3zM5 4h3v1h-3zM9 4h4v1h-4zM1 6h5v1h-5zM7 6h5v1h-5zM1 7h1v1h-1zM5 7h1v1h-1zM7 7h1v1h-1zM11 7h1v1h-1zM1 8h1v1h-1zM5 8h1v1h-1zM7 8h1v1h-1zM11 8h1v1h-1zM1 9h5v1h-5zM7 9h1v1h-1zM11 9h1v1h-1zM1 10h1v1h-1zM5 10h1v1h-1zM7 10h1v1h-1zM9 10h3v1h-3zM7 11h1v1h-1zM22 1h1v1h-1zM22 2h1v1h-1zM21 3h1v1h-1zM23 3h1v1h-1zM19 4h2v1h-2zM24 4h1v1h-1zM18 5h1v1h-1zM22 5h1v1h-1zM25 5h2v1h-2zM16 6h2v1h-2zM23 6h1v1h-1zM27 6h2v1h-2zM18 7h9v1h-9zM24 8h1v1h-1zM21 9h1v1h-1zM23 9h1v1h-1zM22 10h1v1h-1zM23 11h1v1h-1z"/><text x="32" y="11" font-family="Liberation Mono" font-size="12.00" font-weight="normal" fill="#000" textLength="8" lengthAdjust="spacingAndGlyphs">:</text></svg>
<div style="left:18px;top:696px;width:983px;height:1px;background:#808080;"></div>
<div style="left:1000px;top:609px;width:16px;height:87px;background:repeating-conic-gradient(#fff 0 25%,#d4d0c8 0 50%) 0 0/2px 2px;"></div>
<div style="left:1000px;top:609px;width:16px;height:16px;box-shadow:inset -1px -1px #404040,inset 1px 1px #d4d0c8,inset -2px -2px #808080,inset 2px 2px #fff;background:#d4d0c8;"><svg width="16" height="16" style="position:absolute;left:0;top:0"><path fill="#000" d="M4 9h7v1h-7zM5 8h5v1h-5zM6 7h3v1h-3zM7 6h1v1h-1z"/></svg></div>
<div style="left:1000px;top:680px;width:16px;height:16px;box-shadow:inset -1px -1px #404040,inset 1px 1px #d4d0c8,inset -2px -2px #808080,inset 2px 2px #fff;background:#d4d0c8;"><svg width="16" height="16" style="position:absolute;left:0;top:0"><path fill="#000" d="M4 6h7v1h-7zM5 7h5v1h-5zM6 8h3v1h-3zM7 9h1v1h-1z"/></svg></div>
<div style="left:1000px;top:664px;width:16px;height:16px;box-shadow:inset -1px -1px #404040,inset 1px 1px #d4d0c8,inset -2px -2px #808080,inset 2px 2px #fff;background:#d4d0c8;"></div>
<div style="left:999px;top:697px;width:17px;height:15px;background:#d4d0c8;"></div>
<div style="left:935px;top:697px;width:3px;height:15px;background:#d4d0c8;"></div>
<div style="left:938px;top:697px;width:61px;height:15px;background:repeating-conic-gradient(#fff 0 25%,#d4d0c8 0 50%) 0 0/2px 2px;"></div>
<div style="left:938px;top:697px;width:16px;height:15px;box-shadow:inset -1px -1px #404040,inset 1px 1px #d4d0c8,inset -2px -2px #808080,inset 2px 2px #fff;background:#d4d0c8;"><svg width="16" height="15" style="position:absolute;left:0;top:0"><path fill="#000" d="M7 5v5h1v-5zM6 6v3h1v-3zM5 7v1h1v-1z"/></svg></div>
<div style="left:953px;top:697px;width:16px;height:15px;box-shadow:inset -1px -1px #404040,inset 1px 1px #d4d0c8,inset -2px -2px #808080,inset 2px 2px #fff;background:#d4d0c8;"></div>
<div style="left:983px;top:697px;width:16px;height:15px;box-shadow:inset -1px -1px #404040,inset 1px 1px #d4d0c8,inset -2px -2px #808080,inset 2px 2px #fff;background:#d4d0c8;"><svg width="16" height="15" style="position:absolute;left:0;top:0"><path fill="#000" d="M6 5v5h1v-5zM7 6v3h1v-3zM8 7v1h1v-1z"/></svg></div>
<div style="left:0px;top:714px;width:1024px;height:1px;background:#808080;"></div>
<div style="left:0px;top:715px;width:1024px;height:1px;background:#fff;"></div>
<div style="left:5px;top:719px;width:250px;height:18px;border:1px solid #808080;"></div>
<svg class="t" style="left:7px;top:722px;" width="160" height="16"><text x="-0.34 5.66 11.66 19.33 23.66 29.66 35.66 41.66 49.33" y="11" font-family="Liberation Sans" font-size="11.04" font-weight="normal" fill="#000">831.9644,</text><text x="59.66 65.66 71.66 79.33 83.66 89.66 95.66 101.66 109.33" y="11" font-family="Liberation Sans" font-size="11.04" font-weight="normal" fill="#000">388.2010,</text><text x="119.66 127.33 131.66 137.66 143.66 149.66" y="11" font-family="Liberation Sans" font-size="11.04" font-weight="normal" fill="#000">0.0000</text></svg>
<div style="left:259px;top:719px;width:28px;height:18px;box-shadow:inset 1px 1px #fff,inset -1px -1px #808080;box-shadow:inset 1px 1px #fff,inset -1px -1px #808080;"></div>
<svg class="t" style="left:261px;top:722px;" width="28" height="16"><path fill="#000" d="M2 1h1v1h-1zM7 1h1v1h-1zM9 1h1v1h-1zM2 2h1v1h-1zM7 2h1v1h-1zM10 2h1v1h-1zM0 3h11v1h-11zM2 4h1v1h-1zM7 4h1v1h-1zM2 5h1v1h-1zM4 5h7v1h-7zM2 6h3v1h-3zM7 6h1v1h-1zM10 6h1v1h-1zM1 7h2v1h-2zM4 7h7v1h-7zM0 8h1v1h-1zM2 8h1v1h-1zM4 8h1v1h-1zM7 8h1v1h-1zM10 8h1v1h-1zM2 9h1v1h-1zM4 9h7v1h-7zM2 10h1v1h-1zM4 10h1v1h-1zM7 10h1v1h-1zM10 10h1v1h-1zM0 11h3v1h-3zM4 11h1v1h-1zM7 11h1v1h-1zM9 11h2v1h-2zM14 1h1v1h-1zM17 1h5v1h-5zM14 2h1v1h-1zM17 2h1v1h-1zM21 2h1v1h-1zM12 3h6v1h-6zM21 3h1v1h-1zM14 4h1v1h-1zM17 4h1v1h-1zM21 4h1v1h-1zM14 5h1v1h-1zM16 5h6v1h-6zM14 6h2v1h-2zM19 6h1v1h-1zM13 7h2v1h-2zM17 7h1v1h-1zM19 7h1v1h-1zM12 8h1v1h-1zM14 8h1v1h-1zM17 8h1v1h-1zM19 8h4v1h-4zM14 9h1v1h-1zM17 9h1v1h-1zM19 9h1v1h-1zM14 10h1v1h-1zM16 10h1v1h-1zM18 10h2v1h-2zM12 11h4v1h-4zM19 11h4v1h-4z"/></svg>
<div style="left:291px;top:719px;width:28px;height:18px;box-shadow:inset 1px 1px #fff,inset -1px -1px #808080;box-shadow:inset 1px 1px #fff,inset -1px -1px #808080;"></div>
<svg class="t" style="left:293px;top:722px;" width="28" height="16"><path fill="#000" d="M2 1h1v1h-1zM4 1h3v1h-3zM8 1h3v1h-3zM2 2h1v1h-1zM4 2h1v1h-1zM6 2h1v1h-1zM8 2h1v1h-1zM10 2h1v1h-1zM0 3h5v1h-5zM6 3h1v1h-1zM8 3h1v1h-1zM10 3h1v1h-1zM2 4h1v1h-1zM4 4h1v1h-1zM6 4h1v1h-1zM8 4h1v1h-1zM10 4h1v1h-1zM2 5h9v1h-9zM2 6h1v1h-1zM4 6h1v1h-1zM6 6h1v1h-1zM8 6h1v1h-1zM10 6h1v1h-1zM1 7h2v1h-2zM4 7h1v1h-1zM6 7h1v1h-1zM8 7h1v1h-1zM10 7h1v1h-1zM0 8h1v1h-1zM2 8h1v1h-1zM4 8h1v1h-1zM6 8h1v1h-1zM8 8h1v1h-1zM10 8h1v1h-1zM2 9h1v1h-1zM4 9h1v1h-1zM6 9h1v1h-1zM8 9h1v1h-1zM10 9h1v1h-1zM2 10h1v1h-1zM4 10h1v1h-1zM6 10h1v1h-1zM8 10h1v1h-1zM10 10h1v1h-1zM2 11h2v1h-2zM5 11h1v1h-1zM7 11h1v1h-1zM9 11h2v1h-2zM14 1h1v1h-1zM18 1h1v1h-1zM14 2h1v1h-1zM18 2h4v1h-4zM12 3h4v1h-4zM17 3h1v1h-1zM21 3h1v1h-1zM14 4h1v1h-1zM16 4h1v1h-1zM18 4h1v1h-1zM20 4h1v1h-1zM14 5h1v1h-1zM19 5h1v1h-1zM13 6h3v1h-3zM18 6h1v1h-1zM20 6h1v1h-1zM13 7h2v1h-2zM16 7h2v1h-2zM21 7h2v1h-2zM12 8h1v1h-1zM14 8h1v1h-1zM17 8h5v1h-5zM14 9h1v1h-1zM17 9h1v1h-1zM21 9h1v1h-1zM14 10h1v1h-1zM17 10h1v1h-1zM21 10h1v1h-1zM14 11h1v1h-1zM17 11h5v1h-5z"/></svg>
<div style="left:323px;top:719px;width:28px;height:18px;box-shadow:inset 1px 1px #fff,inset -1px -1px #808080;box-shadow:inset 1px 1px #fff,inset -1px -1px #808080;"></div>
<svg class="t" style="left:325px;top:722px;" width="28" height="16"><path fill="#000" d="M0 2h11v1h-11zM5 3h1v1h-1zM5 4h1v1h-1zM2 5h1v1h-1zM5 5h1v1h-1zM2 6h1v1h-1zM5 6h5v1h-5zM2 7h1v1h-1zM5 7h1v1h-1zM2 8h1v1h-1zM5 8h1v1h-1zM2 9h1v1h-1zM5 9h1v1h-1zM2 10h1v1h-1zM5 10h1v1h-1zM0 11h11v1h-11zM17 1h1v1h-1zM12 2h11v1h-11zM15 4h1v1h-1zM19 4h1v1h-1zM14 5h1v1h-1zM20 5h1v1h-1zM13 6h1v1h-1zM15 6h1v1h-1zM19 6h1v1h-1zM21 6h1v1h-1zM15 7h1v1h-1zM19 7h1v1h-1zM16 8h1v1h-1zM18 8h1v1h-1zM17 9h1v1h-1zM15 10h2v1h-2zM18 10h2v1h-2zM13 11h2v1h-2zM20 11h3v1h-3z"/></svg>
<div style="left:355px;top:719px;width:28px;height:18px;box-shadow:inset 1px 1px #fff,inset -1px -1px #808080;box-shadow:inset 1px 1px #fff,inset -1px -1px #808080;"></div>
<svg class="t" style="left:357px;top:722px;" width="28" height="16"><path fill="#000" d="M2 1h1v1h-1zM5 1h6v1h-6zM2 2h1v1h-1zM6 2h1v1h-1zM9 2h1v1h-1zM0 3h5v1h-5zM6 3h1v1h-1zM8 3h1v1h-1zM2 4h1v1h-1zM6 4h1v1h-1zM8 4h3v1h-3zM2 5h1v1h-1zM6 5h1v1h-1zM10 5h1v1h-1zM1 6h3v1h-3zM6 6h1v1h-1zM10 6h1v1h-1zM1 7h2v1h-2zM4 7h2v1h-2zM7 7h1v1h-1zM9 7h1v1h-1zM0 8h1v1h-1zM2 8h1v1h-1zM5 8h1v1h-1zM7 8h1v1h-1zM9 8h1v1h-1zM2 9h1v1h-1zM5 9h1v1h-1zM8 9h1v1h-1zM2 10h1v1h-1zM4 10h1v1h-1zM7 10h1v1h-1zM9 10h1v1h-1zM2 11h2v1h-2zM6 11h1v1h-1zM10 11h1v1h-1zM14 1h1v1h-1zM20 1h1v1h-1zM12 2h5v1h-5zM20 2h1v1h-1zM13 3h1v1h-1zM17 3h6v1h-6zM13 4h2v1h-2zM17 4h1v1h-1zM20 4h1v1h-1zM22 4h1v1h-1zM12 5h1v1h-1zM14 5h1v1h-1zM17 5h1v1h-1zM20 5h1v1h-1zM22 5h1v1h-1zM12 6h6v1h-6zM20 6h1v1h-1zM22 6h1v1h-1zM14 7h1v1h-1zM17 7h6v1h-6zM14 8h4v1h-4zM20 8h1v1h-1zM22 8h1v1h-1zM12 9h3v1h-3zM17 9h1v1h-1zM20 9h1v1h-1zM22 9h1v1h-1zM14 10h1v1h-1zM17 10h6v1h-6zM14 11h1v1h-1zM17 11h1v1h-1zM22 11h1v1h-1z"/></svg>
<div style="left:387px;top:719px;width:52px;height:18px;box-shadow:inset 1px 1px #000,inset -1px -1px #fff;background:repeating-conic-gradient(#fff 0 25%,#e4e2dc 0 50%) 0 0/2px 2px;"></div>
<svg class="t" style="left:389px;top:722px;" width="52" height="16"><path fill="#000" d="M8 1h1v1h-1zM0 2h4v1h-4zM8 2h1v1h-1zM3 3h8v1h-8zM0 4h1v1h-1zM3 4h1v1h-1zM8 4h1v1h-1zM1 5h1v1h-1zM3 5h1v1h-1zM8 5h1v1h-1zM2 6h1v1h-1zM5 6h1v1h-1zM8 6h1v1h-1zM2 7h1v1h-1zM6 7h1v1h-1zM8 7h1v1h-1zM1 8h1v1h-1zM3 8h1v1h-1zM8 8h1v1h-1zM1 9h1v1h-1zM3 9h1v1h-1zM8 9h1v1h-1zM0 10h1v1h-1zM6 10h1v1h-1zM8 10h1v1h-1zM7 11h1v1h-1zM15 1h5v1h-5zM14 2h1v1h-1zM18 2h1v1h-1zM13 3h9v1h-9zM12 4h1v1h-1zM14 4h1v1h-1zM17 4h1v1h-1zM21 4h1v1h-1zM14 5h8v1h-8zM15 6h1v1h-1zM17 6h1v1h-1zM21 6h1v1h-1zM13 7h2v1h-2zM16 7h3v1h-3zM20 7h1v1h-1zM15 8h1v1h-1zM18 8h2v1h-2zM13 9h2v1h-2zM17 9h2v1h-2zM20 9h1v1h-1zM15 10h2v1h-2zM18 10h1v1h-1zM21 10h2v1h-2zM12 11h3v1h-3zM17 11h2v1h-2zM26 1h1v1h-1zM31 1h1v1h-1zM33 1h1v1h-1zM26 2h1v1h-1zM31 2h1v1h-1zM34 2h1v1h-1zM24 3h11v1h-11zM26 4h1v1h-1zM31 4h1v1h-1zM26 5h1v1h-1zM28 5h7v1h-7zM26 6h3v1h-3zM31 6h1v1h-1zM34 6h1v1h-1zM25 7h2v1h-2zM28 7h7v1h-7zM24 8h1v1h-1zM26 8h1v1h-1zM28 8h1v1h-1zM31 8h1v1h-1zM34 8h1v1h-1zM26 9h1v1h-1zM28 9h7v1h-7zM26 10h1v1h-1zM28 10h1v1h-1zM31 10h1v1h-1zM34 10h1v1h-1zM24 11h3v1h-3zM28 11h1v1h-1zM31 11h1v1h-1zM33 11h2v1h-2zM38 1h1v1h-1zM41 1h5v1h-5zM38 2h1v1h-1zM41 2h1v1h-1zM45 2h1v1h-1zM36 3h6v1h-6zM45 3h1v1h-1zM38 4h1v1h-1zM41 4h1v1h-1zM45 4h1v1h-1zM38 5h1v1h-1zM40 5h6v1h-6zM38 6h2v1h-2zM43 6h1v1h-1zM37 7h2v1h-2zM41 7h1v1h-1zM43 7h1v1h-1zM36 8h1v1h-1zM38 8h1v1h-1zM41 8h1v1h-1zM43 8h4v1h-4zM38 9h1v1h-1zM41 9h1v1h-1zM43 9h1v1h-1zM38 10h1v1h-1zM40 10h1v1h-1zM42 10h2v1h-2zM36 11h4v1h-4zM43 11h4v1h-4z"/></svg>
<div style="left:443px;top:719px;width:52px;height:18px;box-shadow:inset 1px 1px #000,inset -1px -1px #fff;background:repeating-conic-gradient(#fff 0 25%,#e4e2dc 0 50%) 0 0/2px 2px;"></div>
<svg class="t" style="left:445px;top:722px;" width="52" height="16"><path fill="#000" d="M8 1h1v1h-1zM0 2h4v1h-4zM8 2h1v1h-1zM3 3h8v1h-8zM0 4h1v1h-1zM3 4h1v1h-1zM8 4h1v1h-1zM1 5h1v1h-1zM3 5h1v1h-1zM8 5h1v1h-1zM2 6h1v1h-1zM5 6h1v1h-1zM8 6h1v1h-1zM2 7h1v1h-1zM6 7h1v1h-1zM8 7h1v1h-1zM1 8h1v1h-1zM3 8h1v1h-1zM8 8h1v1h-1zM1 9h1v1h-1zM3 9h1v1h-1zM8 9h1v1h-1zM0 10h1v1h-1zM6 10h1v1h-1zM8 10h1v1h-1zM7 11h1v1h-1zM15 1h5v1h-5zM14 2h1v1h-1zM18 2h1v1h-1zM13 3h9v1h-9zM12 4h1v1h-1zM14 4h1v1h-1zM17 4h1v1h-1zM21 4h1v1h-1zM14 5h8v1h-8zM15 6h1v1h-1zM17 6h1v1h-1zM21 6h1v1h-1zM13 7h2v1h-2zM16 7h3v1h-3zM20 7h1v1h-1zM15 8h1v1h-1zM18 8h2v1h-2zM13 9h2v1h-2zM17 9h2v1h-2zM20 9h1v1h-1zM15 10h2v1h-2zM18 10h1v1h-1zM21 10h2v1h-2zM12 11h3v1h-3zM17 11h2v1h-2zM25 1h1v1h-1zM30 1h1v1h-1zM26 2h1v1h-1zM29 2h5v1h-5zM26 3h1v1h-1zM29 3h1v1h-1zM33 3h1v1h-1zM29 4h5v1h-5zM24 5h3v1h-3zM29 5h1v1h-1zM26 6h1v1h-1zM29 6h6v1h-6zM26 7h1v1h-1zM29 7h1v1h-1zM34 7h1v1h-1zM26 8h1v1h-1zM29 8h1v1h-1zM34 8h1v1h-1zM26 9h1v1h-1zM29 9h6v1h-6zM25 10h1v1h-1zM27 10h1v1h-1zM24 11h1v1h-1zM28 11h7v1h-7zM36 1h4v1h-4zM43 1h1v1h-1zM36 2h1v1h-1zM39 2h1v1h-1zM41 2h6v1h-6zM36 3h1v1h-1zM39 3h1v1h-1zM41 3h1v1h-1zM46 3h1v1h-1zM36 4h1v1h-1zM39 4h1v1h-1zM42 4h3v1h-3zM36 5h4v1h-4zM38 6h1v1h-1zM41 6h5v1h-5zM36 7h1v1h-1zM38 7h3v1h-3zM43 7h1v1h-1zM36 8h1v1h-1zM38 8h1v1h-1zM41 8h1v1h-1zM43 8h1v1h-1zM45 8h1v1h-1zM36 9h1v1h-1zM38 9h1v1h-1zM41 9h1v1h-1zM43 9h1v1h-1zM46 9h1v1h-1zM36 10h1v1h-1zM38 10h3v1h-3zM43 10h1v1h-1zM46 10h1v1h-1zM36 11h3v1h-3zM42 11h2v1h-2z"/></svg>
<div style="left:499px;top:719px;width:28px;height:18px;box-shadow:inset 1px 1px #000,inset -1px -1px #fff;background:repeating-conic-gradient(#fff 0 25%,#e4e2dc 0 50%) 0 0/2px 2px;"></div>
<svg class="t" style="left:501px;top:722px;" width="28" height="16"><path fill="#000" d="M2 1h1v1h-1zM6 1h1v1h-1zM8 1h1v1h-1zM2 2h1v1h-1zM6 2h1v1h-1zM9 2h1v1h-1zM1 3h1v1h-1zM6 3h4v1h-4zM1 4h1v1h-1zM4 4h3v1h-3zM0 5h3v1h-3zM6 5h5v1h-5zM2 6h1v1h-1zM4 6h3v1h-3zM1 7h1v1h-1zM6 7h1v1h-1zM9 7h1v1h-1zM0 8h4v1h-4zM6 8h1v1h-1zM8 8h1v1h-1zM4 9h1v1h-1zM7 9h1v1h-1zM10 9h1v1h-1zM2 10h2v1h-2zM6 10h1v1h-1zM8 10h1v1h-1zM10 10h1v1h-1zM0 11h2v1h-2zM4 11h2v1h-2zM9 11h2v1h-2zM17 1h1v1h-1zM12 2h11v1h-11zM12 3h1v1h-1zM15 3h1v1h-1zM19 3h1v1h-1zM22 3h1v1h-1zM13 4h9v1h-9zM15 5h1v1h-1zM19 5h1v1h-1zM14 6h7v1h-7zM14 7h1v1h-1zM17 7h1v1h-1zM20 7h1v1h-1zM14 8h1v1h-1zM17 8h1v1h-1zM20 8h1v1h-1zM14 9h1v1h-1zM16 9h1v1h-1zM18 9h1v1h-1zM20 9h1v1h-1zM22 9h1v1h-1zM15 10h1v1h-1zM18 10h1v1h-1zM22 10h1v1h-1zM12 11h3v1h-3zM19 11h4v1h-4z"/></svg>
<div style="left:531px;top:719px;width:28px;height:18px;box-shadow:inset 1px 1px #000,inset -1px -1px #fff;background:repeating-conic-gradient(#fff 0 25%,#e4e2dc 0 50%) 0 0/2px 2px;"></div>
<svg class="t" style="left:533px;top:722px;" width="28" height="16"><path fill="#000" d="M2 1h1v1h-1zM6 1h1v1h-1zM8 1h1v1h-1zM2 2h1v1h-1zM4 2h7v1h-7zM0 3h4v1h-4zM6 3h1v1h-1zM8 3h1v1h-1zM2 4h1v1h-1zM5 4h5v1h-5zM2 5h2v1h-2zM5 5h1v1h-1zM9 5h1v1h-1zM1 6h2v1h-2zM4 6h6v1h-6zM1 7h2v1h-2zM5 7h1v1h-1zM9 7h1v1h-1zM0 8h1v1h-1zM2 8h1v1h-1zM4 8h7v1h-7zM2 9h1v1h-1zM7 9h1v1h-1zM2 10h1v1h-1zM6 10h1v1h-1zM8 10h1v1h-1zM2 11h1v1h-1zM4 11h2v1h-2zM9 11h2v1h-2zM13 1h6v1h-6zM21 1h1v1h-1zM14 2h1v1h-1zM16 2h1v1h-1zM19 2h1v1h-1zM21 2h1v1h-1zM14 3h1v1h-1zM16 3h1v1h-1zM19 3h1v1h-1zM21 3h1v1h-1zM12 4h8v1h-8zM21 4h1v1h-1zM14 5h1v1h-1zM16 5h1v1h-1zM19 5h1v1h-1zM21 5h1v1h-1zM14 6h1v1h-1zM16 6h1v1h-1zM21 6h1v1h-1zM13 7h1v1h-1zM16 7h2v1h-2zM20 7h2v1h-2zM17 8h1v1h-1zM14 9h7v1h-7zM17 10h1v1h-1zM12 11h11v1h-11z"/></svg>
<div style="left:984px;top:719px;width:24px;height:19px;box-shadow:inset 1px 1px #808080,inset -1px -1px #fff;"></div>
<svg style="left:988px;top:721px" width="16" height="16" viewBox="0 0 16 16"><defs><linearGradient id="dg" x1="0" y1="0" x2="1" y2="1"><stop offset="0" stop-color="#dfe8ff"/><stop offset="1" stop-color="#3a5aa8"/></linearGradient></defs><path d="M4 2a7 7 0 0 0 8 9.5z" fill="url(#dg)" stroke="#2a3a7a" stroke-width=".8"/><path d="M7 7l5-5" stroke="#2a3a7a" stroke-width="1.2"/><path d="M6 10.5v2.5M2.5 14h7" stroke="#2a3a6a" stroke-width="1.5"/><path d="M2.5 14h5" stroke="#fff" stroke-width=".8"/></svg>
<svg style="left:1014px;top:730px" width="8" height="5"><path d="M0 0h7v1h-1v1h-1v1h-1v1h-1v-1h-1v-1h-1v-1h-1z" fill="#000"/></svg>
<div style="left:0px;top:738px;width:1024px;height:30px;background:#d4d0c8;border-top:1px solid #d4d0c8;box-shadow:inset 0 1px #d4d0c8, inset 0 2px #fff;"></div>
<div style="left:2px;top:742px;width:47px;height:22px;box-shadow:inset -1px -1px #404040,inset 1px 1px #d4d0c8,inset -2px -2px #808080,inset 2px 2px #fff;background:#d4d0c8;"></div>
<svg style="left:3px;top:744px" width="18" height="16" viewBox="0 0 18 16"><path d="M1.5 9.5l1.8-6.5c2-1 3.6-.8 5 .3l-1.8 6.3c-1.4-1-3-1.2-5-.1z" fill="#e8602a"/><path d="M9 3.5c1.4 1 3 1.2 5 .2l-1.8 6.3c-2 1-3.6.8-5-.2z" fill="#5ab82a"/><path d="M1 11l1.5-1c2-1 3.6-.8 5 .3l-1.8 5.5c-1.4-1-3-1.2-5-.2z" fill="#3a7ad8"/><path d="M7.5 10.8c1.4 1 3 1.2 5 .2l-1.6 5.3c-2 1-3.6.8-5-.2z" fill="#f0c82a"/></svg>
<svg class="t" style="left:22px;top:745px;" width="28" height="16"><path fill="#000" d="M1 1h9v1h-9zM3 2h1v1h-1zM7 2h1v1h-1zM3 3h1v1h-1zM7 3h1v1h-1zM3 4h1v1h-1zM7 4h1v1h-1zM3 5h1v1h-1zM7 5h1v1h-1zM0 6h11v1h-11zM3 7h1v1h-1zM7 7h1v1h-1zM2 8h1v1h-1zM7 8h1v1h-1zM2 9h1v1h-1zM7 9h1v1h-1zM1 10h1v1h-1zM7 10h1v1h-1zM0 11h1v1h-1zM7 11h1v1h-1zM14 1h1v1h-1zM19 1h1v1h-1zM14 2h1v1h-1zM19 2h1v1h-1zM12 3h5v1h-5zM18 3h1v1h-1zM21 3h1v1h-1zM14 4h1v1h-1zM16 4h1v1h-1zM18 4h1v1h-1zM22 4h1v1h-1zM14 5h1v1h-1zM16 5h7v1h-7zM13 6h1v1h-1zM16 6h1v1h-1zM13 7h1v1h-1zM15 7h1v1h-1zM18 7h5v1h-5zM14 8h2v1h-2zM18 8h1v1h-1zM22 8h1v1h-1zM14 9h1v1h-1zM16 9h1v1h-1zM18 9h1v1h-1zM22 9h1v1h-1zM13 10h1v1h-1zM16 10h1v1h-1zM18 10h5v1h-5zM12 11h1v1h-1zM18 11h1v1h-1zM22 11h1v1h-1z"/></svg>
<div style="left:56px;top:744px;width:3px;height:19px;box-shadow:inset 1px 1px #fff,inset -1px -1px #808080;"></div>
<svg style="left:66px;top:745px" width="18" height="18" viewBox="0 0 18 18"><circle cx="9" cy="10" r="6" fill="none" stroke="#2a72d0" stroke-width="3"/><path d="M4 10h10" stroke="#2a72d0" stroke-width="2.5"/><path d="M2 15c2-6 8-11 14-12" fill="none" stroke="#e8a020" stroke-width="1.5"/></svg>
<svg style="left:89px;top:745px" width="18" height="18" viewBox="0 0 18 18"><rect x="2" y="2" width="13" height="14" rx="3" fill="#3a7ad0" stroke="#1a3a8a"/><path d="M6 5h6v8H6z" fill="#dfefff"/><path d="M7 11l4-4" stroke="#1a3a8a" stroke-width="1.5"/></svg>
<div style="left:146px;top:744px;width:3px;height:19px;box-shadow:inset 1px 1px #fff,inset -1px -1px #808080;"></div>
<div style="left:152px;top:742px;width:160px;height:22px;box-shadow:inset -1px -1px #404040,inset 1px 1px #d4d0c8,inset -2px -2px #808080,inset 2px 2px #fff;background:#d4d0c8;"></div>
<svg style="left:156px;top:745px" width="18" height="16" viewBox="0 0 18 16"><rect x="1" y="1" width="16" height="14" fill="#50d0f0"/><path d="M1 9l16-2v3H1z" fill="#f0e040"/><rect x="1" y="10" width="16" height="5" fill="#10208a"/><path d="M2 12.5h14" stroke="#fff"/><path d="M4.5 1v8" stroke="#000"/><path d="M3 9h3" stroke="#000"/></svg>
<svg class="t" style="left:177px;top:747px;" width="136" height="16"><path fill="#000" d="M8 1h7v1h-7zM8 2h1v1h-1zM14 2h1v1h-1zM8 3h7v1h-7zM6 5h11v1h-11zM10 6h1v1h-1zM9 7h6v1h-6zM14 8h1v1h-1zM14 9h1v1h-1zM11 10h1v1h-1zM14 10h1v1h-1zM12 11h2v1h-2zM22 1h1v1h-1zM22 2h5v1h-5zM22 3h1v1h-1zM22 4h1v1h-1zM18 5h11v1h-11zM22 6h1v1h-1zM22 7h1v1h-1zM24 7h1v1h-1zM22 8h1v1h-1zM25 8h1v1h-1zM22 9h1v1h-1zM26 9h1v1h-1zM22 10h1v1h-1zM22 11h1v1h-1z"/><text x="-0.34" y="11" font-family="Liberation Sans" font-size="11.04" font-weight="normal" fill="#000">1</text><text x="30" y="11" font-family="Liberation Mono" font-size="12.00" font-weight="normal" fill="#000" textLength="102" lengthAdjust="spacingAndGlyphs">---AutoCut----...</text></svg>
<div style="left:316px;top:742px;width:160px;height:22px;box-shadow:inset 1px 1px #000,inset -1px -1px #fff,inset 2px 2px #808080,inset -2px -2px #d4d0c8;background:repeating-conic-gradient(#fff 0 25%,#d4d0c8 0 50%) 0 0/2px 2px;"></div>
<svg style="left:321px;top:746px" width="16" height="16" viewBox="0 0 16 16"><rect x="0.5" y="0.5" width="15" height="15" fill="#1e78b4" stroke="#bfe4f5"/><text x="8" y="13" text-anchor="middle" font-family="Liberation Sans" font-weight="bold" font-size="14" fill="#e8f4ff">a</text></svg>
<svg class="t" style="left:341px;top:748px;" width="136" height="16"><text x="0" y="11" font-family="Liberation Mono" font-size="12.00" font-weight="normal" fill="#000" textLength="48" lengthAdjust="spacingAndGlyphs">AutoCAD&#160;</text><text x="47.66 53.66 59.66 65.66" y="11" font-family="Liberation Sans" font-size="11.04" font-weight="normal" fill="#000">2004</text><text x="72" y="11" font-family="Liberation Mono" font-size="12.00" font-weight="normal" fill="#000" textLength="60" lengthAdjust="spacingAndGlyphs">&#160;-&#160;[Dra...</text></svg>
<div style="left:479px;top:742px;width:160px;height:22px;box-shadow:inset -1px -1px #404040,inset 1px 1px #d4d0c8,inset -2px -2px #808080,inset 2px 2px #fff;background:#d4d0c8;"></div>
<svg style="left:484px;top:745px" width="18" height="18" viewBox="0 0 18 18"><path d="M3 4h12l-2 12H5z" fill="#e8e0d0" stroke="#888"/><path d="M5 3l2 10M9 2v11M13 3l-2 10" stroke="#d03030" stroke-width="1.6"/><path d="M7 3l1 10" stroke="#30a030" stroke-width="1.4"/><path d="M11 3l-1 10" stroke="#3050d0" stroke-width="1.4"/></svg>
<svg class="t" style="left:503px;top:747px;" width="82" height="16"><path fill="#000" d="M5 1h1v1h-1zM5 2h1v1h-1zM1 3h9v1h-9zM5 4h1v1h-1zM0 5h11v1h-11zM5 6h1v1h-1zM4 7h3v1h-3zM3 8h1v1h-1zM5 8h1v1h-1zM7 8h1v1h-1zM2 9h1v1h-1zM5 9h1v1h-1zM8 9h1v1h-1zM0 10h2v1h-2zM5 10h1v1h-1zM9 10h2v1h-2zM5 11h1v1h-1zM17 1h1v1h-1zM16 2h1v1h-1zM18 2h1v1h-1zM15 3h1v1h-1zM19 3h1v1h-1zM12 4h3v1h-3zM16 4h3v1h-3zM20 4h3v1h-3zM13 6h4v1h-4zM18 6h4v1h-4zM13 7h1v1h-1zM16 7h1v1h-1zM18 7h1v1h-1zM21 7h1v1h-1zM13 8h1v1h-1zM16 8h1v1h-1zM18 8h1v1h-1zM21 8h1v1h-1zM13 9h4v1h-4zM18 9h1v1h-1zM21 9h1v1h-1zM13 10h1v1h-1zM16 10h1v1h-1zM18 10h1v1h-1zM20 10h2v1h-2zM18 11h1v1h-1zM27 1h1v1h-1zM27 2h7v1h-7zM27 3h1v1h-1zM32 3h1v1h-1zM26 4h1v1h-1zM28 4h1v1h-1zM31 4h1v1h-1zM25 5h1v1h-1zM29 5h2v1h-2zM29 6h1v1h-1zM27 7h7v1h-7zM24 8h4v1h-4zM33 8h1v1h-1zM27 9h1v1h-1zM33 9h1v1h-1zM27 10h1v1h-1zM33 10h1v1h-1zM27 11h7v1h-7zM54 1h11v1h-11zM56 3h7v1h-7zM54 4h1v1h-1zM56 4h1v1h-1zM59 4h1v1h-1zM62 4h1v1h-1zM64 4h1v1h-1zM54 5h1v1h-1zM56 5h1v1h-1zM59 5h1v1h-1zM62 5h1v1h-1zM64 5h1v1h-1zM54 6h1v1h-1zM56 6h7v1h-7zM64 6h1v1h-1zM54 7h1v1h-1zM56 7h1v1h-1zM59 7h1v1h-1zM62 7h1v1h-1zM64 7h1v1h-1zM54 8h1v1h-1zM56 8h1v1h-1zM59 8h1v1h-1zM62 8h1v1h-1zM64 8h1v1h-1zM54 9h1v1h-1zM56 9h7v1h-7zM64 9h1v1h-1zM54 10h1v1h-1zM64 10h1v1h-1zM54 11h11v1h-11zM67 1h10v1h-10zM67 2h1v1h-1zM70 2h1v1h-1zM76 2h1v1h-1zM67 3h1v1h-1zM70 3h5v1h-5zM76 3h1v1h-1zM67 4h1v1h-1zM69 4h2v1h-2zM73 4h1v1h-1zM76 4h1v1h-1zM67 5h2v1h-2zM71 5h2v1h-2zM76 5h1v1h-1zM67 6h1v1h-1zM70 6h1v1h-1zM73 6h1v1h-1zM76 6h1v1h-1zM67 7h3v1h-3zM71 7h1v1h-1zM74 7h3v1h-3zM67 8h1v1h-1zM72 8h1v1h-1zM76 8h1v1h-1zM67 9h1v1h-1zM71 9h1v1h-1zM76 9h1v1h-1zM67 10h1v1h-1zM72 10h1v1h-1zM76 10h1v1h-1zM67 11h10v1h-10z"/><text x="36" y="11" font-family="Liberation Mono" font-size="12.00" font-weight="normal" fill="#000" textLength="18" lengthAdjust="spacingAndGlyphs">&#160;-&#160;</text></svg>
<div style="left:924px;top:744px;width:3px;height:19px;box-shadow:inset 1px 1px #fff,inset -1px -1px #808080;"></div>
<svg style="left:933px;top:746px" width="18" height="16" viewBox="0 0 18 16"><rect x="1.5" y="6.5" width="15" height="8" rx="1.5" fill="#fff" stroke="#000"/><path d="M4 9h10M4 11h10" stroke="#000" stroke-dasharray="1 1"/><path d="M6 6V3h2v-2h3" fill="none" stroke="#000"/></svg>
<div style="left:961px;top:742px;width:61px;height:23px;box-shadow:inset 1px 1px #808080,inset -1px -1px #fff;"></div>
<svg style="left:967px;top:749px" width="12" height="10"><path d="M5 1L1 5l4 4M10 1L6 5l4 4" fill="none" stroke="#000" stroke-width="2"/></svg>
<svg class="t" style="left:986px;top:748px;" width="28" height="16"><text x="-0.48 7.26 11.52 17.52" y="10" font-family="Liberation Sans" font-size="11.50" font-weight="normal" fill="#000">2:04</text></svg>
<div style="left:954px;top:744px;width:2px;height:20px;border-left:1px solid #808080;border-right:1px solid #fff;"></div></body></html>
